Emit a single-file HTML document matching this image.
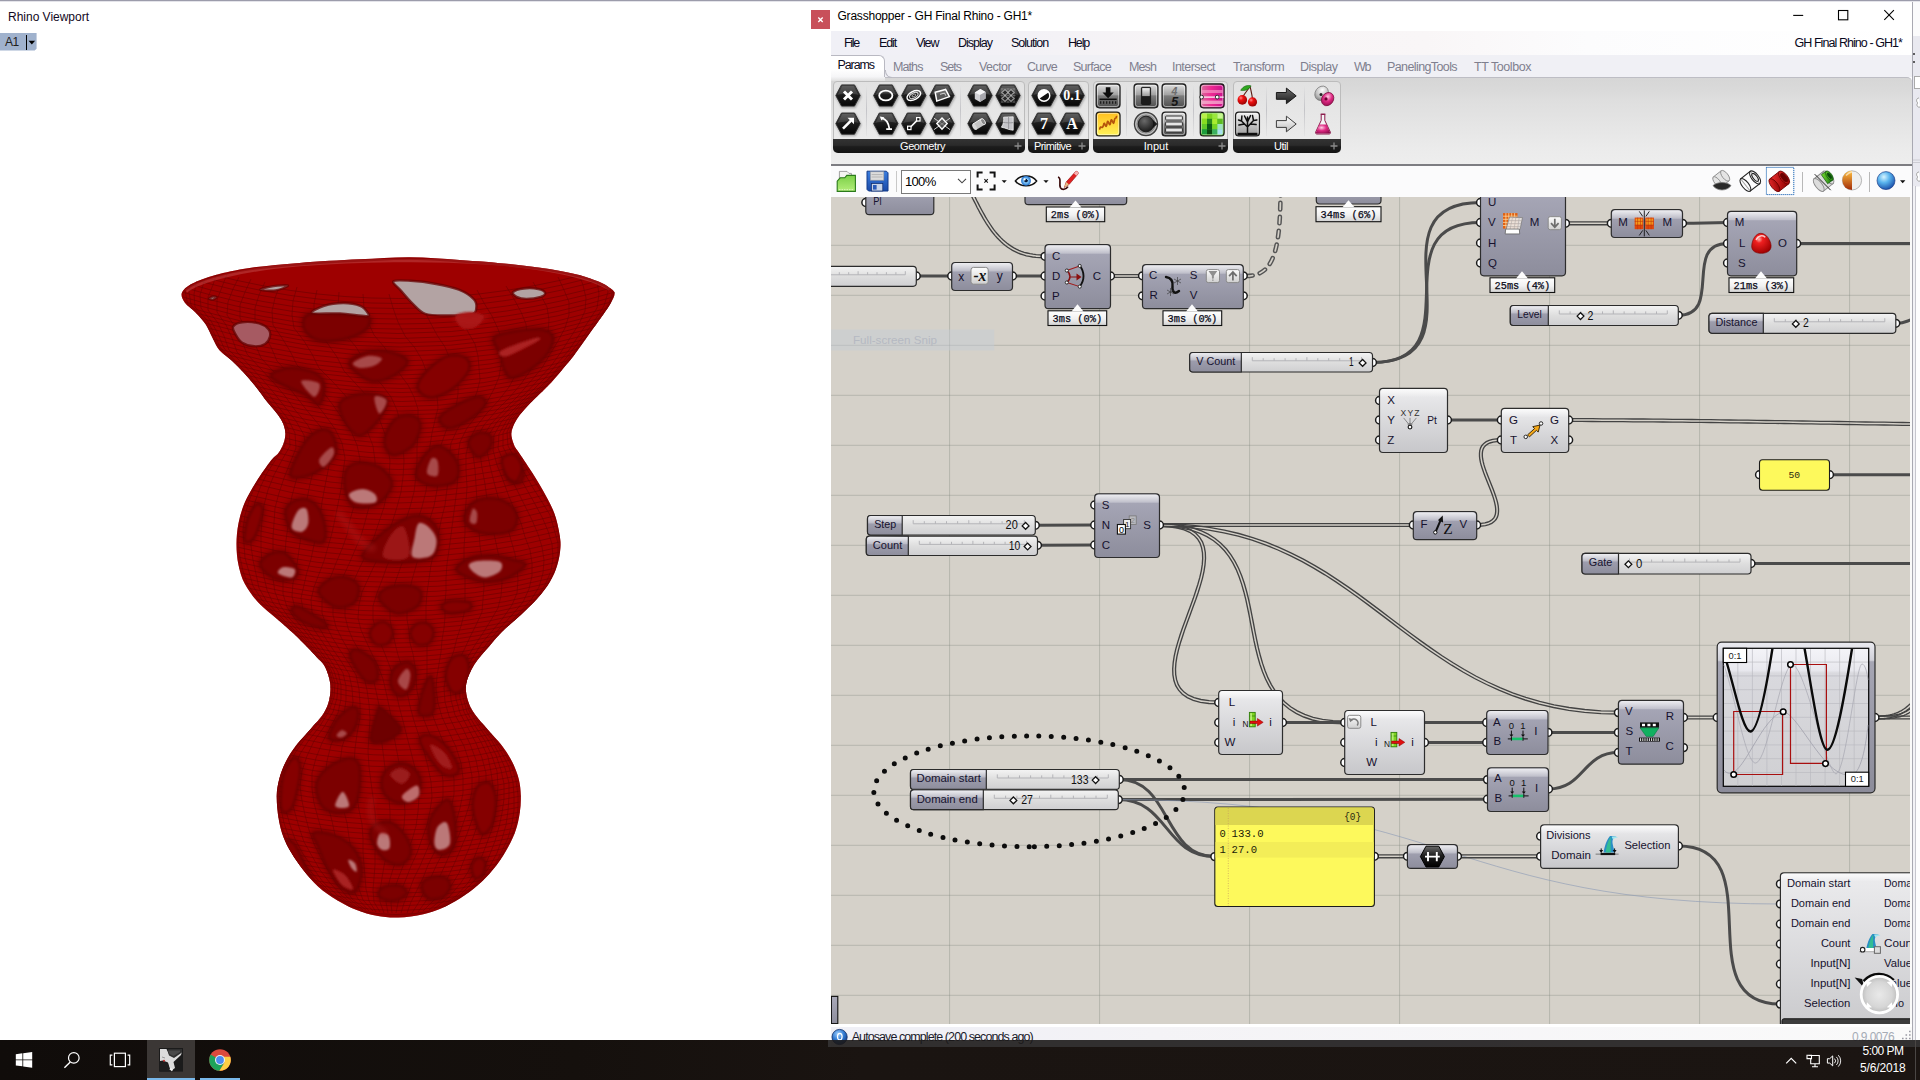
<!DOCTYPE html>
<html><head><meta charset="utf-8"><title>Grasshopper - GH Final Rhino</title><style>html,body{margin:0;padding:0}body{width:1920px;height:1080px;overflow:hidden;background:#fff;position:relative;font-family:"Liberation Sans",sans-serif}
.a{position:absolute;display:block}.t{position:absolute;white-space:nowrap;display:block}svg{overflow:hidden}</style></head>
<body>
<!-- rhino viewport -->
<svg class="a" style="left:160px;top:240px" width="480" height="700" viewBox="160 240 480 700"><defs><clipPath id="vc"><path d="M181.9 292.8C183.1 289.7 186.3 286.8 191.9 283.8C197.5 280.8 206.1 277.5 215.7 274.9C225.3 272.2 235.7 269.9 249.6 267.9C263.6 265.9 281.2 264.3 299.4 262.9C317.6 261.5 340.6 260.2 359.0 259.3C377.4 258.4 393.2 257.1 410.0 257.2C426.8 257.3 443.1 258.8 459.7 259.9C476.3 261.0 494.6 262.4 509.5 263.9C524.4 265.4 537.7 267.1 549.3 268.9C560.9 270.7 570.9 272.8 579.2 274.9C587.5 277.0 593.8 279.5 599.1 281.8C604.4 284.1 608.4 286.8 611.0 288.8C613.6 290.8 614.6 291.5 614.6 293.8C614.6 296.1 612.9 299.2 611.0 302.7C609.1 306.2 606.1 310.4 603.1 314.7C600.1 319.0 596.4 324.0 593.1 328.6C589.8 333.2 586.5 338.0 583.2 342.6C579.9 347.2 576.5 352.2 573.2 356.5C569.9 360.8 566.9 364.1 563.2 368.4C559.6 372.7 555.3 378.1 551.3 382.4C547.3 386.7 543.4 390.3 539.4 394.3C535.4 398.3 531.0 402.3 527.4 406.3C523.8 410.3 520.0 414.6 517.5 418.2C515.0 421.8 513.5 425.2 512.5 428.2C511.5 431.2 511.2 433.1 511.5 436.1C511.8 439.1 513.3 443.4 514.5 446.1C515.7 448.8 516.0 448.3 518.8 452.5C521.6 456.7 527.1 464.7 531.3 471.3C535.5 477.9 540.0 485.1 543.8 492.0C547.6 498.9 551.6 506.0 554.2 513.0C556.8 520.0 558.4 527.9 559.4 533.8C560.4 539.7 560.8 543.1 560.4 548.3C560.0 553.5 559.0 559.4 557.3 565.0C555.6 570.6 553.3 576.2 550.0 581.7C546.7 587.2 542.4 592.8 537.5 598.3C532.6 603.8 526.7 609.4 520.8 615.0C514.9 620.6 507.6 626.2 502.0 631.7C496.4 637.2 492.2 642.8 487.5 648.3C482.8 653.8 477.5 659.2 474.0 665.0C470.5 670.8 467.4 677.5 466.3 683.3C465.2 689.1 466.2 694.8 467.7 700.0C469.1 705.2 471.7 709.7 475.0 714.6C478.3 719.5 483.0 724.0 487.5 729.2C492.0 734.4 497.8 740.2 502.0 745.8C506.2 751.3 509.7 756.9 512.5 762.5C515.3 768.1 517.4 773.7 518.8 779.2C520.2 784.8 520.6 790.2 520.8 795.8C521.0 801.3 520.6 806.8 519.8 812.5C519.0 818.2 517.7 824.3 515.8 830.0C513.9 835.7 511.5 840.9 508.3 846.7C505.1 852.5 501.1 859.2 496.7 865.0C492.3 870.8 487.0 876.7 481.7 881.7C476.4 886.7 471.1 890.8 465.0 895.0C458.9 899.2 451.9 903.5 445.0 906.7C438.1 909.9 431.1 912.4 423.3 914.2C415.5 916.0 406.1 917.2 398.3 917.5C390.5 917.8 383.6 917.0 376.7 915.8C369.8 914.5 363.4 912.6 356.7 910.0C350.0 907.4 343.1 903.9 336.7 900.0C330.3 896.1 323.9 891.7 318.3 886.7C312.7 881.7 307.7 875.6 303.3 870.0C298.9 864.4 295.0 858.8 291.7 853.3C288.4 847.8 285.5 842.6 283.3 836.7C281.1 830.8 279.6 824.8 278.5 818.0C277.4 811.2 276.6 802.3 276.7 795.8C276.8 789.3 277.8 784.8 279.2 779.2C280.6 773.7 282.6 768.1 285.4 762.5C288.2 756.9 291.6 751.3 295.8 745.8C300.0 740.2 305.9 734.4 310.4 729.2C314.9 724.0 319.8 719.5 322.9 714.6C326.0 709.7 328.0 705.2 329.2 700.0C330.4 694.8 330.9 688.8 330.2 683.3C329.5 677.8 327.3 671.1 325.0 666.7C322.7 662.3 319.3 660.1 316.5 657.0C313.7 653.9 312.1 652.2 308.3 648.3C304.5 644.4 299.0 638.7 293.8 633.8C288.6 628.9 282.9 624.2 277.0 619.0C271.1 613.8 263.7 608.4 258.3 602.5C252.9 596.6 248.1 590.0 244.8 583.8C241.5 577.5 239.9 571.6 238.5 565.0C237.1 558.4 236.5 551.2 236.5 544.2C236.5 537.2 237.1 530.2 238.5 523.3C239.9 516.3 241.8 509.4 244.8 502.5C247.8 495.6 252.0 488.6 256.3 481.7C260.6 474.8 267.1 465.6 270.8 460.8C274.5 456.0 276.4 455.8 278.5 453.0C280.6 450.2 282.2 447.2 283.4 444.1C284.5 441.0 285.4 437.4 285.4 434.1C285.4 430.8 284.7 427.5 283.4 424.2C282.1 420.9 280.1 417.8 277.5 414.2C274.9 410.6 271.1 406.9 267.5 402.3C263.9 397.7 259.6 391.4 255.6 386.4C251.6 381.4 247.6 376.7 243.6 372.4C239.6 368.1 235.7 364.1 231.7 360.5C227.7 356.9 222.8 354.1 219.7 350.5C216.5 346.9 215.1 342.9 212.8 338.6C210.5 334.3 208.6 328.9 205.8 324.6C203.0 320.3 199.3 316.4 195.8 312.7C192.3 309.0 187.2 306.0 184.9 302.7C182.6 299.4 180.7 295.9 181.9 292.8z"/></clipPath><filter id="vb" x="-5%" y="-5%" width="110%" height="110%"><feGaussianBlur stdDeviation=".9"/></filter><filter id="vb2" x="-5%" y="-5%" width="110%" height="110%"><feGaussianBlur stdDeviation="2.2"/></filter></defs><path d="M181.9 292.8C183.1 289.7 186.3 286.8 191.9 283.8C197.5 280.8 206.1 277.5 215.7 274.9C225.3 272.2 235.7 269.9 249.6 267.9C263.6 265.9 281.2 264.3 299.4 262.9C317.6 261.5 340.6 260.2 359.0 259.3C377.4 258.4 393.2 257.1 410.0 257.2C426.8 257.3 443.1 258.8 459.7 259.9C476.3 261.0 494.6 262.4 509.5 263.9C524.4 265.4 537.7 267.1 549.3 268.9C560.9 270.7 570.9 272.8 579.2 274.9C587.5 277.0 593.8 279.5 599.1 281.8C604.4 284.1 608.4 286.8 611.0 288.8C613.6 290.8 614.6 291.5 614.6 293.8C614.6 296.1 612.9 299.2 611.0 302.7C609.1 306.2 606.1 310.4 603.1 314.7C600.1 319.0 596.4 324.0 593.1 328.6C589.8 333.2 586.5 338.0 583.2 342.6C579.9 347.2 576.5 352.2 573.2 356.5C569.9 360.8 566.9 364.1 563.2 368.4C559.6 372.7 555.3 378.1 551.3 382.4C547.3 386.7 543.4 390.3 539.4 394.3C535.4 398.3 531.0 402.3 527.4 406.3C523.8 410.3 520.0 414.6 517.5 418.2C515.0 421.8 513.5 425.2 512.5 428.2C511.5 431.2 511.2 433.1 511.5 436.1C511.8 439.1 513.3 443.4 514.5 446.1C515.7 448.8 516.0 448.3 518.8 452.5C521.6 456.7 527.1 464.7 531.3 471.3C535.5 477.9 540.0 485.1 543.8 492.0C547.6 498.9 551.6 506.0 554.2 513.0C556.8 520.0 558.4 527.9 559.4 533.8C560.4 539.7 560.8 543.1 560.4 548.3C560.0 553.5 559.0 559.4 557.3 565.0C555.6 570.6 553.3 576.2 550.0 581.7C546.7 587.2 542.4 592.8 537.5 598.3C532.6 603.8 526.7 609.4 520.8 615.0C514.9 620.6 507.6 626.2 502.0 631.7C496.4 637.2 492.2 642.8 487.5 648.3C482.8 653.8 477.5 659.2 474.0 665.0C470.5 670.8 467.4 677.5 466.3 683.3C465.2 689.1 466.2 694.8 467.7 700.0C469.1 705.2 471.7 709.7 475.0 714.6C478.3 719.5 483.0 724.0 487.5 729.2C492.0 734.4 497.8 740.2 502.0 745.8C506.2 751.3 509.7 756.9 512.5 762.5C515.3 768.1 517.4 773.7 518.8 779.2C520.2 784.8 520.6 790.2 520.8 795.8C521.0 801.3 520.6 806.8 519.8 812.5C519.0 818.2 517.7 824.3 515.8 830.0C513.9 835.7 511.5 840.9 508.3 846.7C505.1 852.5 501.1 859.2 496.7 865.0C492.3 870.8 487.0 876.7 481.7 881.7C476.4 886.7 471.1 890.8 465.0 895.0C458.9 899.2 451.9 903.5 445.0 906.7C438.1 909.9 431.1 912.4 423.3 914.2C415.5 916.0 406.1 917.2 398.3 917.5C390.5 917.8 383.6 917.0 376.7 915.8C369.8 914.5 363.4 912.6 356.7 910.0C350.0 907.4 343.1 903.9 336.7 900.0C330.3 896.1 323.9 891.7 318.3 886.7C312.7 881.7 307.7 875.6 303.3 870.0C298.9 864.4 295.0 858.8 291.7 853.3C288.4 847.8 285.5 842.6 283.3 836.7C281.1 830.8 279.6 824.8 278.5 818.0C277.4 811.2 276.6 802.3 276.7 795.8C276.8 789.3 277.8 784.8 279.2 779.2C280.6 773.7 282.6 768.1 285.4 762.5C288.2 756.9 291.6 751.3 295.8 745.8C300.0 740.2 305.9 734.4 310.4 729.2C314.9 724.0 319.8 719.5 322.9 714.6C326.0 709.7 328.0 705.2 329.2 700.0C330.4 694.8 330.9 688.8 330.2 683.3C329.5 677.8 327.3 671.1 325.0 666.7C322.7 662.3 319.3 660.1 316.5 657.0C313.7 653.9 312.1 652.2 308.3 648.3C304.5 644.4 299.0 638.7 293.8 633.8C288.6 628.9 282.9 624.2 277.0 619.0C271.1 613.8 263.7 608.4 258.3 602.5C252.9 596.6 248.1 590.0 244.8 583.8C241.5 577.5 239.9 571.6 238.5 565.0C237.1 558.4 236.5 551.2 236.5 544.2C236.5 537.2 237.1 530.2 238.5 523.3C239.9 516.3 241.8 509.4 244.8 502.5C247.8 495.6 252.0 488.6 256.3 481.7C260.6 474.8 267.1 465.6 270.8 460.8C274.5 456.0 276.4 455.8 278.5 453.0C280.6 450.2 282.2 447.2 283.4 444.1C284.5 441.0 285.4 437.4 285.4 434.1C285.4 430.8 284.7 427.5 283.4 424.2C282.1 420.9 280.1 417.8 277.5 414.2C274.9 410.6 271.1 406.9 267.5 402.3C263.9 397.7 259.6 391.4 255.6 386.4C251.6 381.4 247.6 376.7 243.6 372.4C239.6 368.1 235.7 364.1 231.7 360.5C227.7 356.9 222.8 354.1 219.7 350.5C216.5 346.9 215.1 342.9 212.8 338.6C210.5 334.3 208.6 328.9 205.8 324.6C203.0 320.3 199.3 316.4 195.8 312.7C192.3 309.0 187.2 306.0 184.9 302.7C182.6 299.4 180.7 295.9 181.9 292.8z" fill="#9e0000"/><g clip-path="url(#vc)"><path d="M182 266Q398 331 615 266M182 271Q398 336 615 271M182 276Q398 341 615 276M182 282Q398 346 615 282M182 287Q398 351 615 287M182 292Q398 356 615 292M183 297Q398 361 613 297M185 302Q398 365 611 302M190 308Q399 369 608 308M196 313Q400 373 604 313M200 318Q400 376 601 318M205 323Q401 380 597 323M208 328Q400 384 593 328M210 334Q400 388 590 334M213 339Q399 393 586 339M216 344Q399 397 582 344M219 349Q399 401 578 349M224 354Q400 404 575 354M231 360Q401 408 571 360M236 365Q401 412 566 365M241 370Q402 415 562 370M246 375Q402 419 557 375M250 380Q402 423 553 380M255 386Q402 427 548 386M259 391Q401 431 543 391M263 396Q400 434 538 396M267 401Q400 438 533 401M271 406Q399 442 527 406M275 412Q399 446 523 412M279 417Q399 450 519 417M282 422Q399 454 516 422M284 427Q399 459 513 427M285 432Q399 463 512 432M285 438Q398 469 512 438M284 443Q399 474 514 443M281 448Q399 480 516 448M278 453Q399 486 519 453M273 458Q398 492 523 458M269 464Q398 498 526 464M265 469Q397 504 530 469M262 474Q397 510 533 474M258 479Q397 516 536 479M255 484Q397 522 539 484M252 490Q397 528 542 490M249 495Q397 534 545 495M246 500Q397 540 548 500M244 505Q397 545 550 505M242 510Q398 551 553 510M241 516Q398 556 555 516M239 521Q398 562 556 521M238 526Q398 567 557 526M238 531Q398 572 559 531M237 536Q398 578 560 536M237 542Q398 583 560 542M237 547Q399 588 560 547M237 552Q398 593 560 552M238 557Q398 598 559 557M238 562Q398 603 558 562M239 568Q398 607 556 568M241 573Q398 612 554 573M243 578Q397 617 552 578M245 583Q397 621 549 583M248 588Q397 625 545 588M252 594Q396 629 541 594M256 599Q396 633 537 599M260 604Q396 637 532 604M266 609Q396 641 527 609M272 614Q397 645 521 614M278 620Q397 648 516 620M284 625Q397 652 510 625M289 630Q397 656 504 630M295 635Q397 660 499 635M300 640Q397 664 494 640M306 646Q398 668 490 646M311 651Q398 672 485 651M316 656Q398 676 481 656M320 661Q399 680 477 661M325 666Q399 684 473 666M327 672Q399 689 471 672M328 677Q399 693 469 677M330 682Q398 698 467 682M330 687Q398 703 467 687M330 692Q398 708 467 692M329 698Q398 714 467 698M328 703Q399 719 469 703M326 708Q399 725 472 708M324 713Q399 730 474 713M320 718Q399 736 478 718M315 724Q399 743 483 724M311 729Q399 749 487 729M306 734Q399 755 492 734M302 739Q399 761 496 739M297 744Q399 767 501 744M293 750Q399 773 504 750M290 755Q399 779 508 755M287 760Q399 785 511 760M284 765Q399 790 514 765M282 770Q399 796 515 770M281 776Q399 801 517 776M279 781Q399 807 519 781M278 786Q399 812 520 786M277 791Q399 817 520 791M277 796Q399 823 521 796M277 802Q399 828 520 802M278 807Q399 833 520 807M278 812Q399 838 520 812M278 817Q399 843 519 817M280 822Q399 847 518 822M281 828Q399 852 516 828M282 833Q398 857 515 833M284 838Q398 862 512 838M287 843Q398 866 510 843M289 848Q398 871 507 848M292 854Q398 875 504 854M296 859Q398 880 501 859M299 864Q398 884 497 864M303 869Q398 888 493 869M307 874Q398 893 488 874M312 880Q398 897 484 880M317 885Q397 901 478 885M323 890Q397 905 471 890M330 895Q397 909 465 895M337 900Q397 912 456 900M348 906Q397 915 447 906M359 911Q396 918 433 911" fill="none" stroke="#640000" stroke-width=".8" opacity=".7"/><path d="M186 263L186 277L185 291L188 305L201 318L210 332L217 346L231 360L245 374L257 388L267 402L279 416L285 430L283 444L274 458L263 472L254 486L246 500L242 514L239 528L238 543L240 557L243 571L248 585L258 599L272 613L287 627L301 640L314 654L326 668L330 682L329 696L325 710L315 724L303 738L292 752L284 766L279 780L277 794L278 808L280 822L283 836L290 850L299 864L311 878L327 892L350 906M192 265L191 279L189 292L191 305L203 319L211 332L218 346L231 360L245 374L257 388L267 402L279 416L285 430L283 444L274 458L264 472L255 486L249 501L245 515L243 530L244 544L245 558L249 572L253 586L262 600L275 614L289 627L303 641L315 655L326 668L330 682L330 696L325 710L315 724L303 738L292 752L284 766L279 780L277 794L278 808L280 822L285 836L292 851L302 865L314 879L329 893L351 907M199 267L197 280L194 294L195 307L207 320L214 333L220 347L233 361L246 374L258 388L268 402L280 416L286 430L285 445L276 459L267 473L260 488L255 502L252 517L251 532L251 546L253 560L256 574L259 588L267 602L279 615L292 628L305 641L317 655L328 669L331 682L330 696L326 710L315 724L303 738L293 752L285 766L281 780L279 795L281 809L284 823L289 838L297 852L306 866L318 880L332 894L353 907M208 269L204 282L200 295L201 308L211 321L218 334L224 348L236 362L249 375L261 389L271 403L283 417L289 431L290 446L282 460L274 475L268 490L264 505L262 520L261 534L261 549L262 563L264 577L267 590L273 603L284 616L296 629L308 642L319 656L329 669L333 683L332 697L327 711L317 725L305 739L295 753L288 767L285 782L284 796L286 811L290 825L295 839L303 854L313 868L323 882L337 895L356 908M217 272L213 285L208 297L208 310L218 323L224 336L229 350L242 363L255 377L266 391L277 405L288 419L295 433L296 448L290 463L284 478L279 493L275 508L274 523L273 537L273 552L273 565L273 579L275 592L280 605L289 618L300 630L311 643L322 656L331 670L335 683L334 697L329 711L320 726L309 740L300 754L294 769L291 783L291 798L295 813L299 827L304 842L312 856L320 870L330 883L342 896L359 909M227 274L222 287L217 300L217 312L226 325L232 338L237 352L249 365L262 379L274 393L285 407L296 421L304 435L306 450L301 465L296 481L292 496L289 511L288 526L286 540L285 554L284 568L283 581L283 594L287 607L295 619L305 631L315 644L325 657L334 671L338 684L337 698L333 712L324 727L314 741L307 756L302 771L300 786L302 801L305 815L309 830L314 844L321 858L329 872L337 885L347 897L363 910M239 277L233 289L228 302L227 315L236 328L242 341L247 354L260 368L273 382L285 396L295 410L307 424L315 438L317 453L314 468L310 484L307 499L304 514L302 529L300 543L298 557L296 570L293 583L292 596L295 608L301 620L310 633L320 645L329 658L338 672L341 685L341 699L338 713L330 728L322 743L316 758L312 773L312 789L314 803L318 818L322 832L326 846L332 860L338 873L344 886L352 899L366 910M251 279L245 292L240 305L240 318L248 331L255 344L261 358L273 371L287 385L298 399L309 413L320 426L328 440L331 455L328 471L325 486L322 502L320 517L317 531L314 545L311 559L307 572L304 585L301 598L303 610L309 622L317 634L326 647L335 660L343 673L346 686L346 700L344 715L338 730L331 745L327 761L325 776L326 791L328 806L332 821L335 835L339 849L343 862L347 875L352 887L358 899L369 911M265 282L259 295L255 308L255 321L264 334L271 347L277 361L290 375L303 388L315 402L325 415L335 429L342 443L345 458L343 473L341 489L338 504L335 519L332 533L328 547L324 561L319 574L314 587L311 600L312 612L317 624L324 636L332 648L341 661L349 674L352 688L353 702L351 716L347 732L342 747L340 763L339 779L341 794L343 808L347 823L349 837L351 850L354 863L356 876L359 889L363 900L373 911M280 285L275 298L272 311L273 325L282 338L290 351L297 365L310 378L323 392L333 405L342 418L351 431L357 445L360 459L359 475L357 490L354 506L350 520L347 535L342 549L336 563L331 576L325 589L322 601L322 613L326 625L332 637L340 650L348 662L356 675L359 689L360 703L360 718L357 734L355 749L354 765L355 781L357 796L359 810L362 824L363 838L363 852L364 865L365 877L366 889L369 901L376 912M297 287L293 301L292 315L294 328L304 341L312 354L319 368L332 381L344 394L354 407L361 420L368 433L373 446L375 461L375 476L372 491L369 507L365 522L361 536L355 550L349 564L343 577L337 590L333 603L333 615L336 627L342 639L349 651L357 664L364 677L367 690L369 704L370 719L369 735L368 751L369 767L371 782L373 797L375 812L376 826L376 839L375 853L375 865L374 878L373 890L374 902L380 912M317 290L314 304L314 318L318 331L328 344L337 357L344 371L356 384L367 396L375 409L380 421L385 434L388 447L390 461L389 477L387 492L384 507L379 522L374 537L368 551L361 565L355 578L349 591L345 604L345 616L348 628L353 640L360 652L367 665L373 678L376 691L379 705L380 720L381 736L383 752L385 768L387 783L389 798L390 812L390 826L389 840L387 853L384 866L382 878L380 891L380 902L384 913M339 292L338 306L340 320L345 334L356 347L364 360L371 373L382 385L391 397L397 410L400 422L402 434L403 447L404 461L403 477L401 492L397 507L392 523L387 537L381 552L374 566L368 579L362 592L359 605L358 618L361 630L366 641L372 654L378 666L383 679L386 692L389 706L392 721L394 737L397 752L400 768L403 783L404 798L405 812L404 826L401 840L397 853L394 866L390 879L387 891L386 902L388 913M363 294L364 308L368 322L374 335L385 348L392 361L399 373L408 385L414 397L418 409L418 421L418 434L417 447L417 461L416 476L414 492L410 507L405 523L400 537L393 552L387 566L382 580L377 593L373 606L373 619L376 631L380 642L385 654L390 667L394 679L396 692L399 706L403 721L407 737L411 752L415 768L417 783L419 798L418 812L416 826L412 840L407 853L403 866L398 879L394 891L391 903L392 913M389 294L393 308L398 322L405 336L415 348L422 360L427 373L433 384L437 396L438 408L435 420L432 433L430 446L429 460L428 476L426 491L422 507L417 522L412 537L406 552L401 566L396 580L392 594L390 607L390 619L392 631L395 643L398 655L402 667L405 679L407 692L410 706L414 721L419 736L424 751L428 767L431 782L432 797L430 811L427 825L422 839L417 853L411 866L406 879L401 891L398 903L396 913M418 294L423 308L430 322L437 335L445 347L450 359L454 371L458 383L458 394L456 407L451 419L446 431L441 445L440 459L439 475L437 490L434 506L429 522L425 537L420 552L416 566L412 580L409 593L407 607L407 619L409 631L410 643L413 654L415 666L416 678L417 691L420 705L424 720L430 735L436 750L441 766L443 781L443 796L441 810L437 824L432 838L426 852L420 866L414 878L409 891L404 903L401 913M447 293L454 306L462 320L468 332L475 344L478 356L479 368L480 380L477 392L472 404L465 417L457 430L451 443L449 458L449 474L447 489L445 505L441 521L438 536L434 551L431 565L429 579L427 593L426 606L426 618L426 630L427 642L427 653L427 665L427 677L427 690L429 704L434 719L440 734L446 749L451 764L454 779L454 794L451 809L447 823L441 838L435 851L428 865L423 878L417 890L411 902L407 913M477 290L484 303L492 316L498 329L502 340L503 352L501 365L499 377L494 389L487 402L477 415L467 428L460 442L458 457L458 472L457 488L455 504L453 519L451 535L449 550L447 564L446 578L446 591L445 604L445 617L444 628L442 640L441 652L439 664L437 676L436 689L438 703L442 717L449 732L456 747L461 763L463 778L463 793L460 808L456 822L450 837L444 851L437 864L431 877L425 890L419 902L412 913M506 286L514 299L521 312L526 324L527 336L525 348L521 361L516 374L509 387L499 400L487 413L476 427L469 441L466 455L466 471L467 487L466 502L465 518L465 533L464 548L464 562L465 576L465 589L465 602L464 614L461 626L457 638L454 650L450 662L446 675L444 688L445 702L449 716L456 731L464 746L469 761L472 776L472 791L469 806L464 821L459 835L452 849L446 863L440 876L434 889L426 901L418 912M533 282L540 294L547 307L549 320L548 332L543 344L537 357L530 371L521 384L509 398L496 411L484 425L476 439L473 454L475 470L476 485L477 501L478 516L479 531L480 546L482 560L483 573L484 587L483 599L482 612L477 623L471 635L465 648L459 660L454 673L450 686L451 700L455 715L463 729L470 744L476 760L479 775L479 790L476 805L472 820L467 834L461 848L455 862L449 875L443 888L434 900L423 911M558 277L564 290L569 302L569 315L565 328L558 341L550 354L542 368L530 382L518 396L504 410L491 424L482 438L480 453L482 468L485 484L487 499L490 514L493 529L496 543L499 557L501 570L502 583L501 596L498 608L491 620L483 633L475 645L467 658L460 672L455 685L456 699L460 713L468 728L476 743L482 758L486 773L486 788L484 803L480 818L475 832L470 846L464 860L459 873L451 886L442 899L429 910M578 272L583 285L586 298L585 311L579 324L570 338L561 352L551 366L538 380L525 394L510 408L497 422L488 436L487 451L490 466L494 482L498 497L502 512L507 526L511 540L515 554L517 567L518 580L517 593L512 605L503 618L493 630L482 643L473 657L465 670L459 684L460 698L464 712L472 727L481 742L488 757L491 772L493 787L491 802L488 816L484 831L479 845L474 858L468 872L460 884L449 897L434 909M594 268L597 281L599 294L597 308L588 322L579 335L569 350L557 364L545 378L531 392L516 407L502 421L494 435L493 450L497 465L503 480L508 494L514 509L521 523L525 537L530 550L532 563L532 576L529 589L523 602L512 615L500 628L488 642L478 656L468 669L463 683L463 697L467 712L475 726L485 741L492 756L497 771L498 786L497 800L495 815L492 829L487 843L482 856L476 870L468 883L456 896L438 908M606 265L607 278L608 292L604 306L595 320L585 334L574 348L563 362L550 377L536 391L520 405L507 420L499 434L498 448L504 463L511 478L518 492L525 506L532 520L538 534L542 547L544 560L543 573L539 587L531 600L519 613L505 627L492 641L481 655L471 669L465 683L465 697L469 711L478 725L488 740L496 755L501 770L504 784L504 799L502 813L499 827L495 841L490 854L484 868L474 881L461 894L442 907M612 263L613 277L613 290L609 304L599 318L589 333L578 347L566 361L553 375L539 390L524 404L511 418L503 433L503 447L510 461L519 476L527 490L535 504L542 517L548 531L552 544L553 558L551 571L545 585L536 599L523 612L508 626L494 640L482 654L472 668L466 682L466 696L471 711L480 725L491 739L499 754L505 768L509 783L509 797L508 811L506 825L502 839L497 853L490 866L480 880L465 893L444 907M615 262L615 276L615 290L610 304L601 318L590 332L580 346L569 360L556 375L542 389L527 403L514 417L507 432L508 446L516 460L525 474L533 488L542 502L550 515L554 529L558 543L558 556L555 570L548 584L538 598L524 612L508 626L495 640L483 654L473 668L467 682L467 696L472 710L482 724L493 739L502 753L509 767L513 782L514 796L514 810L512 824L508 838L502 851L495 865L483 879L468 892L446 906M615 262L615 276L615 290L610 304L601 318L591 332L581 346L570 360L558 374L544 388L530 403L517 417L510 431L511 445L520 459L529 473L538 487L546 500L554 514L558 528L560 542L559 556L555 570L548 584L538 598L524 612L508 626L495 640L483 654L473 668L467 682L467 696L473 710L483 724L494 738L504 752L512 767L516 781L518 795L518 809L516 823L512 836L505 850L497 864L485 878L469 892L446 906" fill="none" stroke="#640000" stroke-width=".8" opacity=".6"/><g filter="url(#vb2)" opacity=".32"><path d="M303.6 319.8C304.6 316.8 305.9 314.7 312.0 313.8C318.1 312.9 331.0 314.0 340.0 314.5C349.0 315.0 361.2 315.6 366.2 316.9C371.2 318.2 370.4 319.7 369.8 322.2C369.2 324.7 367.0 329.0 362.6 331.8C358.2 334.6 350.5 337.7 343.3 339.1C336.1 340.5 325.5 341.5 319.3 340.3C313.1 339.1 308.6 335.2 306.0 331.8C303.4 328.4 302.6 322.8 303.6 319.8z" fill="none" stroke="#5a0000" stroke-width="8"/><path d="M493.8 337.9C495.8 334.3 504.4 333.2 511.8 331.8C519.2 330.4 531.9 329.2 538.3 329.4C544.7 329.6 548.0 331.1 550.4 333.1C552.8 335.1 553.6 337.7 552.8 341.5C552.0 345.3 549.5 351.1 545.5 355.9C541.5 360.7 534.3 366.8 528.7 370.4C523.1 374.0 515.8 377.6 511.8 377.6C507.8 377.6 506.6 374.4 504.6 370.4C502.6 366.4 501.6 358.9 499.8 353.5C498.0 348.1 491.8 341.5 493.8 337.9z" fill="none" stroke="#5a0000" stroke-width="8"/><path d="M349.3 363.1C349.7 359.5 357.2 355.5 362.6 353.5C368.0 351.5 375.4 350.7 381.8 351.1C388.2 351.5 396.9 353.9 401.1 355.9C405.3 357.9 408.3 359.9 407.1 363.1C405.9 366.3 399.3 372.2 393.9 375.2C388.5 378.2 380.2 381.2 374.6 381.2C369.0 381.2 364.4 378.2 360.2 375.2C356.0 372.2 348.9 366.7 349.3 363.1z" fill="none" stroke="#5a0000" stroke-width="8"/><path d="M418.0 384.8C419.2 380.4 424.8 372.8 430.0 368.0C435.2 363.2 443.2 357.5 449.2 355.9C455.2 354.3 462.9 355.9 466.1 358.3C469.3 360.7 470.5 365.6 468.5 370.4C466.5 375.2 459.7 382.8 454.1 387.2C448.5 391.6 440.0 395.6 434.8 396.8C429.6 398.0 425.6 396.4 422.8 394.4C420.0 392.4 416.8 389.2 418.0 384.8z" fill="none" stroke="#5a0000" stroke-width="8"/><path d="M271.1 375.2C272.3 372.4 283.2 368.4 290.4 368.0C297.6 367.6 308.8 370.0 314.4 372.8C320.0 375.6 323.3 379.6 324.1 384.8C324.9 390.0 322.5 402.5 319.3 404.1C316.1 405.7 310.8 397.6 304.8 394.4C298.8 391.2 288.8 388.0 283.2 384.8C277.6 381.6 269.9 378.0 271.1 375.2z" fill="none" stroke="#5a0000" stroke-width="8"/><path d="M339.7 404.1C340.9 399.5 347.2 397.2 353.0 395.6C358.8 394.0 369.0 393.6 374.6 394.4C380.2 395.2 385.9 396.5 386.7 400.5C387.5 404.5 383.8 412.7 379.4 418.5C375.0 424.3 365.8 434.6 360.2 435.4C354.6 436.2 349.1 428.5 345.7 423.3C342.3 418.1 338.5 408.7 339.7 404.1z" fill="none" stroke="#5a0000" stroke-width="8"/><path d="M385.5 435.4C387.1 430.2 391.7 421.7 396.3 418.5C400.9 415.3 409.1 414.9 413.1 416.1C417.1 417.3 420.4 420.9 420.4 425.7C420.4 430.5 417.1 440.2 413.1 445.0C409.1 449.8 400.7 453.8 396.3 454.6C391.9 455.4 388.5 453.0 386.7 449.8C384.9 446.6 383.9 440.6 385.5 435.4z" fill="none" stroke="#5a0000" stroke-width="8"/><path d="M439.6 418.5C440.4 414.9 447.7 410.1 454.1 406.5C460.5 402.9 472.9 397.2 478.1 396.8C483.3 396.4 486.6 400.5 485.4 404.1C484.2 407.7 476.9 414.5 470.9 418.5C464.9 422.5 454.4 428.1 449.2 428.1C444.0 428.1 438.8 422.1 439.6 418.5z" fill="none" stroke="#5a0000" stroke-width="8"/><path d="M468.5 442.6C468.5 438.6 474.5 434.2 478.1 433.0C481.7 431.8 488.2 433.0 490.2 435.4C492.2 437.8 492.2 443.8 490.2 447.4C488.2 451.0 481.7 457.8 478.1 457.0C474.5 456.2 468.5 446.6 468.5 442.6z" fill="none" stroke="#5a0000" stroke-width="8"/><path d="M290.4 473.9C290.4 468.3 300.0 449.8 304.8 442.6C309.6 435.4 314.9 432.1 319.3 430.5C323.7 428.9 328.5 429.4 331.3 433.0C334.1 436.6 337.3 446.6 336.1 452.2C334.9 457.8 329.3 462.7 324.1 466.7C318.9 470.7 310.4 475.1 304.8 476.3C299.2 477.5 290.4 479.5 290.4 473.9z" fill="none" stroke="#5a0000" stroke-width="8"/><path d="M345.8 471.3C347.9 466.4 352.7 463.6 358.3 462.9C363.9 462.2 373.6 464.0 379.2 467.1C384.8 470.2 390.3 477.2 391.7 481.7C393.1 486.2 390.3 490.4 387.5 494.2C384.7 498.0 380.6 502.5 375.0 504.6C369.4 506.7 359.1 508.8 354.2 506.7C349.3 504.6 347.2 498.0 345.8 492.1C344.4 486.2 343.7 476.2 345.8 471.3z" fill="none" stroke="#5a0000" stroke-width="8"/><path d="M416.7 477.5C414.6 473.3 417.7 466.0 420.8 460.8C423.9 455.6 430.5 447.7 435.4 446.3C440.3 444.9 446.2 449.0 450.0 452.5C453.8 456.0 457.6 462.2 458.3 467.1C459.0 472.0 458.4 478.6 454.2 481.7C450.0 484.8 439.6 486.5 433.3 485.8C427.1 485.1 418.8 481.7 416.7 477.5z" fill="none" stroke="#5a0000" stroke-width="8"/><path d="M504.2 469.2C504.6 465.7 509.4 460.8 512.5 460.8C515.6 460.8 521.5 465.7 522.9 469.2C524.3 472.7 522.9 479.6 520.8 481.7C518.7 483.8 513.2 483.8 510.4 481.7C507.6 479.6 503.8 472.7 504.2 469.2z" fill="none" stroke="#5a0000" stroke-width="8"/><path d="M285.4 512.9C285.4 508.0 288.2 504.8 291.7 502.5C295.2 500.2 301.8 498.3 306.3 499.4C310.8 500.4 315.7 504.1 318.8 508.8C321.9 513.5 324.3 522.0 325.0 527.5C325.7 533.0 325.7 540.0 322.9 542.1C320.1 544.2 313.5 541.7 308.3 540.0C303.1 538.3 295.5 536.2 291.7 531.7C287.9 527.2 285.4 517.8 285.4 512.9z" fill="none" stroke="#5a0000" stroke-width="8"/><path d="M362.5 556.7C361.5 552.7 370.9 543.8 377.1 537.9C383.4 532.0 393.1 524.9 400.0 521.3C406.9 517.6 413.2 515.7 418.8 516.0C424.4 516.3 430.0 519.6 433.3 523.3C436.6 526.9 438.5 532.3 438.5 537.9C438.5 543.5 438.3 552.7 433.3 556.7C428.3 560.7 416.6 561.0 408.3 561.9C400.0 562.8 390.9 562.8 383.3 561.9C375.7 561.0 363.5 560.7 362.5 556.7z" fill="none" stroke="#5a0000" stroke-width="8"/><path d="M464.6 519.2C464.2 515.0 467.0 508.1 470.8 504.6C474.6 501.1 481.6 498.7 487.5 498.3C493.4 497.9 501.4 499.7 506.3 502.5C511.2 505.3 515.7 510.5 516.7 515.0C517.7 519.5 516.7 526.5 512.5 529.6C508.3 532.7 498.3 533.8 491.7 533.8C485.1 533.8 477.4 532.0 472.9 529.6C468.4 527.2 465.0 523.4 464.6 519.2z" fill="none" stroke="#5a0000" stroke-width="8"/><path d="M456.3 569.2C456.3 566.1 462.9 561.1 468.8 558.8C474.7 556.5 484.4 555.4 491.7 555.6C499.0 555.8 506.9 558.2 512.5 559.8C518.0 561.4 525.7 562.0 525.0 565.0C524.3 568.0 514.5 574.7 508.3 577.5C502.1 580.3 494.1 581.7 487.5 581.7C480.9 581.7 474.0 579.6 468.8 577.5C463.6 575.4 456.3 572.3 456.3 569.2z" fill="none" stroke="#5a0000" stroke-width="8"/><path d="M260.4 565.0C259.7 561.2 265.0 556.7 268.8 554.6C272.6 552.5 279.1 551.1 283.3 552.5C287.5 553.9 291.4 559.4 293.8 562.9C296.2 566.4 298.6 570.5 297.9 573.3C297.2 576.1 293.8 578.9 289.6 579.6C285.4 580.3 277.8 579.9 272.9 577.5C268.0 575.1 261.1 568.8 260.4 565.0z" fill="none" stroke="#5a0000" stroke-width="8"/><path d="M318.8 592.1C317.8 587.6 324.7 582.0 329.2 579.6C333.7 577.2 340.9 576.5 345.8 577.5C350.7 578.5 356.9 581.6 358.3 585.8C359.7 590.0 358.0 599.0 354.2 602.5C350.4 606.0 341.3 608.4 335.4 606.7C329.5 605.0 319.8 596.6 318.8 592.1z" fill="none" stroke="#5a0000" stroke-width="8"/><path d="M379.2 598.3C377.8 594.1 382.6 590.0 387.5 587.9C392.4 585.8 402.8 585.1 408.3 585.8C413.9 586.5 419.4 588.6 420.8 592.1C422.2 595.6 420.9 603.2 416.7 606.7C412.5 610.2 402.1 614.3 395.8 612.9C389.6 611.5 380.6 602.5 379.2 598.3z" fill="none" stroke="#5a0000" stroke-width="8"/><path d="M441.7 606.7C441.7 604.8 445.5 602.2 450.0 601.5C454.5 600.8 465.7 601.1 468.8 602.5C471.9 603.9 471.9 608.1 468.8 609.8C465.7 611.5 454.5 613.4 450.0 612.9C445.5 612.4 441.7 608.6 441.7 606.7z" fill="none" stroke="#5a0000" stroke-width="8"/><path d="M291.7 610.8C291.0 608.4 293.7 605.7 297.9 606.7C302.1 607.8 311.8 614.0 316.7 617.1C321.6 620.2 326.4 623.7 327.1 625.4C327.8 627.1 325.0 628.2 320.8 627.5C316.6 626.8 307.0 624.1 302.1 621.3C297.2 618.5 292.4 613.2 291.7 610.8z" fill="none" stroke="#5a0000" stroke-width="8"/><path d="M370.0 633.8C370.0 630.5 373.3 625.8 376.0 624.0C378.7 622.2 383.2 621.7 386.0 623.0C388.8 624.3 392.5 628.7 392.8 632.0C393.1 635.3 390.8 641.0 388.0 643.0C385.2 645.0 379.0 645.5 376.0 644.0C373.0 642.5 370.0 637.1 370.0 633.8z" fill="none" stroke="#5a0000" stroke-width="8"/><path d="M410.5 633.8C410.3 630.5 413.2 626.2 416.0 624.5C418.8 622.8 424.1 622.2 427.0 623.5C429.9 624.8 433.1 628.8 433.4 632.0C433.7 635.2 431.7 641.0 429.0 643.0C426.3 645.0 420.1 645.5 417.0 644.0C413.9 642.5 410.7 637.0 410.5 633.8z" fill="none" stroke="#5a0000" stroke-width="8"/><path d="M244.8 540.0C244.1 536.5 246.0 525.1 247.9 519.2C249.8 513.3 253.9 506.3 256.3 504.6C258.7 502.9 262.2 505.0 262.5 508.8C262.8 512.6 260.0 522.3 258.3 527.5C256.6 532.7 254.3 537.9 252.1 540.0C249.8 542.1 245.5 543.5 244.8 540.0z" fill="none" stroke="#5a0000" stroke-width="8"/><path d="M350.0 654.2C350.3 651.1 354.1 648.6 358.3 650.0C362.5 651.4 371.9 657.6 375.0 662.5C378.1 667.4 378.5 676.1 377.1 679.2C375.7 682.3 370.2 683.0 366.7 681.3C363.2 679.6 359.1 673.3 356.3 668.8C353.5 664.3 349.7 657.3 350.0 654.2z" fill="none" stroke="#5a0000" stroke-width="8"/><path d="M390.6 679.2C390.9 675.0 392.9 669.5 395.8 666.7C398.8 663.9 405.0 661.8 408.3 662.5C411.6 663.2 414.9 666.6 415.6 670.8C416.3 675.0 414.8 683.3 412.5 687.5C410.2 691.7 405.2 695.1 402.1 695.8C399.0 696.5 395.7 694.5 393.8 691.7C391.9 688.9 390.3 683.4 390.6 679.2z" fill="none" stroke="#5a0000" stroke-width="8"/><path d="M418.8 712.5C417.6 708.0 421.9 693.4 424.0 687.5C426.1 681.6 429.6 674.7 431.3 677.1C433.0 679.5 434.4 695.9 434.4 702.1C434.4 708.4 433.9 712.9 431.3 714.6C428.7 716.3 420.0 717.0 418.8 712.5z" fill="none" stroke="#5a0000" stroke-width="8"/><path d="M445.8 675.0C445.8 669.4 449.0 661.4 452.1 658.3C455.2 655.2 461.8 654.2 464.6 656.3C467.4 658.4 469.2 665.2 468.8 670.8C468.4 676.3 465.3 686.1 462.5 689.6C459.7 693.1 454.9 694.1 452.1 691.7C449.3 689.3 445.8 680.6 445.8 675.0z" fill="none" stroke="#5a0000" stroke-width="8"/><path d="M329.2 737.5C328.5 734.0 333.7 723.8 337.5 718.8C341.3 713.8 348.6 708.3 352.1 707.3C355.6 706.2 358.0 708.9 358.3 712.5C358.6 716.1 357.0 724.7 354.2 729.2C351.4 733.7 345.9 738.2 341.7 739.6C337.5 741.0 329.9 741.0 329.2 737.5z" fill="none" stroke="#5a0000" stroke-width="8"/><path d="M370.8 739.6C369.8 734.7 375.4 717.7 377.1 712.5C378.9 707.3 377.5 705.9 381.3 708.3C385.1 710.7 397.6 722.6 400.0 727.1C402.4 731.6 398.6 733.0 395.8 735.4C393.0 737.8 387.5 741.0 383.3 741.7C379.1 742.4 371.8 744.5 370.8 739.6z" fill="none" stroke="#5a0000" stroke-width="8"/><path d="M419.8 739.6C420.1 736.5 424.9 734.4 429.2 735.4C433.5 736.4 440.9 740.6 445.8 745.8C450.7 751.0 456.9 761.8 458.3 766.7C459.7 771.6 457.0 774.0 454.2 775.0C451.4 776.0 446.2 776.4 441.7 772.9C437.2 769.4 430.8 759.8 427.1 754.2C423.5 748.7 419.5 742.7 419.8 739.6z" fill="none" stroke="#5a0000" stroke-width="8"/><path d="M316.7 783.3C318.1 777.0 323.6 770.9 329.2 766.7C334.8 762.5 345.0 758.3 350.0 758.3C355.0 758.3 358.0 760.5 359.4 766.7C360.8 773.0 359.9 788.5 358.3 795.8C356.7 803.1 354.2 807.6 350.0 810.4C345.8 813.2 338.2 813.5 333.3 812.5C328.4 811.5 323.6 809.1 320.8 804.2C318.0 799.3 315.3 789.5 316.7 783.3z" fill="none" stroke="#5a0000" stroke-width="8"/><path d="M381.5 783.3C381.5 778.7 383.8 772.8 387.0 769.5C390.2 766.2 396.3 763.5 401.0 763.5C405.7 763.5 411.7 766.2 415.0 769.5C418.3 772.8 420.6 778.7 420.6 783.3C420.6 787.9 418.3 793.7 415.0 797.0C411.7 800.3 405.7 803.0 401.0 803.0C396.3 803.0 390.2 800.3 387.0 797.0C383.8 793.7 381.5 787.9 381.5 783.3z" fill="none" stroke="#5a0000" stroke-width="8"/><path d="M429.2 837.5C427.8 831.2 428.2 823.0 431.3 816.7C434.4 810.5 443.9 799.0 447.9 800.0C451.9 801.0 454.3 814.9 455.2 822.9C456.1 830.9 455.7 842.7 453.1 847.9C450.5 853.1 443.6 855.9 439.6 854.2C435.6 852.5 430.6 843.8 429.2 837.5z" fill="none" stroke="#5a0000" stroke-width="8"/><path d="M472.9 808.3C472.2 800.7 474.3 791.7 477.1 787.5C479.9 783.3 486.5 781.2 489.6 783.3C492.7 785.4 495.5 793.0 495.8 800.0C496.1 807.0 494.1 819.5 491.7 825.0C489.3 830.5 484.4 836.1 481.3 833.3C478.2 830.5 473.6 815.9 472.9 808.3z" fill="none" stroke="#5a0000" stroke-width="8"/><path d="M370.8 837.5C369.4 832.0 371.5 827.4 375.0 825.0C378.5 822.6 386.5 820.8 391.7 822.9C396.9 825.0 403.2 832.3 406.3 837.5C409.4 842.7 411.4 849.7 410.4 854.2C409.3 858.7 404.5 863.9 400.0 864.6C395.5 865.3 388.2 862.8 383.3 858.3C378.4 853.8 372.2 843.0 370.8 837.5z" fill="none" stroke="#5a0000" stroke-width="8"/><path d="M313.3 833.3C315.8 831.3 326.6 832.5 333.3 835.0C340.0 837.5 348.6 842.5 353.3 848.3C358.0 854.1 361.4 862.8 361.7 870.0C362.0 877.2 358.6 888.9 355.0 891.7C351.4 894.5 344.7 890.9 340.0 886.7C335.3 882.5 330.3 873.4 326.7 866.7C323.1 860.0 320.5 852.3 318.3 846.7C316.1 841.1 310.8 835.2 313.3 833.3z" fill="none" stroke="#5a0000" stroke-width="8"/><path d="M378.3 893.3C378.6 891.2 381.4 888.0 385.0 886.7C388.6 885.5 396.4 884.7 400.0 885.8C403.6 886.9 407.2 890.9 406.7 893.3C406.1 895.7 400.6 899.0 396.7 900.0C392.8 901.0 386.4 900.3 383.3 899.2C380.2 898.1 378.0 895.4 378.3 893.3z" fill="none" stroke="#5a0000" stroke-width="8"/><path d="M421.7 886.7C421.7 883.4 424.4 879.8 428.3 878.3C432.2 876.8 441.4 876.1 445.0 877.5C448.6 878.9 450.3 883.5 450.0 886.7C449.7 889.9 446.9 894.8 443.3 896.7C439.7 898.6 431.9 900.0 428.3 898.3C424.7 896.6 421.7 890.0 421.7 886.7z" fill="none" stroke="#5a0000" stroke-width="8"/><path d="M281.3 808.3C280.2 802.4 281.2 783.3 283.3 775.0C285.4 766.7 291.0 759.7 293.8 758.3C296.6 756.9 299.7 760.5 300.0 766.7C300.3 773.0 297.5 788.5 295.8 795.8C294.1 803.1 292.0 808.3 289.6 810.4C287.2 812.5 282.4 814.2 281.3 808.3z" fill="none" stroke="#5a0000" stroke-width="8"/><path d="M286.7 841.7C287.2 839.5 291.7 840.3 295.0 845.0C298.3 849.7 304.2 864.5 306.7 870.0C309.2 875.5 310.6 877.5 310.0 878.3C309.4 879.1 306.4 878.3 303.3 875.0C300.2 871.7 294.5 863.8 291.7 858.3C288.9 852.8 286.1 843.9 286.7 841.7z" fill="none" stroke="#5a0000" stroke-width="8"/><path d="M502.2 459.4C503.4 455.8 511.0 453.4 514.2 454.6C517.4 455.8 521.1 462.3 521.5 466.7C521.9 471.1 519.0 479.5 516.6 481.1C514.2 482.7 509.4 479.9 507.0 476.3C504.6 472.7 501.0 463.0 502.2 459.4z" fill="none" stroke="#5a0000" stroke-width="8"/><path d="M471.7 866.0C472.2 862.7 475.8 858.7 478.0 858.0C480.2 857.3 484.2 859.3 485.0 862.0C485.8 864.7 484.7 871.3 483.0 874.0C481.3 876.7 476.9 879.3 475.0 878.0C473.1 876.7 471.2 869.3 471.7 866.0z" fill="none" stroke="#5a0000" stroke-width="8"/></g><g filter="url(#vb)"><path d="M303.6 319.8C304.6 316.8 305.9 314.7 312.0 313.8C318.1 312.9 331.0 314.0 340.0 314.5C349.0 315.0 361.2 315.6 366.2 316.9C371.2 318.2 370.4 319.7 369.8 322.2C369.2 324.7 367.0 329.0 362.6 331.8C358.2 334.6 350.5 337.7 343.3 339.1C336.1 340.5 325.5 341.5 319.3 340.3C313.1 339.1 308.6 335.2 306.0 331.8C303.4 328.4 302.6 322.8 303.6 319.8z" fill="#7b0000" stroke="#640000" stroke-width="2.4" stroke-opacity=".75"/><path d="M493.8 337.9C495.8 334.3 504.4 333.2 511.8 331.8C519.2 330.4 531.9 329.2 538.3 329.4C544.7 329.6 548.0 331.1 550.4 333.1C552.8 335.1 553.6 337.7 552.8 341.5C552.0 345.3 549.5 351.1 545.5 355.9C541.5 360.7 534.3 366.8 528.7 370.4C523.1 374.0 515.8 377.6 511.8 377.6C507.8 377.6 506.6 374.4 504.6 370.4C502.6 366.4 501.6 358.9 499.8 353.5C498.0 348.1 491.8 341.5 493.8 337.9z" fill="#7b0000" stroke="#640000" stroke-width="2.4" stroke-opacity=".75"/><path d="M349.3 363.1C349.7 359.5 357.2 355.5 362.6 353.5C368.0 351.5 375.4 350.7 381.8 351.1C388.2 351.5 396.9 353.9 401.1 355.9C405.3 357.9 408.3 359.9 407.1 363.1C405.9 366.3 399.3 372.2 393.9 375.2C388.5 378.2 380.2 381.2 374.6 381.2C369.0 381.2 364.4 378.2 360.2 375.2C356.0 372.2 348.9 366.7 349.3 363.1z" fill="#7b0000" stroke="#640000" stroke-width="2.4" stroke-opacity=".75"/><path d="M418.0 384.8C419.2 380.4 424.8 372.8 430.0 368.0C435.2 363.2 443.2 357.5 449.2 355.9C455.2 354.3 462.9 355.9 466.1 358.3C469.3 360.7 470.5 365.6 468.5 370.4C466.5 375.2 459.7 382.8 454.1 387.2C448.5 391.6 440.0 395.6 434.8 396.8C429.6 398.0 425.6 396.4 422.8 394.4C420.0 392.4 416.8 389.2 418.0 384.8z" fill="#850202" stroke="#640000" stroke-width="2.4" stroke-opacity=".75"/><path d="M271.1 375.2C272.3 372.4 283.2 368.4 290.4 368.0C297.6 367.6 308.8 370.0 314.4 372.8C320.0 375.6 323.3 379.6 324.1 384.8C324.9 390.0 322.5 402.5 319.3 404.1C316.1 405.7 310.8 397.6 304.8 394.4C298.8 391.2 288.8 388.0 283.2 384.8C277.6 381.6 269.9 378.0 271.1 375.2z" fill="#7b0000" stroke="#640000" stroke-width="2.4" stroke-opacity=".75"/><path d="M339.7 404.1C340.9 399.5 347.2 397.2 353.0 395.6C358.8 394.0 369.0 393.6 374.6 394.4C380.2 395.2 385.9 396.5 386.7 400.5C387.5 404.5 383.8 412.7 379.4 418.5C375.0 424.3 365.8 434.6 360.2 435.4C354.6 436.2 349.1 428.5 345.7 423.3C342.3 418.1 338.5 408.7 339.7 404.1z" fill="#7b0000" stroke="#640000" stroke-width="2.4" stroke-opacity=".75"/><path d="M385.5 435.4C387.1 430.2 391.7 421.7 396.3 418.5C400.9 415.3 409.1 414.9 413.1 416.1C417.1 417.3 420.4 420.9 420.4 425.7C420.4 430.5 417.1 440.2 413.1 445.0C409.1 449.8 400.7 453.8 396.3 454.6C391.9 455.4 388.5 453.0 386.7 449.8C384.9 446.6 383.9 440.6 385.5 435.4z" fill="#7b0000" stroke="#640000" stroke-width="2.4" stroke-opacity=".75"/><path d="M439.6 418.5C440.4 414.9 447.7 410.1 454.1 406.5C460.5 402.9 472.9 397.2 478.1 396.8C483.3 396.4 486.6 400.5 485.4 404.1C484.2 407.7 476.9 414.5 470.9 418.5C464.9 422.5 454.4 428.1 449.2 428.1C444.0 428.1 438.8 422.1 439.6 418.5z" fill="#7b0000" stroke="#640000" stroke-width="2.4" stroke-opacity=".75"/><path d="M468.5 442.6C468.5 438.6 474.5 434.2 478.1 433.0C481.7 431.8 488.2 433.0 490.2 435.4C492.2 437.8 492.2 443.8 490.2 447.4C488.2 451.0 481.7 457.8 478.1 457.0C474.5 456.2 468.5 446.6 468.5 442.6z" fill="#7b0000" stroke="#640000" stroke-width="2.4" stroke-opacity=".75"/><path d="M290.4 473.9C290.4 468.3 300.0 449.8 304.8 442.6C309.6 435.4 314.9 432.1 319.3 430.5C323.7 428.9 328.5 429.4 331.3 433.0C334.1 436.6 337.3 446.6 336.1 452.2C334.9 457.8 329.3 462.7 324.1 466.7C318.9 470.7 310.4 475.1 304.8 476.3C299.2 477.5 290.4 479.5 290.4 473.9z" fill="#7b0000" stroke="#640000" stroke-width="2.4" stroke-opacity=".75"/><path d="M345.8 471.3C347.9 466.4 352.7 463.6 358.3 462.9C363.9 462.2 373.6 464.0 379.2 467.1C384.8 470.2 390.3 477.2 391.7 481.7C393.1 486.2 390.3 490.4 387.5 494.2C384.7 498.0 380.6 502.5 375.0 504.6C369.4 506.7 359.1 508.8 354.2 506.7C349.3 504.6 347.2 498.0 345.8 492.1C344.4 486.2 343.7 476.2 345.8 471.3z" fill="#7b0000" stroke="#640000" stroke-width="2.4" stroke-opacity=".75"/><path d="M416.7 477.5C414.6 473.3 417.7 466.0 420.8 460.8C423.9 455.6 430.5 447.7 435.4 446.3C440.3 444.9 446.2 449.0 450.0 452.5C453.8 456.0 457.6 462.2 458.3 467.1C459.0 472.0 458.4 478.6 454.2 481.7C450.0 484.8 439.6 486.5 433.3 485.8C427.1 485.1 418.8 481.7 416.7 477.5z" fill="#7b0000" stroke="#640000" stroke-width="2.4" stroke-opacity=".75"/><path d="M504.2 469.2C504.6 465.7 509.4 460.8 512.5 460.8C515.6 460.8 521.5 465.7 522.9 469.2C524.3 472.7 522.9 479.6 520.8 481.7C518.7 483.8 513.2 483.8 510.4 481.7C507.6 479.6 503.8 472.7 504.2 469.2z" fill="#850202" stroke="#640000" stroke-width="2.4" stroke-opacity=".75"/><path d="M285.4 512.9C285.4 508.0 288.2 504.8 291.7 502.5C295.2 500.2 301.8 498.3 306.3 499.4C310.8 500.4 315.7 504.1 318.8 508.8C321.9 513.5 324.3 522.0 325.0 527.5C325.7 533.0 325.7 540.0 322.9 542.1C320.1 544.2 313.5 541.7 308.3 540.0C303.1 538.3 295.5 536.2 291.7 531.7C287.9 527.2 285.4 517.8 285.4 512.9z" fill="#7b0000" stroke="#640000" stroke-width="2.4" stroke-opacity=".75"/><path d="M362.5 556.7C361.5 552.7 370.9 543.8 377.1 537.9C383.4 532.0 393.1 524.9 400.0 521.3C406.9 517.6 413.2 515.7 418.8 516.0C424.4 516.3 430.0 519.6 433.3 523.3C436.6 526.9 438.5 532.3 438.5 537.9C438.5 543.5 438.3 552.7 433.3 556.7C428.3 560.7 416.6 561.0 408.3 561.9C400.0 562.8 390.9 562.8 383.3 561.9C375.7 561.0 363.5 560.7 362.5 556.7z" fill="#7b0000" stroke="#640000" stroke-width="2.4" stroke-opacity=".75"/><path d="M464.6 519.2C464.2 515.0 467.0 508.1 470.8 504.6C474.6 501.1 481.6 498.7 487.5 498.3C493.4 497.9 501.4 499.7 506.3 502.5C511.2 505.3 515.7 510.5 516.7 515.0C517.7 519.5 516.7 526.5 512.5 529.6C508.3 532.7 498.3 533.8 491.7 533.8C485.1 533.8 477.4 532.0 472.9 529.6C468.4 527.2 465.0 523.4 464.6 519.2z" fill="#7b0000" stroke="#640000" stroke-width="2.4" stroke-opacity=".75"/><path d="M456.3 569.2C456.3 566.1 462.9 561.1 468.8 558.8C474.7 556.5 484.4 555.4 491.7 555.6C499.0 555.8 506.9 558.2 512.5 559.8C518.0 561.4 525.7 562.0 525.0 565.0C524.3 568.0 514.5 574.7 508.3 577.5C502.1 580.3 494.1 581.7 487.5 581.7C480.9 581.7 474.0 579.6 468.8 577.5C463.6 575.4 456.3 572.3 456.3 569.2z" fill="#7b0000" stroke="#640000" stroke-width="2.4" stroke-opacity=".75"/><path d="M260.4 565.0C259.7 561.2 265.0 556.7 268.8 554.6C272.6 552.5 279.1 551.1 283.3 552.5C287.5 553.9 291.4 559.4 293.8 562.9C296.2 566.4 298.6 570.5 297.9 573.3C297.2 576.1 293.8 578.9 289.6 579.6C285.4 580.3 277.8 579.9 272.9 577.5C268.0 575.1 261.1 568.8 260.4 565.0z" fill="#7b0000" stroke="#640000" stroke-width="2.4" stroke-opacity=".75"/><path d="M318.8 592.1C317.8 587.6 324.7 582.0 329.2 579.6C333.7 577.2 340.9 576.5 345.8 577.5C350.7 578.5 356.9 581.6 358.3 585.8C359.7 590.0 358.0 599.0 354.2 602.5C350.4 606.0 341.3 608.4 335.4 606.7C329.5 605.0 319.8 596.6 318.8 592.1z" fill="#7b0000" stroke="#640000" stroke-width="2.4" stroke-opacity=".75"/><path d="M379.2 598.3C377.8 594.1 382.6 590.0 387.5 587.9C392.4 585.8 402.8 585.1 408.3 585.8C413.9 586.5 419.4 588.6 420.8 592.1C422.2 595.6 420.9 603.2 416.7 606.7C412.5 610.2 402.1 614.3 395.8 612.9C389.6 611.5 380.6 602.5 379.2 598.3z" fill="#7b0000" stroke="#640000" stroke-width="2.4" stroke-opacity=".75"/><path d="M441.7 606.7C441.7 604.8 445.5 602.2 450.0 601.5C454.5 600.8 465.7 601.1 468.8 602.5C471.9 603.9 471.9 608.1 468.8 609.8C465.7 611.5 454.5 613.4 450.0 612.9C445.5 612.4 441.7 608.6 441.7 606.7z" fill="#850202" stroke="#640000" stroke-width="2.4" stroke-opacity=".75"/><path d="M291.7 610.8C291.0 608.4 293.7 605.7 297.9 606.7C302.1 607.8 311.8 614.0 316.7 617.1C321.6 620.2 326.4 623.7 327.1 625.4C327.8 627.1 325.0 628.2 320.8 627.5C316.6 626.8 307.0 624.1 302.1 621.3C297.2 618.5 292.4 613.2 291.7 610.8z" fill="#7b0000" stroke="#640000" stroke-width="2.4" stroke-opacity=".75"/><path d="M370.0 633.8C370.0 630.5 373.3 625.8 376.0 624.0C378.7 622.2 383.2 621.7 386.0 623.0C388.8 624.3 392.5 628.7 392.8 632.0C393.1 635.3 390.8 641.0 388.0 643.0C385.2 645.0 379.0 645.5 376.0 644.0C373.0 642.5 370.0 637.1 370.0 633.8z" fill="#850202" stroke="#640000" stroke-width="2.4" stroke-opacity=".75"/><path d="M410.5 633.8C410.3 630.5 413.2 626.2 416.0 624.5C418.8 622.8 424.1 622.2 427.0 623.5C429.9 624.8 433.1 628.8 433.4 632.0C433.7 635.2 431.7 641.0 429.0 643.0C426.3 645.0 420.1 645.5 417.0 644.0C413.9 642.5 410.7 637.0 410.5 633.8z" fill="#850202" stroke="#640000" stroke-width="2.4" stroke-opacity=".75"/><path d="M244.8 540.0C244.1 536.5 246.0 525.1 247.9 519.2C249.8 513.3 253.9 506.3 256.3 504.6C258.7 502.9 262.2 505.0 262.5 508.8C262.8 512.6 260.0 522.3 258.3 527.5C256.6 532.7 254.3 537.9 252.1 540.0C249.8 542.1 245.5 543.5 244.8 540.0z" fill="#850202" stroke="#640000" stroke-width="2.4" stroke-opacity=".75"/><path d="M350.0 654.2C350.3 651.1 354.1 648.6 358.3 650.0C362.5 651.4 371.9 657.6 375.0 662.5C378.1 667.4 378.5 676.1 377.1 679.2C375.7 682.3 370.2 683.0 366.7 681.3C363.2 679.6 359.1 673.3 356.3 668.8C353.5 664.3 349.7 657.3 350.0 654.2z" fill="#7b0000" stroke="#640000" stroke-width="2.4" stroke-opacity=".75"/><path d="M390.6 679.2C390.9 675.0 392.9 669.5 395.8 666.7C398.8 663.9 405.0 661.8 408.3 662.5C411.6 663.2 414.9 666.6 415.6 670.8C416.3 675.0 414.8 683.3 412.5 687.5C410.2 691.7 405.2 695.1 402.1 695.8C399.0 696.5 395.7 694.5 393.8 691.7C391.9 688.9 390.3 683.4 390.6 679.2z" fill="#7b0000" stroke="#640000" stroke-width="2.4" stroke-opacity=".75"/><path d="M418.8 712.5C417.6 708.0 421.9 693.4 424.0 687.5C426.1 681.6 429.6 674.7 431.3 677.1C433.0 679.5 434.4 695.9 434.4 702.1C434.4 708.4 433.9 712.9 431.3 714.6C428.7 716.3 420.0 717.0 418.8 712.5z" fill="#7b0000" stroke="#640000" stroke-width="2.4" stroke-opacity=".75"/><path d="M445.8 675.0C445.8 669.4 449.0 661.4 452.1 658.3C455.2 655.2 461.8 654.2 464.6 656.3C467.4 658.4 469.2 665.2 468.8 670.8C468.4 676.3 465.3 686.1 462.5 689.6C459.7 693.1 454.9 694.1 452.1 691.7C449.3 689.3 445.8 680.6 445.8 675.0z" fill="#850202" stroke="#640000" stroke-width="2.4" stroke-opacity=".75"/><path d="M329.2 737.5C328.5 734.0 333.7 723.8 337.5 718.8C341.3 713.8 348.6 708.3 352.1 707.3C355.6 706.2 358.0 708.9 358.3 712.5C358.6 716.1 357.0 724.7 354.2 729.2C351.4 733.7 345.9 738.2 341.7 739.6C337.5 741.0 329.9 741.0 329.2 737.5z" fill="#7b0000" stroke="#640000" stroke-width="2.4" stroke-opacity=".75"/><path d="M370.8 739.6C369.8 734.7 375.4 717.7 377.1 712.5C378.9 707.3 377.5 705.9 381.3 708.3C385.1 710.7 397.6 722.6 400.0 727.1C402.4 731.6 398.6 733.0 395.8 735.4C393.0 737.8 387.5 741.0 383.3 741.7C379.1 742.4 371.8 744.5 370.8 739.6z" fill="#6e0000" stroke="#640000" stroke-width="2.4" stroke-opacity=".75"/><path d="M419.8 739.6C420.1 736.5 424.9 734.4 429.2 735.4C433.5 736.4 440.9 740.6 445.8 745.8C450.7 751.0 456.9 761.8 458.3 766.7C459.7 771.6 457.0 774.0 454.2 775.0C451.4 776.0 446.2 776.4 441.7 772.9C437.2 769.4 430.8 759.8 427.1 754.2C423.5 748.7 419.5 742.7 419.8 739.6z" fill="#850202" stroke="#640000" stroke-width="2.4" stroke-opacity=".75"/><path d="M316.7 783.3C318.1 777.0 323.6 770.9 329.2 766.7C334.8 762.5 345.0 758.3 350.0 758.3C355.0 758.3 358.0 760.5 359.4 766.7C360.8 773.0 359.9 788.5 358.3 795.8C356.7 803.1 354.2 807.6 350.0 810.4C345.8 813.2 338.2 813.5 333.3 812.5C328.4 811.5 323.6 809.1 320.8 804.2C318.0 799.3 315.3 789.5 316.7 783.3z" fill="#7b0000" stroke="#640000" stroke-width="2.4" stroke-opacity=".75"/><path d="M381.5 783.3C381.5 778.7 383.8 772.8 387.0 769.5C390.2 766.2 396.3 763.5 401.0 763.5C405.7 763.5 411.7 766.2 415.0 769.5C418.3 772.8 420.6 778.7 420.6 783.3C420.6 787.9 418.3 793.7 415.0 797.0C411.7 800.3 405.7 803.0 401.0 803.0C396.3 803.0 390.2 800.3 387.0 797.0C383.8 793.7 381.5 787.9 381.5 783.3z" fill="#7b0000" stroke="#640000" stroke-width="2.4" stroke-opacity=".75"/><path d="M429.2 837.5C427.8 831.2 428.2 823.0 431.3 816.7C434.4 810.5 443.9 799.0 447.9 800.0C451.9 801.0 454.3 814.9 455.2 822.9C456.1 830.9 455.7 842.7 453.1 847.9C450.5 853.1 443.6 855.9 439.6 854.2C435.6 852.5 430.6 843.8 429.2 837.5z" fill="#7b0000" stroke="#640000" stroke-width="2.4" stroke-opacity=".75"/><path d="M472.9 808.3C472.2 800.7 474.3 791.7 477.1 787.5C479.9 783.3 486.5 781.2 489.6 783.3C492.7 785.4 495.5 793.0 495.8 800.0C496.1 807.0 494.1 819.5 491.7 825.0C489.3 830.5 484.4 836.1 481.3 833.3C478.2 830.5 473.6 815.9 472.9 808.3z" fill="#850202" stroke="#640000" stroke-width="2.4" stroke-opacity=".75"/><path d="M370.8 837.5C369.4 832.0 371.5 827.4 375.0 825.0C378.5 822.6 386.5 820.8 391.7 822.9C396.9 825.0 403.2 832.3 406.3 837.5C409.4 842.7 411.4 849.7 410.4 854.2C409.3 858.7 404.5 863.9 400.0 864.6C395.5 865.3 388.2 862.8 383.3 858.3C378.4 853.8 372.2 843.0 370.8 837.5z" fill="#7b0000" stroke="#640000" stroke-width="2.4" stroke-opacity=".75"/><path d="M313.3 833.3C315.8 831.3 326.6 832.5 333.3 835.0C340.0 837.5 348.6 842.5 353.3 848.3C358.0 854.1 361.4 862.8 361.7 870.0C362.0 877.2 358.6 888.9 355.0 891.7C351.4 894.5 344.7 890.9 340.0 886.7C335.3 882.5 330.3 873.4 326.7 866.7C323.1 860.0 320.5 852.3 318.3 846.7C316.1 841.1 310.8 835.2 313.3 833.3z" fill="#7b0000" stroke="#640000" stroke-width="2.4" stroke-opacity=".75"/><path d="M378.3 893.3C378.6 891.2 381.4 888.0 385.0 886.7C388.6 885.5 396.4 884.7 400.0 885.8C403.6 886.9 407.2 890.9 406.7 893.3C406.1 895.7 400.6 899.0 396.7 900.0C392.8 901.0 386.4 900.3 383.3 899.2C380.2 898.1 378.0 895.4 378.3 893.3z" fill="#7b0000" stroke="#640000" stroke-width="2.4" stroke-opacity=".75"/><path d="M421.7 886.7C421.7 883.4 424.4 879.8 428.3 878.3C432.2 876.8 441.4 876.1 445.0 877.5C448.6 878.9 450.3 883.5 450.0 886.7C449.7 889.9 446.9 894.8 443.3 896.7C439.7 898.6 431.9 900.0 428.3 898.3C424.7 896.6 421.7 890.0 421.7 886.7z" fill="#7b0000" stroke="#640000" stroke-width="2.4" stroke-opacity=".75"/><path d="M281.3 808.3C280.2 802.4 281.2 783.3 283.3 775.0C285.4 766.7 291.0 759.7 293.8 758.3C296.6 756.9 299.7 760.5 300.0 766.7C300.3 773.0 297.5 788.5 295.8 795.8C294.1 803.1 292.0 808.3 289.6 810.4C287.2 812.5 282.4 814.2 281.3 808.3z" fill="#850202" stroke="#640000" stroke-width="2.4" stroke-opacity=".75"/><path d="M286.7 841.7C287.2 839.5 291.7 840.3 295.0 845.0C298.3 849.7 304.2 864.5 306.7 870.0C309.2 875.5 310.6 877.5 310.0 878.3C309.4 879.1 306.4 878.3 303.3 875.0C300.2 871.7 294.5 863.8 291.7 858.3C288.9 852.8 286.1 843.9 286.7 841.7z" fill="#850202" stroke="#640000" stroke-width="2.4" stroke-opacity=".75"/><path d="M502.2 459.4C503.4 455.8 511.0 453.4 514.2 454.6C517.4 455.8 521.1 462.3 521.5 466.7C521.9 471.1 519.0 479.5 516.6 481.1C514.2 482.7 509.4 479.9 507.0 476.3C504.6 472.7 501.0 463.0 502.2 459.4z" fill="#850202" stroke="#640000" stroke-width="2.4" stroke-opacity=".75"/><path d="M471.7 866.0C472.2 862.7 475.8 858.7 478.0 858.0C480.2 857.3 484.2 859.3 485.0 862.0C485.8 864.7 484.7 871.3 483.0 874.0C481.3 876.7 476.9 879.3 475.0 878.0C473.1 876.7 471.2 869.3 471.7 866.0z" fill="#850202" stroke="#640000" stroke-width="2.4" stroke-opacity=".75"/></g><path d="M393.4 281.3C395.0 279.6 403.8 280.4 410.7 280.8C417.6 281.2 426.8 282.2 434.8 283.7C442.8 285.2 452.4 287.1 458.9 289.7C465.4 292.3 470.9 296.1 473.8 299.3C476.7 302.5 476.7 306.5 476.2 309.0C475.7 311.5 475.8 313.4 470.9 314.5C466.0 315.6 454.4 315.6 446.8 315.5C439.2 315.4 430.8 315.7 425.2 313.8C419.6 311.9 417.1 308.0 413.1 304.2C409.1 300.4 404.4 294.7 401.1 290.9C397.8 287.1 391.8 283.0 393.4 281.3z" fill="#b3a3a3" stroke="#640000" stroke-width="2.4" stroke-opacity=".75"/><path d="M513.0 292.1C514.2 290.7 519.7 289.0 523.9 288.5C528.1 288.0 534.8 288.3 538.3 289.0C541.8 289.7 544.7 291.6 545.1 292.9C545.5 294.2 543.8 295.9 540.7 296.9C537.6 297.9 530.3 298.9 526.3 298.9C522.3 298.9 518.8 298.0 516.6 296.9C514.4 295.8 511.8 293.5 513.0 292.1z" fill="#b3a3a3" stroke="#640000" stroke-width="2.4" stroke-opacity=".75"/><path d="M312.0 313.1C309.4 311.8 318.9 307.5 324.1 305.8C329.3 304.1 337.3 303.0 343.3 303.0C349.3 303.0 356.1 304.1 360.2 305.8C364.3 307.5 366.9 311.4 367.9 313.1C368.9 314.8 370.8 316.1 366.2 316.2C361.6 316.3 349.0 314.0 340.0 313.5C331.0 313.0 314.6 314.4 312.0 313.1z" fill="#b3a3a3" stroke="#640000" stroke-width="2.4" stroke-opacity=".75"/><path d="M260.3 289.7C259.9 289.0 268.9 286.8 273.5 286.1C278.1 285.4 287.6 284.9 288.0 285.6C288.4 286.3 280.5 289.7 275.9 290.4C271.3 291.1 260.7 290.4 260.3 289.7z" fill="#b3a3a3" stroke="#640000" stroke-width="2.4" stroke-opacity=".75"/><path d="M209.0 298.6C209.0 298.1 211.7 296.8 213.0 296.6C214.3 296.4 216.6 296.7 216.6 297.2C216.6 297.7 214.3 299.4 213.0 299.6C211.7 299.8 209.0 299.1 209.0 298.6z" fill="#b3a3a3" stroke="#640000" stroke-width="2.4" stroke-opacity=".75"/><path d="M233.1 326.6C234.2 324.6 237.9 322.7 242.2 322.2C246.5 321.7 254.7 322.2 259.1 323.4C263.5 324.6 266.9 327.2 268.7 329.4C270.5 331.6 270.5 334.3 269.9 336.7C269.3 339.1 267.7 342.3 265.1 343.9C262.5 345.5 258.1 346.5 254.3 346.3C250.5 346.1 245.3 344.7 242.2 342.7C239.1 340.7 237.0 337.0 235.5 334.3C234.0 331.6 232.0 328.6 233.1 326.6z" fill="#a65a62" stroke="#640000" stroke-width="2.4" stroke-opacity=".75"/><g filter="url(#vb)"><path d="M353.0 363.1C354.2 361.1 362.6 356.7 367.4 355.9C372.2 355.1 380.6 356.7 381.8 358.3C383.0 359.9 378.2 363.9 374.6 365.5C371.0 367.1 363.8 368.4 360.2 368.0C356.6 367.6 351.8 365.1 353.0 363.1z" fill="#a74a4a"/><path d="M500.5 351.0C504.5 348.2 525.4 340.8 531.8 339.0C538.2 337.2 543.0 337.5 539.0 340.3C535.0 343.1 514.1 354.2 507.7 356.0C501.3 357.8 496.5 353.8 500.5 351.0z" fill="#ab2222"/><path d="M455.7 316.0C457.0 313.3 465.4 312.0 470.0 312.0C474.6 312.0 482.6 313.5 483.6 316.0C484.6 318.5 479.6 325.0 476.0 327.0C472.4 329.0 465.4 329.8 462.0 328.0C458.6 326.2 454.4 318.7 455.7 316.0z" fill="#a81616"/><path d="M301.2 381.2C302.0 379.0 317.1 381.0 319.3 383.6C321.5 386.2 317.4 397.2 314.4 396.8C311.4 396.4 300.4 383.4 301.2 381.2z" fill="#a74a4a"/><path d="M374.6 396.8C375.8 394.6 385.9 397.7 386.7 400.5C387.5 403.3 381.4 414.3 379.4 413.7C377.4 413.1 373.4 399.0 374.6 396.8z" fill="#a74a4a"/><path d="M319.3 459.4C320.5 456.2 328.9 448.2 331.3 447.4C333.7 446.6 334.9 451.4 333.7 454.6C332.5 457.8 326.5 465.9 324.1 466.7C321.7 467.5 318.1 462.6 319.3 459.4z" fill="#a74a4a"/><path d="M349.0 494.2C350.0 491.9 358.2 489.0 362.5 489.0C366.8 489.0 372.9 491.9 375.0 494.2C377.1 496.4 378.1 501.1 375.0 502.5C371.9 503.9 360.6 503.9 356.3 502.5C352.0 501.1 348.0 496.4 349.0 494.2z" fill="#bb7878"/><path d="M427.1 473.3C426.1 470.5 429.6 460.9 431.3 458.8C433.0 456.7 436.5 458.0 437.5 460.8C438.5 463.6 439.2 473.3 437.5 475.4C435.8 477.5 428.1 476.1 427.1 473.3z" fill="#a74a4a"/><path d="M291.7 527.5C291.0 524.0 295.5 513.9 297.9 510.8C300.3 507.7 304.6 506.7 306.3 508.8C308.0 510.9 309.0 519.5 308.3 523.3C307.6 527.1 304.9 531.0 302.1 531.7C299.3 532.4 292.4 531.0 291.7 527.5z" fill="#bb7878"/><path d="M383.3 556.7C380.5 552.9 388.2 538.7 391.7 533.8C395.2 528.9 401.4 523.7 404.2 527.5C407.0 531.3 411.8 551.8 408.3 556.7C404.8 561.6 386.1 560.5 383.3 556.7z" fill="#9c1818"/><path d="M412.5 556.7C409.7 553.8 413.6 543.5 414.6 537.9C415.7 532.3 416.4 525.0 418.8 523.3C421.2 521.6 426.2 524.7 429.2 527.5C432.1 530.3 436.1 535.3 436.5 540.0C436.9 544.7 435.3 552.8 431.3 555.6C427.3 558.4 415.3 559.7 412.5 556.7z" fill="#bb7878"/><path d="M469.8 521.3C469.3 518.9 471.7 510.2 472.9 508.8C474.1 507.4 476.6 510.5 477.1 512.9C477.6 515.3 477.2 521.9 476.0 523.3C474.8 524.7 470.3 523.7 469.8 521.3z" fill="#a74a4a"/><path d="M468.8 565.0C469.5 562.9 474.0 561.3 479.2 560.8C484.4 560.3 496.5 560.1 500.0 561.9C503.5 563.6 502.4 568.7 500.0 571.3C497.6 573.9 489.6 577.2 485.4 577.5C481.2 577.8 477.8 575.4 475.0 573.3C472.2 571.2 468.1 567.1 468.8 565.0z" fill="#bb7878"/><path d="M278.1 573.3C276.7 571.6 280.5 567.8 283.3 567.1C286.1 566.4 293.4 567.5 294.8 569.2C296.2 570.9 294.5 576.8 291.7 577.5C288.9 578.2 279.5 575.0 278.1 573.3z" fill="#bb7878"/><path d="M397.9 681.3C397.9 677.8 404.2 669.8 406.3 668.8C408.4 667.8 410.4 671.5 410.4 675.0C410.4 678.5 408.4 688.6 406.3 689.6C404.2 690.6 397.9 684.8 397.9 681.3z" fill="#a84646"/><path d="M336.5 735.4C336.5 734.2 340.0 730.6 341.7 730.2C343.4 729.9 346.9 732.1 346.9 733.3C346.9 734.5 343.4 737.1 341.7 737.5C340.0 737.9 336.5 736.6 336.5 735.4z" fill="#a74a4a"/><path d="M430.0 745.0C430.7 743.0 440.3 748.2 444.0 752.0C447.7 755.8 452.7 766.0 452.0 768.0C451.3 770.0 443.7 767.8 440.0 764.0C436.3 760.2 429.3 747.0 430.0 745.0z" fill="#a01c1c"/><path d="M335.4 806.3C334.3 803.9 340.4 791.7 342.7 791.7C345.0 791.7 350.2 803.9 349.0 806.3C347.8 808.7 336.4 808.7 335.4 806.3z" fill="#bb7878"/><path d="M402.1 795.8C403.5 793.0 413.9 785.4 416.7 785.4C419.5 785.4 420.2 793.0 418.8 795.8C417.4 798.6 411.1 802.1 408.3 802.1C405.5 802.1 400.7 798.6 402.1 795.8z" fill="#bd6c6c"/><path d="M390.0 775.0C389.7 772.3 396.7 768.2 400.0 768.0C403.3 767.8 409.7 771.3 410.0 774.0C410.3 776.7 405.3 783.8 402.0 784.0C398.7 784.2 390.3 777.7 390.0 775.0z" fill="#9a1c1c"/><path d="M434.4 843.8C434.0 840.0 435.4 830.6 437.5 827.1C439.6 823.6 444.8 820.1 446.9 822.9C449.0 825.7 451.2 839.3 450.0 843.8C448.8 848.3 442.2 850.0 439.6 850.0C437.0 850.0 434.8 847.6 434.4 843.8z" fill="#bb7878"/><path d="M377.1 843.8C376.8 841.0 378.3 834.7 380.2 833.3C382.1 831.9 386.9 833.0 388.5 835.4C390.1 837.8 390.6 845.5 389.6 847.9C388.6 850.3 384.4 850.7 382.3 850.0C380.2 849.3 377.5 846.6 377.1 843.8z" fill="#bb7878"/><path d="M348.3 860.0C348.9 859.2 353.6 861.3 355.0 863.3C356.4 865.2 357.2 870.9 356.7 871.7C356.1 872.5 353.1 870.2 351.7 868.3C350.3 866.3 347.8 860.8 348.3 860.0z" fill="#bb7878"/><path d="M333.0 870.0C333.5 868.3 341.7 871.8 345.0 875.0C348.3 878.2 353.5 887.3 353.0 889.0C352.5 890.7 345.3 888.2 342.0 885.0C338.7 881.8 332.5 871.7 333.0 870.0z" fill="#a82424"/></g><g filter="url(#vb2)" fill="none" stroke="#b42020" stroke-linecap="round" opacity=".3"><path d="M340 515C352 530 360 545 372 548" stroke-width="9"/><path d="M372 800C368 812 372 826 384 832" stroke-width="7"/><path d="M455 318C465 322 478 322 486 316" stroke-width="6"/></g><path d="M186 291C200 280 240 270 300 264.500C360 260 430 259 480 262.500C540 266 590 276 610 289" fill="none" stroke="#bf4545" stroke-width="3.500" opacity=".55"/><path d="M181.9 292.8C183.1 289.7 186.3 286.8 191.9 283.8C197.5 280.8 206.1 277.5 215.7 274.9C225.3 272.2 235.7 269.9 249.6 267.9C263.6 265.9 281.2 264.3 299.4 262.9C317.6 261.5 340.6 260.2 359.0 259.3C377.4 258.4 393.2 257.1 410.0 257.2C426.8 257.3 443.1 258.8 459.7 259.9C476.3 261.0 494.6 262.4 509.5 263.9C524.4 265.4 537.7 267.1 549.3 268.9C560.9 270.7 570.9 272.8 579.2 274.9C587.5 277.0 593.8 279.5 599.1 281.8C604.4 284.1 608.4 286.8 611.0 288.8C613.6 290.8 614.6 291.5 614.6 293.8C614.6 296.1 612.9 299.2 611.0 302.7C609.1 306.2 606.1 310.4 603.1 314.7C600.1 319.0 596.4 324.0 593.1 328.6C589.8 333.2 586.5 338.0 583.2 342.6C579.9 347.2 576.5 352.2 573.2 356.5C569.9 360.8 566.9 364.1 563.2 368.4C559.6 372.7 555.3 378.1 551.3 382.4C547.3 386.7 543.4 390.3 539.4 394.3C535.4 398.3 531.0 402.3 527.4 406.3C523.8 410.3 520.0 414.6 517.5 418.2C515.0 421.8 513.5 425.2 512.5 428.2C511.5 431.2 511.2 433.1 511.5 436.1C511.8 439.1 513.3 443.4 514.5 446.1C515.7 448.8 516.0 448.3 518.8 452.5C521.6 456.7 527.1 464.7 531.3 471.3C535.5 477.9 540.0 485.1 543.8 492.0C547.6 498.9 551.6 506.0 554.2 513.0C556.8 520.0 558.4 527.9 559.4 533.8C560.4 539.7 560.8 543.1 560.4 548.3C560.0 553.5 559.0 559.4 557.3 565.0C555.6 570.6 553.3 576.2 550.0 581.7C546.7 587.2 542.4 592.8 537.5 598.3C532.6 603.8 526.7 609.4 520.8 615.0C514.9 620.6 507.6 626.2 502.0 631.7C496.4 637.2 492.2 642.8 487.5 648.3C482.8 653.8 477.5 659.2 474.0 665.0C470.5 670.8 467.4 677.5 466.3 683.3C465.2 689.1 466.2 694.8 467.7 700.0C469.1 705.2 471.7 709.7 475.0 714.6C478.3 719.5 483.0 724.0 487.5 729.2C492.0 734.4 497.8 740.2 502.0 745.8C506.2 751.3 509.7 756.9 512.5 762.5C515.3 768.1 517.4 773.7 518.8 779.2C520.2 784.8 520.6 790.2 520.8 795.8C521.0 801.3 520.6 806.8 519.8 812.5C519.0 818.2 517.7 824.3 515.8 830.0C513.9 835.7 511.5 840.9 508.3 846.7C505.1 852.5 501.1 859.2 496.7 865.0C492.3 870.8 487.0 876.7 481.7 881.7C476.4 886.7 471.1 890.8 465.0 895.0C458.9 899.2 451.9 903.5 445.0 906.7C438.1 909.9 431.1 912.4 423.3 914.2C415.5 916.0 406.1 917.2 398.3 917.5C390.5 917.8 383.6 917.0 376.7 915.8C369.8 914.5 363.4 912.6 356.7 910.0C350.0 907.4 343.1 903.9 336.7 900.0C330.3 896.1 323.9 891.7 318.3 886.7C312.7 881.7 307.7 875.6 303.3 870.0C298.9 864.4 295.0 858.8 291.7 853.3C288.4 847.8 285.5 842.6 283.3 836.7C281.1 830.8 279.6 824.8 278.5 818.0C277.4 811.2 276.6 802.3 276.7 795.8C276.8 789.3 277.8 784.8 279.2 779.2C280.6 773.7 282.6 768.1 285.4 762.5C288.2 756.9 291.6 751.3 295.8 745.8C300.0 740.2 305.9 734.4 310.4 729.2C314.9 724.0 319.8 719.5 322.9 714.6C326.0 709.7 328.0 705.2 329.2 700.0C330.4 694.8 330.9 688.8 330.2 683.3C329.5 677.8 327.3 671.1 325.0 666.7C322.7 662.3 319.3 660.1 316.5 657.0C313.7 653.9 312.1 652.2 308.3 648.3C304.5 644.4 299.0 638.7 293.8 633.8C288.6 628.9 282.9 624.2 277.0 619.0C271.1 613.8 263.7 608.4 258.3 602.5C252.9 596.6 248.1 590.0 244.8 583.8C241.5 577.5 239.9 571.6 238.5 565.0C237.1 558.4 236.5 551.2 236.5 544.2C236.5 537.2 237.1 530.2 238.5 523.3C239.9 516.3 241.8 509.4 244.8 502.5C247.8 495.6 252.0 488.6 256.3 481.7C260.6 474.8 267.1 465.6 270.8 460.8C274.5 456.0 276.4 455.8 278.5 453.0C280.6 450.2 282.2 447.2 283.4 444.1C284.5 441.0 285.4 437.4 285.4 434.1C285.4 430.8 284.7 427.5 283.4 424.2C282.1 420.9 280.1 417.8 277.5 414.2C274.9 410.6 271.1 406.9 267.5 402.3C263.9 397.7 259.6 391.4 255.6 386.4C251.6 381.4 247.6 376.7 243.6 372.4C239.6 368.1 235.7 364.1 231.7 360.5C227.7 356.9 222.8 354.1 219.7 350.5C216.5 346.9 215.1 342.9 212.8 338.6C210.5 334.3 208.6 328.9 205.8 324.6C203.0 320.3 199.3 316.4 195.8 312.7C192.3 309.0 187.2 306.0 184.9 302.7C182.6 299.4 180.7 295.9 181.9 292.8z" fill="none" stroke="#840000" stroke-width="5" opacity=".5"/></g></svg>
<!-- grasshopper canvas -->
<div class="a" style="left:831px;top:197px;width:1079px;height:827px;background:#d5d1c9"></div>
<svg class="a" style="left:831px;top:197px" width="1079" height="827" viewBox="831 197 1079 827" font-family='"Liberation Sans",sans-serif'><defs>
<linearGradient id="gD" x1="0" y1="0" x2="0" y2="1"><stop offset="0" stop-color="#a9a9b9"/><stop offset="1" stop-color="#8d8d9c"/></linearGradient>
<linearGradient id="gL" x1="0" y1="0" x2="0" y2="1"><stop offset="0" stop-color="#ececee"/><stop offset="1" stop-color="#c7c7ca"/></linearGradient>
<linearGradient id="gGl" x1="0" y1="0" x2="0" y2="1"><stop offset="0" stop-color="#fff" stop-opacity=".8"/><stop offset="1" stop-color="#fff" stop-opacity=".27"/></linearGradient>
<linearGradient id="gGlL" x1="0" y1="0" x2="0" y2="1"><stop offset="0" stop-color="#fff" stop-opacity=".8"/><stop offset="1" stop-color="#fff" stop-opacity=".0"/></linearGradient>
<linearGradient id="gTr" x1="0" y1="0" x2="0" y2="1"><stop offset="0" stop-color="#f4f4f4"/><stop offset=".5" stop-color="#dedede"/><stop offset="1" stop-color="#cfcfd1"/></linearGradient>
<linearGradient id="gTag" x1="0" y1="0" x2="0" y2="1"><stop offset="0" stop-color="#ffffff"/><stop offset=".55" stop-color="#f1f1f1"/><stop offset="1" stop-color="#d2d2d2"/></linearGradient>
<linearGradient id="gBtn" x1="0" y1="0" x2="0" y2="1"><stop offset="0" stop-color="#fdfdfd"/><stop offset="1" stop-color="#cfcfcf"/></linearGradient>
<linearGradient id="gGM" x1="0" y1="0" x2="0" y2="1"><stop offset="0" stop-color="#ececf2"/><stop offset=".12" stop-color="#d0d0d8"/><stop offset=".13" stop-color="#a6a6b4"/><stop offset="1" stop-color="#8c8c9a"/></linearGradient>
<linearGradient id="gGMi" x1="0" y1="0" x2="0" y2="1"><stop offset="0" stop-color="#f4f4f8"/><stop offset=".16" stop-color="#e8e8ee"/><stop offset=".18" stop-color="#d9d9de"/><stop offset="1" stop-color="#d0d0d3"/></linearGradient>
<radialGradient id="gRed" cx=".38" cy=".3" r=".75"><stop offset="0" stop-color="#ffb0a8"/><stop offset=".25" stop-color="#f02020"/><stop offset="1" stop-color="#9c0000"/></radialGradient>
<radialGradient id="gCur" cx=".5" cy=".5" r=".5"><stop offset="0" stop-color="#e9e9e9"/><stop offset=".7" stop-color="#d6d6d6"/><stop offset="1" stop-color="#bdbdbd"/></radialGradient>
<linearGradient id="gHex" x1="0" y1="0" x2="0" y2="1"><stop offset="0" stop-color="#6a6a6a"/><stop offset=".45" stop-color="#1e1e1e"/><stop offset="1" stop-color="#000"/></linearGradient>
</defs><path d="M949.6 197V1024M1099.6 197V1024M1249.6 197V1024M1399.6 197V1024M1549.6 197V1024M1699.6 197V1024M1849.6 197V1024M831 245.3H1910M831 295.3H1910M831 345.3H1910M831 395.3H1910M831 445.3H1910M831 495.3H1910M831 545.3H1910M831 595.3H1910M831 645.3H1910M831 695.3H1910M831 745.3H1910M831 795.3H1910M831 845.3H1910M831 895.3H1910M831 945.3H1910M831 995.3H1910" stroke="#80857c" stroke-opacity=".36" stroke-width="1" fill="none"/><path d="M916.3 276.0L951.7 276.0" fill="none" stroke="#4b4b4b" stroke-width="3" stroke-linecap="round"/><path d="M1012.5 276.0L1045.0 276.0" fill="none" stroke="#4b4b4b" stroke-width="3" stroke-linecap="round"/><path d="M966.7 186.6L968.2 189.6L969.7 192.6L971.2 195.6L972.6 198.5L974.1 201.4L975.6 204.3L977.0 207.2L978.5 210.0L980.0 212.8L981.6 215.6L983.1 218.3L984.7 221.0L986.3 223.6L988.0 226.1L989.7 228.6L991.4 231.0L993.2 233.3L995.1 235.6L997.0 237.7L999.0 239.8L1001.0 241.8L1003.1 243.7L1005.3 245.5L1007.6 247.2L1010.0 248.8L1012.5 250.3L1015.1 251.6L1017.7 252.9L1020.5 254.0L1023.4 254.9L1026.3 255.8L1029.4 256.4L1032.6 257.0L1036.0 257.4L1039.4 257.6L1043.0 257.7M969.3 185.4L970.7 188.4L972.2 191.4L973.7 194.3L975.2 197.3L976.6 200.2L978.1 203.1L979.5 205.9L981.0 208.7L982.5 211.5L984.0 214.2L985.5 216.9L987.1 219.5L988.7 222.0L990.3 224.5L991.9 226.9L993.6 229.3L995.4 231.6L997.2 233.7L999.0 235.8L1001.0 237.9L1002.9 239.8L1005.0 241.6L1007.1 243.3L1009.3 244.9L1011.5 246.4L1013.9 247.8L1016.3 249.1L1018.8 250.3L1021.4 251.3L1024.2 252.3L1027.0 253.0L1030.0 253.7L1033.0 254.2L1036.2 254.6L1039.5 254.8L1043.0 254.9" fill="none" stroke="#434343" stroke-width="1.35"/><path d="M1110.5 277.4L1142.5 277.4M1110.5 274.6L1142.5 274.6" fill="none" stroke="#434343" stroke-width="1.35"/><path d="M1246 276C1272 276 1280.5 255 1280.5 190" fill="none" stroke="#555" stroke-width="4.6" stroke-dasharray="6.5 7.5" stroke-linecap="round"/><path d="M1246 276C1272 276 1280.5 255 1280.5 190" fill="none" stroke="#d5d1c9" stroke-width="1.7" stroke-dasharray="6.5 7.5" stroke-linecap="round"/><path d="M1372.5 362.5C1488.5 362.5 1364.5 202.5 1480.5 202.5" fill="none" stroke="#4b4b4b" stroke-width="3" stroke-linecap="round"/><path d="M1372.5 362.5C1476.5 362.5 1376.5 222.5 1480.5 222.5" fill="none" stroke="#4b4b4b" stroke-width="3" stroke-linecap="round"/><path d="M1565.5 224.7L1611.3 224.7M1565.5 221.9L1611.3 221.9" fill="none" stroke="#434343" stroke-width="1.35"/><path d="M1682.5 223.3C1703.7 223.3 1706.3 222.6 1727.5 222.6" fill="none" stroke="#4b4b4b" stroke-width="3" stroke-linecap="round"/><path d="M1796.7 243.5L1912.0 243.5" fill="none" stroke="#4b4b4b" stroke-width="3" stroke-linecap="round"/><path d="M1678.3 315.3C1723.3 315.3 1682.5 243.5 1727.5 243.5" fill="none" stroke="#4b4b4b" stroke-width="3" stroke-linecap="round"/><path d="M1897.8 323.3C1903 323.3 1906 321.5 1912 319.5" fill="none" stroke="#4b4b4b" stroke-width="3" stroke-linecap="round"/><path d="M1447.5 420.0L1501.3 420.0" fill="none" stroke="#4b4b4b" stroke-width="3" stroke-linecap="round"/><path d="M1570.8 421.4L1581.5 421.4L1592.1 421.5L1602.5 421.6L1612.8 421.6L1623.0 421.7L1633.1 421.8L1643.1 421.8L1653.0 421.9L1662.9 422.0L1672.6 422.1L1682.2 422.2L1691.8 422.3L1701.3 422.4L1710.7 422.5L1720.1 422.7L1729.4 422.8L1738.6 422.9L1747.8 423.0L1757.0 423.2L1766.1 423.3L1775.2 423.4L1784.3 423.5L1793.4 423.7L1802.5 423.8L1811.5 423.9L1820.5 424.1L1829.6 424.2L1838.6 424.3L1847.7 424.5L1856.8 424.6L1865.9 424.8L1875.0 424.9L1884.2 425.0L1893.4 425.1L1902.7 425.3L1912.0 425.4M1570.8 418.6L1581.5 418.6L1592.1 418.7L1602.5 418.8L1612.9 418.8L1623.1 418.9L1633.2 419.0L1643.2 419.0L1653.1 419.1L1662.9 419.2L1672.6 419.3L1682.2 419.4L1691.8 419.5L1701.3 419.6L1710.7 419.7L1720.1 419.9L1729.4 420.0L1738.7 420.1L1747.9 420.2L1757.0 420.4L1766.2 420.5L1775.3 420.6L1784.4 420.7L1793.4 420.9L1802.5 421.0L1811.5 421.1L1820.6 421.3L1829.6 421.4L1838.7 421.5L1847.7 421.7L1856.8 421.8L1865.9 422.0L1875.1 422.1L1884.2 422.2L1893.5 422.3L1902.7 422.5L1912.0 422.6" fill="none" stroke="#434343" stroke-width="1.35"/><path d="M1829.5 474.7L1912.0 474.7" fill="none" stroke="#4b4b4b" stroke-width="3" stroke-linecap="round"/><path d="M1035.3 525.3L1094.7 525.0" fill="none" stroke="#4b4b4b" stroke-width="3" stroke-linecap="round"/><path d="M1037.5 545.3L1094.7 545.0" fill="none" stroke="#4b4b4b" stroke-width="3" stroke-linecap="round"/><path d="M1159.5 526.4L1413.3 526.4M1159.5 523.6L1413.3 523.6" fill="none" stroke="#434343" stroke-width="1.35"/><path d="M1159.4 526.4L1169.1 526.8L1177.2 528.0L1184.1 529.8L1189.7 532.3L1194.1 535.4L1197.5 539.0L1200.0 543.1L1201.6 547.8L1202.5 552.9L1202.7 558.4L1202.3 564.4L1201.3 570.8L1199.8 577.4L1197.9 584.3L1195.6 591.3L1193.2 598.6L1190.5 605.9L1187.8 613.3L1185.1 620.7L1182.4 628.0L1179.9 635.3L1177.7 642.4L1175.7 649.4L1174.2 656.2L1173.2 662.7L1172.7 669.0L1172.9 674.9L1173.9 680.5L1175.7 685.6L1178.5 690.2L1182.3 694.2L1187.2 697.6L1193.2 700.3L1200.4 702.3L1208.9 703.5L1218.6 703.9M1159.6 523.6L1169.3 524.0L1177.8 525.2L1185.0 527.2L1191.0 529.9L1195.9 533.3L1199.7 537.3L1202.5 541.9L1204.3 547.0L1205.3 552.6L1205.5 558.5L1205.0 564.8L1204.0 571.3L1202.5 578.1L1200.5 585.1L1198.3 592.2L1195.8 599.5L1193.1 606.8L1190.4 614.2L1187.7 621.6L1185.0 628.9L1182.6 636.2L1180.3 643.2L1178.4 650.1L1176.9 656.7L1175.9 663.1L1175.5 669.1L1175.7 674.6L1176.6 679.7L1178.2 684.4L1180.7 688.5L1184.1 692.1L1188.5 695.2L1194.1 697.7L1201.0 699.5L1209.1 700.7L1218.8 701.1" fill="none" stroke="#434343" stroke-width="1.35"/><path d="M1159.4 526.4L1171.1 526.8L1181.6 528.1L1191.0 530.2L1199.4 533.1L1206.9 536.6L1213.5 540.8L1219.3 545.5L1224.4 550.8L1228.9 556.7L1232.8 562.9L1236.2 569.6L1239.1 576.7L1241.6 584.1L1243.8 591.7L1245.8 599.6L1247.5 607.6L1249.2 615.8L1250.7 624.0L1252.3 632.2L1253.9 640.4L1255.7 648.5L1257.7 656.5L1259.9 664.3L1262.5 671.8L1265.5 679.0L1269.0 685.9L1273.0 692.4L1277.6 698.5L1283.0 704.0L1289.1 709.0L1296.0 713.4L1303.7 717.0L1312.4 720.0L1322.1 722.1L1332.8 723.4L1344.6 723.9M1159.6 523.6L1171.4 524.1L1182.1 525.4L1191.8 527.5L1200.5 530.5L1208.2 534.1L1215.1 538.5L1221.2 543.5L1226.6 549.0L1231.2 555.1L1235.2 561.6L1238.7 568.5L1241.7 575.7L1244.3 583.2L1246.5 591.0L1248.5 599.0L1250.3 607.1L1251.9 615.3L1253.5 623.5L1255.0 631.7L1256.7 639.9L1258.4 647.9L1260.4 655.8L1262.6 663.4L1265.1 670.8L1268.0 677.9L1271.4 684.6L1275.3 690.8L1279.8 696.7L1284.9 702.0L1290.7 706.7L1297.3 710.9L1304.8 714.4L1313.2 717.3L1322.6 719.4L1333.1 720.7L1344.8 721.1" fill="none" stroke="#434343" stroke-width="1.35"/><path d="M1159.5 526.4L1176.7 526.8L1193.1 528.1L1208.8 530.1L1223.8 532.8L1238.2 536.2L1252.0 540.2L1265.2 544.8L1277.9 550.0L1290.2 555.6L1302.1 561.6L1313.6 568.1L1324.8 574.8L1335.8 581.9L1346.5 589.2L1357.1 596.7L1367.5 604.4L1377.8 612.1L1388.1 619.9L1398.4 627.7L1408.8 635.5L1419.2 643.2L1429.8 650.7L1440.6 658.0L1451.6 665.2L1462.9 672.0L1474.5 678.5L1486.5 684.5L1498.9 690.2L1511.7 695.4L1525.1 700.0L1539.0 704.1L1553.5 707.5L1568.7 710.3L1584.5 712.3L1601.1 713.6L1618.4 714.0M1159.5 523.6L1176.8 524.0L1193.4 525.3L1209.2 527.3L1224.4 530.1L1238.9 533.5L1252.8 537.6L1266.2 542.2L1279.0 547.4L1291.4 553.1L1303.4 559.1L1315.0 565.6L1326.3 572.4L1337.3 579.6L1348.1 586.9L1358.7 594.4L1369.1 602.1L1379.5 609.9L1389.8 617.7L1400.1 625.5L1410.4 633.2L1420.8 640.9L1431.4 648.4L1442.1 655.7L1453.1 662.8L1464.3 669.5L1475.8 676.0L1487.7 682.0L1500.0 687.6L1512.7 692.8L1525.9 697.4L1539.7 701.4L1554.1 704.8L1569.1 707.5L1584.8 709.5L1601.2 710.8L1618.4 711.2" fill="none" stroke="#434343" stroke-width="1.35"/><path d="M1476.8 526.4L1481.4 526.2L1485.5 525.6L1488.9 524.6L1491.8 523.3L1494.2 521.6L1496.1 519.5L1497.4 517.2L1498.2 514.6L1498.5 511.8L1498.5 508.9L1498.2 505.8L1497.6 502.6L1496.7 499.4L1495.6 496.0L1494.4 492.5L1493.1 489.1L1491.7 485.5L1490.3 482.0L1488.9 478.4L1487.5 474.9L1486.2 471.5L1485.0 468.1L1484.0 464.9L1483.2 461.7L1482.6 458.7L1482.3 455.9L1482.3 453.4L1482.6 451.0L1483.2 448.9L1484.2 447.1L1485.7 445.5L1487.6 444.1L1490.0 443.0L1493.1 442.1L1496.9 441.6L1501.4 441.4M1476.6 523.6L1481.1 523.4L1484.9 522.9L1488.0 522.0L1490.4 520.9L1492.3 519.5L1493.8 517.9L1494.8 516.1L1495.4 514.0L1495.7 511.6L1495.7 509.1L1495.4 506.3L1494.8 503.3L1494.0 500.1L1493.0 496.9L1491.8 493.5L1490.5 490.1L1489.1 486.6L1487.7 483.0L1486.3 479.5L1484.9 475.9L1483.6 472.5L1482.4 469.0L1481.3 465.6L1480.4 462.4L1479.8 459.2L1479.5 456.1L1479.5 453.2L1479.8 450.4L1480.6 447.8L1481.9 445.5L1483.8 443.4L1486.2 441.7L1489.1 440.4L1492.5 439.4L1496.6 438.8L1501.2 438.6" fill="none" stroke="#434343" stroke-width="1.35"/><path d="M1751.0 563.5L1912.0 563.5" fill="none" stroke="#4b4b4b" stroke-width="3" stroke-linecap="round"/><path d="M1282.5 722.5L1486.7 722.5" fill="none" stroke="#4b4b4b" stroke-width="3" stroke-linecap="round"/><path d="M1424.5 742.5L1486.7 742.5" fill="none" stroke="#4b4b4b" stroke-width="3" stroke-linecap="round"/><path d="M1548.0 732.4L1618.4 732.4" fill="none" stroke="#4b4b4b" stroke-width="3" stroke-linecap="round"/><path d="M1548.5 789.0C1584.5 789.0 1582.4 752.5 1618.4 752.5" fill="none" stroke="#4b4b4b" stroke-width="3" stroke-linecap="round"/><path d="M1683.5 718.9L1717.2 718.9M1683.5 716.1L1717.2 716.1" fill="none" stroke="#434343" stroke-width="1.35"/><path d="M1875.0 718.9L1912.0 718.9M1875.0 716.1L1912.0 716.1" fill="none" stroke="#434343" stroke-width="1.35"/><path d="M1876.7 718.9L1878.1 718.9L1879.4 718.9L1880.7 718.8L1882.0 718.7L1883.3 718.6L1884.5 718.5L1885.7 718.4L1886.9 718.2L1888.1 718.0L1889.2 717.8L1890.3 717.6L1891.4 717.4L1892.5 717.1L1893.6 716.8L1894.6 716.5L1895.6 716.2L1896.6 715.8L1897.6 715.4L1898.6 715.0L1899.5 714.6L1900.5 714.2L1901.4 713.7L1902.3 713.2L1903.2 712.7L1904.1 712.2L1904.9 711.6L1905.8 711.1L1906.6 710.5L1907.4 709.9L1908.3 709.2L1909.1 708.6L1909.9 707.9L1910.7 707.2L1911.4 706.5L1912.2 705.7L1913.0 705.0M1876.7 716.1L1878.0 716.1L1879.3 716.1L1880.6 716.0L1881.8 715.9L1883.0 715.8L1884.2 715.7L1885.4 715.6L1886.5 715.4L1887.6 715.3L1888.7 715.1L1889.7 714.9L1890.8 714.6L1891.8 714.4L1892.8 714.1L1893.8 713.8L1894.7 713.5L1895.7 713.2L1896.6 712.8L1897.5 712.5L1898.4 712.1L1899.2 711.6L1900.1 711.2L1900.9 710.8L1901.8 710.3L1902.6 709.8L1903.4 709.3L1904.2 708.8L1905.0 708.2L1905.8 707.6L1906.5 707.0L1907.3 706.4L1908.0 705.8L1908.8 705.1L1909.5 704.4L1910.3 703.7L1911.0 703.0" fill="none" stroke="#434343" stroke-width="1.35"/><path d="M1876.7 718.9L1878.1 718.9L1879.4 718.9L1880.7 718.9L1882.0 718.8L1883.2 718.8L1884.5 718.8L1885.7 718.7L1886.9 718.6L1888.1 718.6L1889.2 718.5L1890.4 718.4L1891.5 718.2L1892.6 718.1L1893.6 718.0L1894.7 717.8L1895.7 717.6L1896.8 717.4L1897.8 717.2L1898.7 717.0L1899.7 716.8L1900.7 716.5L1901.6 716.2L1902.5 715.9L1903.4 715.6L1904.3 715.3L1905.1 714.9L1906.0 714.5L1906.8 714.1L1907.6 713.7L1908.4 713.3L1909.2 712.8L1910.0 712.3L1910.8 711.8L1911.5 711.2L1912.2 710.7L1912.9 710.1M1876.7 716.1L1878.0 716.1L1879.4 716.1L1880.6 716.1L1881.9 716.0L1883.1 716.0L1884.4 716.0L1885.6 715.9L1886.7 715.8L1887.9 715.8L1889.0 715.7L1890.1 715.6L1891.2 715.5L1892.2 715.3L1893.3 715.2L1894.3 715.0L1895.3 714.9L1896.2 714.7L1897.2 714.5L1898.1 714.3L1899.0 714.1L1899.9 713.8L1900.8 713.6L1901.6 713.3L1902.4 713.0L1903.2 712.7L1904.0 712.4L1904.8 712.0L1905.6 711.6L1906.3 711.3L1907.0 710.9L1907.7 710.4L1908.4 710.0L1909.1 709.5L1909.8 709.0L1910.4 708.5L1911.1 707.9" fill="none" stroke="#434343" stroke-width="1.35"/><path d="M1119.3 779.5L1487.5 779.6" fill="none" stroke="#4b4b4b" stroke-width="3" stroke-linecap="round"/><path d="M1118.3 799.6L1487.5 799.2" fill="none" stroke="#4b4b4b" stroke-width="3" stroke-linecap="round"/><path d="M1119.3 779.5C1171.3 779.5 1162.8 856.6 1214.8 856.6" fill="none" stroke="#4b4b4b" stroke-width="3" stroke-linecap="round"/><path d="M1118.3 799.6C1168.3 799.6 1164.8 856.6 1214.8 856.6" fill="none" stroke="#4b4b4b" stroke-width="3" stroke-linecap="round"/><path d="M1118.3 799.6C1448.3 799.6 1450.4 904.0 1780.4 904.0" fill="none" stroke="#8d9bb5" stroke-opacity=".7" stroke-width="0.9"/><path d="M1374.4 857.7L1407.4 857.7M1374.4 854.9L1407.4 854.9" fill="none" stroke="#434343" stroke-width="1.35"/><path d="M1457.5 857.7L1540.6 857.7M1457.5 854.9L1540.6 854.9" fill="none" stroke="#434343" stroke-width="1.35"/><path d="M1678.4 846.0C1774.4 846.0 1684.4 1004.0 1780.4 1004.0" fill="none" stroke="#4b4b4b" stroke-width="3" stroke-linecap="round"/><circle cx="865.8" cy="202.5" r="3.9" fill="#fff" stroke="#1c1c1c" stroke-width="1.5"/><circle cx="916.3" cy="276.0" r="3.9" fill="#fff" stroke="#1c1c1c" stroke-width="1.5"/><circle cx="951.7" cy="276.0" r="3.9" fill="#fff" stroke="#1c1c1c" stroke-width="1.5"/><circle cx="1012.5" cy="276.0" r="3.9" fill="#fff" stroke="#1c1c1c" stroke-width="1.5"/><circle cx="1045.0" cy="256.3" r="3.9" fill="#fff" stroke="#1c1c1c" stroke-width="1.5"/><circle cx="1045.0" cy="276.0" r="3.9" fill="#fff" stroke="#1c1c1c" stroke-width="1.5"/><circle cx="1045.0" cy="296.0" r="3.9" fill="#fff" stroke="#1c1c1c" stroke-width="1.5"/><circle cx="1110.5" cy="276.0" r="3.9" fill="#fff" stroke="#1c1c1c" stroke-width="1.5"/><circle cx="1142.5" cy="275.8" r="3.9" fill="#fff" stroke="#1c1c1c" stroke-width="1.5"/><circle cx="1243.3" cy="275.8" r="3.9" fill="#fff" stroke="#1c1c1c" stroke-width="1.5"/><circle cx="1142.5" cy="295.8" r="3.9" fill="#fff" stroke="#1c1c1c" stroke-width="1.5"/><circle cx="1243.3" cy="295.8" r="3.9" fill="#fff" stroke="#1c1c1c" stroke-width="1.5"/><circle cx="1372.5" cy="362.5" r="3.9" fill="#fff" stroke="#1c1c1c" stroke-width="1.5"/><circle cx="1480.5" cy="202.5" r="3.9" fill="#fff" stroke="#1c1c1c" stroke-width="1.5"/><circle cx="1480.5" cy="222.5" r="3.9" fill="#fff" stroke="#1c1c1c" stroke-width="1.5"/><circle cx="1480.5" cy="243.0" r="3.9" fill="#fff" stroke="#1c1c1c" stroke-width="1.5"/><circle cx="1480.5" cy="263.0" r="3.9" fill="#fff" stroke="#1c1c1c" stroke-width="1.5"/><circle cx="1565.5" cy="223.3" r="3.9" fill="#fff" stroke="#1c1c1c" stroke-width="1.5"/><circle cx="1611.3" cy="223.3" r="3.9" fill="#fff" stroke="#1c1c1c" stroke-width="1.5"/><circle cx="1682.5" cy="223.3" r="3.9" fill="#fff" stroke="#1c1c1c" stroke-width="1.5"/><circle cx="1727.5" cy="222.5" r="3.9" fill="#fff" stroke="#1c1c1c" stroke-width="1.5"/><circle cx="1727.5" cy="243.5" r="3.9" fill="#fff" stroke="#1c1c1c" stroke-width="1.5"/><circle cx="1727.5" cy="263.0" r="3.9" fill="#fff" stroke="#1c1c1c" stroke-width="1.5"/><circle cx="1796.7" cy="243.5" r="3.9" fill="#fff" stroke="#1c1c1c" stroke-width="1.5"/><circle cx="1678.3" cy="315.3" r="3.9" fill="#fff" stroke="#1c1c1c" stroke-width="1.5"/><circle cx="1895.8" cy="323.3" r="3.9" fill="#fff" stroke="#1c1c1c" stroke-width="1.5"/><circle cx="1379.5" cy="400.5" r="3.9" fill="#fff" stroke="#1c1c1c" stroke-width="1.5"/><circle cx="1379.5" cy="420.0" r="3.9" fill="#fff" stroke="#1c1c1c" stroke-width="1.5"/><circle cx="1379.5" cy="440.0" r="3.9" fill="#fff" stroke="#1c1c1c" stroke-width="1.5"/><circle cx="1447.5" cy="420.0" r="3.9" fill="#fff" stroke="#1c1c1c" stroke-width="1.5"/><circle cx="1501.3" cy="420.0" r="3.9" fill="#fff" stroke="#1c1c1c" stroke-width="1.5"/><circle cx="1568.7" cy="420.0" r="3.9" fill="#fff" stroke="#1c1c1c" stroke-width="1.5"/><circle cx="1501.3" cy="440.0" r="3.9" fill="#fff" stroke="#1c1c1c" stroke-width="1.5"/><circle cx="1568.7" cy="440.0" r="3.9" fill="#fff" stroke="#1c1c1c" stroke-width="1.5"/><circle cx="1759.5" cy="474.7" r="3.9" fill="#fff" stroke="#1c1c1c" stroke-width="1.5"/><circle cx="1829.5" cy="474.7" r="3.9" fill="#fff" stroke="#1c1c1c" stroke-width="1.5"/><circle cx="1035.3" cy="525.3" r="3.9" fill="#fff" stroke="#1c1c1c" stroke-width="1.5"/><circle cx="1037.5" cy="545.3" r="3.9" fill="#fff" stroke="#1c1c1c" stroke-width="1.5"/><circle cx="1094.7" cy="505.0" r="3.9" fill="#fff" stroke="#1c1c1c" stroke-width="1.5"/><circle cx="1094.7" cy="525.0" r="3.9" fill="#fff" stroke="#1c1c1c" stroke-width="1.5"/><circle cx="1094.7" cy="545.0" r="3.9" fill="#fff" stroke="#1c1c1c" stroke-width="1.5"/><circle cx="1159.5" cy="525.0" r="3.9" fill="#fff" stroke="#1c1c1c" stroke-width="1.5"/><circle cx="1413.3" cy="525.0" r="3.9" fill="#fff" stroke="#1c1c1c" stroke-width="1.5"/><circle cx="1476.7" cy="525.0" r="3.9" fill="#fff" stroke="#1c1c1c" stroke-width="1.5"/><circle cx="1751.0" cy="563.5" r="3.9" fill="#fff" stroke="#1c1c1c" stroke-width="1.5"/><circle cx="1218.7" cy="702.5" r="3.9" fill="#fff" stroke="#1c1c1c" stroke-width="1.5"/><circle cx="1218.7" cy="722.5" r="3.9" fill="#fff" stroke="#1c1c1c" stroke-width="1.5"/><circle cx="1218.7" cy="742.5" r="3.9" fill="#fff" stroke="#1c1c1c" stroke-width="1.5"/><circle cx="1282.5" cy="722.5" r="3.9" fill="#fff" stroke="#1c1c1c" stroke-width="1.5"/><circle cx="1344.7" cy="722.5" r="3.9" fill="#fff" stroke="#1c1c1c" stroke-width="1.5"/><circle cx="1344.7" cy="742.5" r="3.9" fill="#fff" stroke="#1c1c1c" stroke-width="1.5"/><circle cx="1344.7" cy="762.5" r="3.9" fill="#fff" stroke="#1c1c1c" stroke-width="1.5"/><circle cx="1424.5" cy="742.5" r="3.9" fill="#fff" stroke="#1c1c1c" stroke-width="1.5"/><circle cx="1486.7" cy="722.5" r="3.9" fill="#fff" stroke="#1c1c1c" stroke-width="1.5"/><circle cx="1486.7" cy="742.5" r="3.9" fill="#fff" stroke="#1c1c1c" stroke-width="1.5"/><circle cx="1548.0" cy="732.4" r="3.9" fill="#fff" stroke="#1c1c1c" stroke-width="1.5"/><circle cx="1487.5" cy="779.6" r="3.9" fill="#fff" stroke="#1c1c1c" stroke-width="1.5"/><circle cx="1487.5" cy="799.2" r="3.9" fill="#fff" stroke="#1c1c1c" stroke-width="1.5"/><circle cx="1548.5" cy="789.0" r="3.9" fill="#fff" stroke="#1c1c1c" stroke-width="1.5"/><circle cx="1618.4" cy="712.6" r="3.9" fill="#fff" stroke="#1c1c1c" stroke-width="1.5"/><circle cx="1618.4" cy="732.4" r="3.9" fill="#fff" stroke="#1c1c1c" stroke-width="1.5"/><circle cx="1618.4" cy="752.5" r="3.9" fill="#fff" stroke="#1c1c1c" stroke-width="1.5"/><circle cx="1683.5" cy="717.5" r="3.9" fill="#fff" stroke="#1c1c1c" stroke-width="1.5"/><circle cx="1683.5" cy="747.6" r="3.9" fill="#fff" stroke="#1c1c1c" stroke-width="1.5"/><circle cx="1717.2" cy="717.5" r="3.9" fill="#fff" stroke="#1c1c1c" stroke-width="1.5"/><circle cx="1875.0" cy="717.5" r="3.9" fill="#fff" stroke="#1c1c1c" stroke-width="1.5"/><circle cx="1119.3" cy="779.5" r="3.9" fill="#fff" stroke="#1c1c1c" stroke-width="1.5"/><circle cx="1118.3" cy="799.6" r="3.9" fill="#fff" stroke="#1c1c1c" stroke-width="1.5"/><circle cx="1214.8" cy="856.6" r="3.9" fill="#fff" stroke="#1c1c1c" stroke-width="1.5"/><circle cx="1374.4" cy="856.3" r="3.9" fill="#fff" stroke="#1c1c1c" stroke-width="1.5"/><circle cx="1407.4" cy="856.3" r="3.9" fill="#fff" stroke="#1c1c1c" stroke-width="1.5"/><circle cx="1457.5" cy="856.3" r="3.9" fill="#fff" stroke="#1c1c1c" stroke-width="1.5"/><circle cx="1540.6" cy="836.2" r="3.9" fill="#fff" stroke="#1c1c1c" stroke-width="1.5"/><circle cx="1540.6" cy="856.3" r="3.9" fill="#fff" stroke="#1c1c1c" stroke-width="1.5"/><circle cx="1678.4" cy="846.0" r="3.9" fill="#fff" stroke="#1c1c1c" stroke-width="1.5"/><circle cx="1780.4" cy="883.9" r="3.9" fill="#fff" stroke="#1c1c1c" stroke-width="1.5"/><circle cx="1780.4" cy="903.9" r="3.9" fill="#fff" stroke="#1c1c1c" stroke-width="1.5"/><circle cx="1780.4" cy="924.0" r="3.9" fill="#fff" stroke="#1c1c1c" stroke-width="1.5"/><circle cx="1780.4" cy="944.0" r="3.9" fill="#fff" stroke="#1c1c1c" stroke-width="1.5"/><circle cx="1780.4" cy="964.0" r="3.9" fill="#fff" stroke="#1c1c1c" stroke-width="1.5"/><circle cx="1780.4" cy="984.0" r="3.9" fill="#fff" stroke="#1c1c1c" stroke-width="1.5"/><circle cx="1780.4" cy="1004.1" r="3.9" fill="#fff" stroke="#1c1c1c" stroke-width="1.5"/><rect x="865.8" y="185.0" width="68.0" height="29.7" rx="3.5" fill="url(#gD)" stroke="#2d2d2d" stroke-width="1.2"/><path d="M866.6 194.0V189.1a3.5 3.5 0 0 1 3.5 -3.5H929.5a3.5 3.5 0 0 1 3.5 3.5V194.0z" fill="url(#gGl)"/><text x="873.30" y="205.26" font-size="11.5" textLength="8.20" lengthAdjust="spacingAndGlyphs" fill="#16122e">Pl</text><rect x="1025.0" y="185.0" width="101.7" height="19.7" rx="3.5" fill="url(#gD)" stroke="#2d2d2d" stroke-width="1.2"/><path d="M1025.8 193.9V189.1a3.5 3.5 0 0 1 3.5 -3.5H1122.4a3.5 3.5 0 0 1 3.5 3.5V193.9z" fill="url(#gGl)"/><rect x="1316.3" y="185.0" width="64.7" height="19.0" rx="3.5" fill="url(#gD)" stroke="#2d2d2d" stroke-width="1.2"/><path d="M1317.1 193.6V189.1a3.5 3.5 0 0 1 3.5 -3.5H1376.7a3.5 3.5 0 0 1 3.5 3.5V193.6z" fill="url(#gGl)"/><rect x="800.0" y="266.3" width="116.3" height="20.0" rx="3.2" fill="url(#gTr)" stroke="#2b2b2b" stroke-width="1.2"/><path d="M811.0 274.8H905.3M811.0 274.8v-3.6M820.4 274.8v-2.6M829.9 274.8v-2.6M839.3 274.8v-2.6M848.7 274.8v-2.6M858.1 274.8v-3.6M867.6 274.8v-2.6M877.0 274.8v-2.6M886.4 274.8v-2.6M895.9 274.8v-2.6M905.3 274.8v-3.6" stroke="#b4b4b8" stroke-width="1" fill="none"/><rect x="951.7" y="262.5" width="60.8" height="28.0" rx="3.5" fill="url(#gD)" stroke="#2d2d2d" stroke-width="1.2"/><path d="M952.5 271.5V266.6a3.5 3.5 0 0 1 3.5 -3.5H1008.2a3.5 3.5 0 0 1 3.5 3.5V271.5z" fill="url(#gGl)"/><text x="958.20" y="280.73" font-size="12" fill="#16122e">x</text><g transform="translate(979.6 275.8) scale(1)"><rect x="-8.6" y="-8.4" width="17.2" height="16.8" rx="2.5" fill="url(#gBtn)" stroke="#8a8a8a" stroke-width="1"/><text x="0.3" y="5" font-size="16" font-family='"Liberation Serif",serif' font-style="italic" font-weight="bold" text-anchor="middle" fill="#111" textLength="13" lengthAdjust="spacingAndGlyphs">-x</text></g><text x="996.80" y="280.13" font-size="12" fill="#16122e">y</text><rect x="1045.0" y="244.7" width="65.5" height="64.0" rx="3.5" fill="url(#gD)" stroke="#2d2d2d" stroke-width="1.2"/><path d="M1045.8 253.7V248.8a3.5 3.5 0 0 1 3.5 -3.5H1106.2a3.5 3.5 0 0 1 3.5 3.5V253.7z" fill="url(#gGl)"/><text x="1052.00" y="259.76" font-size="11.5" fill="#16122e">C</text><text x="1052.00" y="279.56" font-size="11.5" fill="#16122e">D</text><text x="1052.00" y="299.56" font-size="11.5" fill="#16122e">P</text><g transform="translate(1076.5 275.6) scale(0.92)"><path d="M-10.5 -5.5L3.5 -10.5M-10.5 7.5L3.5 12" stroke="#a01818" stroke-width="1.1" fill="none"/><path d="M3.5 -10.5C9 -4 9 5 3.5 12" stroke="#111" stroke-width="2" fill="none"/><path d="M-10.5 -5.5C-6 -2 -6 4 -10.5 7.5" stroke="#8a1010" stroke-width="1.6" fill="none"/><path d="M-7 1h7v-3.2l5.5 3.7-5.5 3.7v-3.2h-7z" fill="#8a1010"/><g fill="#fff" stroke="#222" stroke-width="1"><circle cx="-10.5" cy="-5.5" r="1.7"/><circle cx="-10.5" cy="7.5" r="1.7"/><circle cx="3.5" cy="-10.5" r="1.7"/><circle cx="3.5" cy="12" r="1.7"/></g></g><text x="1092.80" y="279.56" font-size="11.5" fill="#16122e">C</text><rect x="1142.5" y="264.7" width="100.8" height="44.0" rx="3.5" fill="url(#gD)" stroke="#2d2d2d" stroke-width="1.2"/><path d="M1143.3 273.7V268.8a3.5 3.5 0 0 1 3.5 -3.5H1239.0a3.5 3.5 0 0 1 3.5 3.5V273.7z" fill="url(#gGl)"/><text x="1149.00" y="279.36" font-size="11.5" fill="#16122e">C</text><text x="1149.50" y="299.36" font-size="11.5" fill="#16122e">R</text><text x="1189.80" y="279.36" font-size="11.5" fill="#16122e">S</text><text x="1189.80" y="299.36" font-size="11.5" fill="#16122e">V</text><g transform="translate(1172.0 286.0) scale(1)"><path d="M-6 -9C0 -8 1 -4 0.5 0C0 5 2 9 7 5" stroke="#111" stroke-width="2.4" fill="none" stroke-linecap="round"/><path d="M-5 4l7 4M-5 8l7 -4M-1.5 2v8M2 -7l7 4M2 -3l7 -4M5.5 -9v8" stroke="#333" stroke-width=".6"/></g><g transform="translate(1212.9 276.1) scale(1)"><rect x="-6.6" y="-6.5" width="13.2" height="13" rx="2" fill="url(#gBtn)" stroke="#8a8a8a" stroke-width="1"/><path d="M-4.4 -5.2h8.8L1 -0.4v2h-2v-2z" fill="#8f8f8f"/><path d="M0 1.5v4" stroke="#555" stroke-width="1" stroke-dasharray="1 1"/></g><g transform="translate(1232.9 276.1) scale(1)"><rect x="-6.6" y="-6.5" width="13.2" height="13" rx="2" fill="url(#gBtn)" stroke="#8a8a8a" stroke-width="1"/><path d="M0 4.5V-3.5M-3.8 0L0 -4 3.8 0" stroke="#6d6d6d" stroke-width="1.7" fill="none"/></g><rect x="1189.7" y="352.5" width="182.8" height="19.5" rx="3.2" fill="url(#gTr)" stroke="#2b2b2b" stroke-width="1.2"/><path d="M1241.3 352.5V372.0H1192.9a3.2 3.2 0 0 1 -3.2 -3.2V355.7a3.2 3.2 0 0 1 3.2 -3.2z" fill="url(#gD)" stroke="#2b2b2b" stroke-width="1.2"/><path d="M1240.6 353.2V360.5H1190.4V356.1a3 3 0 0 1 3 -3z" fill="url(#gGl)"/><text x="1215.80" y="365.01" font-size="11.5" text-anchor="middle" textLength="39.00" lengthAdjust="spacingAndGlyphs" fill="#16122e">V Count</text><path d="M1252.3 360.8H1361.5M1252.3 360.8v-3.6M1263.2 360.8v-2.6M1274.1 360.8v-2.6M1285.1 360.8v-2.6M1296.0 360.8v-2.6M1306.9 360.8v-3.6M1317.8 360.8v-2.6M1328.7 360.8v-2.6M1339.7 360.8v-2.6M1350.6 360.8v-2.6M1361.5 360.8v-3.6" stroke="#b4b4b8" stroke-width="1" fill="none"/><rect x="1348.0" y="354.5" width="19.6" height="13.5" fill="url(#gTr)" opacity="0"/><text x="1349.00" y="366.32" font-size="13" textLength="4.60" lengthAdjust="spacingAndGlyphs" fill="#101010">1</text><path d="M1359.2 362.9l3.4 -3.4 3.4 3.4 -3.4 3.4z" fill="#fff" stroke="#111" stroke-width="1.3"/><rect x="1480.5" y="185.0" width="85.0" height="90.8" rx="3.5" fill="url(#gD)" stroke="#2d2d2d" stroke-width="1.2"/><path d="M1481.3 194.0V189.1a3.5 3.5 0 0 1 3.5 -3.5H1561.2a3.5 3.5 0 0 1 3.5 3.5V194.0z" fill="url(#gGl)"/><text x="1488.00" y="206.06" font-size="11.5" fill="#16122e">U</text><text x="1488.00" y="226.06" font-size="11.5" fill="#16122e">V</text><text x="1488.00" y="246.56" font-size="11.5" fill="#16122e">H</text><text x="1488.00" y="266.56" font-size="11.5" fill="#16122e">Q</text><g transform="translate(1512.5 223.6) scale(1)"><rect x="-9.5" y="-10.5" width="14.5" height="15.5" fill="#e06010"/><path d="M-9.5 -7.4h14.5M-9.5 -4.3h14.5M-9.5 -1.2h14.5M-9.5 1.9h14.5M-6.6 -10.5v15.5M-3.7 -10.5v15.5M-0.8 -10.5v15.5M2.1 -10.5v15.5" stroke="#ffd9a0" stroke-width=".8"/><path d="M-3 -6.5L10 -6L7.5 6L-6.5 6z" fill="#e9e4e0" fill-opacity=".93" stroke="#777" stroke-width=".7"/><path d="M-4 -3h13.4M-5 0h13.6M-5.8 3h13.8M0 -6.3L-2.5 6M3.3 -6.2L1.5 6M6.7 -6.1L5 6" stroke="#b0a8a4" stroke-width=".6"/><path d="M-6.8 5.5h13.6l.4 4.8h-14.5z" fill="#fff" stroke="#555" stroke-width=".7"/></g><text x="1529.70" y="226.36" font-size="11.5" fill="#16122e">M</text><g transform="translate(1554.8 223.2) scale(1)"><rect x="-6.6" y="-6.5" width="13.2" height="13" rx="2" fill="url(#gBtn)" stroke="#8a8a8a" stroke-width="1"/><path d="M0 -4.5V3.5M-3.8 0L0 4 3.8 0" stroke="#6d6d6d" stroke-width="1.7" fill="none"/></g><rect x="1611.3" y="209.7" width="71.2" height="27.8" rx="3.5" fill="url(#gD)" stroke="#2d2d2d" stroke-width="1.2"/><path d="M1612.1 218.7V213.8a3.5 3.5 0 0 1 3.5 -3.5H1678.2a3.5 3.5 0 0 1 3.5 3.5V218.7z" fill="url(#gGl)"/><text x="1618.30" y="226.16" font-size="11.5" fill="#16122e">M</text><g transform="translate(1644.3 223.4) scale(1)"><path d="M0 -13v26M-5 -12l3.4 5M5 -12l-3.4 5M-5 12l3.4 -5M5 12l-3.4 -5" stroke="#111" stroke-width=".9"/><rect x="-9.6" y="-5.8" width="8.6" height="11.6" fill="#e0460c"/><rect x="1" y="-5.8" width="8.6" height="11.6" fill="#e0460c"/><rect x="-8.6" y="-4.8" width="6.6" height="6.2" fill="#f59a1c"/><rect x="2" y="-4.8" width="6.6" height="6.2" fill="#f59a1c"/><path d="M-9.6 -2h8.6M-9.6 1.8h8.6M-6.7 -5.8v11.6M-3.8 -5.8v11.6M1 -2h8.6M1 1.8h8.6M3.9 -5.8v11.6M6.8 -5.8v11.6" stroke="#c03808" stroke-width=".6"/></g><text x="1662.50" y="226.16" font-size="11.5" fill="#16122e">M</text><rect x="1727.5" y="211.3" width="69.2" height="64.5" rx="3.5" fill="url(#gD)" stroke="#2d2d2d" stroke-width="1.2"/><path d="M1728.3 220.3V215.4a3.5 3.5 0 0 1 3.5 -3.5H1792.4a3.5 3.5 0 0 1 3.5 3.5V220.3z" fill="url(#gGl)"/><text x="1734.70" y="226.06" font-size="11.5" fill="#16122e">M</text><text x="1739.00" y="246.86" font-size="11.5" fill="#16122e">L</text><text x="1738.00" y="266.56" font-size="11.5" fill="#16122e">S</text><g transform="translate(1761.3 243.3) scale(1)"><path d="M-0.5 -10C5 -10 9.5 -3 9.8 2.5C10 8 5 10 0 10C-5.5 10 -9.8 8 -9.6 2.5C-9.3 -3.5 -5.5 -10 -0.5 -10z" fill="url(#gRed)" stroke="#7a0000" stroke-width=".6"/><path d="M-5 -4C-3 -7.5 1 -8.5 3.5 -6.5" stroke="#fff" stroke-opacity=".75" stroke-width="1.6" fill="none" stroke-linecap="round"/></g><text x="1778.00" y="246.56" font-size="11.5" fill="#16122e">O</text><rect x="1510.3" y="305.5" width="168.0" height="20.0" rx="3.2" fill="url(#gTr)" stroke="#2b2b2b" stroke-width="1.2"/><path d="M1548.3 305.5V325.5H1513.5a3.2 3.2 0 0 1 -3.2 -3.2V308.7a3.2 3.2 0 0 1 3.2 -3.2z" fill="url(#gD)" stroke="#2b2b2b" stroke-width="1.2"/><path d="M1547.6 306.2V313.5H1511.0V309.1a3 3 0 0 1 3 -3z" fill="url(#gGl)"/><text x="1529.60" y="318.26" font-size="11.5" text-anchor="middle" textLength="24.50" lengthAdjust="spacingAndGlyphs" fill="#16122e">Level</text><path d="M1559.3 314.0H1667.3M1559.3 314.0v-3.6M1570.1 314.0v-2.6M1580.9 314.0v-2.6M1591.7 314.0v-2.6M1602.5 314.0v-2.6M1613.3 314.0v-3.6M1624.1 314.0v-2.6M1634.9 314.0v-2.6M1645.7 314.0v-2.6M1656.5 314.0v-2.6M1667.3 314.0v-3.6" stroke="#b4b4b8" stroke-width="1" fill="none"/><rect x="1575.5" y="307.5" width="18.9" height="14.0" fill="url(#gTr)" opacity="0"/><text x="1587.50" y="319.57" font-size="13" textLength="5.90" lengthAdjust="spacingAndGlyphs" fill="#101010">2</text><path d="M1577.1 316.1l3.4 -3.4 3.4 3.4 -3.4 3.4z" fill="#fff" stroke="#111" stroke-width="1.3"/><rect x="1709.0" y="313.3" width="186.8" height="20.0" rx="3.2" fill="url(#gTr)" stroke="#2b2b2b" stroke-width="1.2"/><path d="M1763.3 313.3V333.3H1712.2a3.2 3.2 0 0 1 -3.2 -3.2V316.5a3.2 3.2 0 0 1 3.2 -3.2z" fill="url(#gD)" stroke="#2b2b2b" stroke-width="1.2"/><path d="M1762.6 314.0V321.3H1709.7V316.9a3 3 0 0 1 3 -3z" fill="url(#gGl)"/><text x="1736.45" y="326.06" font-size="11.5" text-anchor="middle" textLength="42.00" lengthAdjust="spacingAndGlyphs" fill="#16122e">Distance</text><path d="M1774.3 321.8H1884.8M1774.3 321.8v-3.6M1785.3 321.8v-2.6M1796.4 321.8v-2.6M1807.5 321.8v-2.6M1818.5 321.8v-2.6M1829.5 321.8v-3.6M1840.6 321.8v-2.6M1851.6 321.8v-2.6M1862.7 321.8v-2.6M1873.8 321.8v-2.6M1884.8 321.8v-3.6" stroke="#b4b4b8" stroke-width="1" fill="none"/><rect x="1790.8" y="315.3" width="19.0" height="14.0" fill="url(#gTr)" opacity="0"/><text x="1803.00" y="327.37" font-size="13" textLength="5.80" lengthAdjust="spacingAndGlyphs" fill="#101010">2</text><path d="M1792.4 323.9l3.4 -3.4 3.4 3.4 -3.4 3.4z" fill="#fff" stroke="#111" stroke-width="1.3"/><rect x="1379.5" y="388.3" width="68.0" height="64.2" rx="3.5" fill="url(#gL)" stroke="#2d2d2d" stroke-width="1.2"/><path d="M1380.3 397.3V392.4a3.5 3.5 0 0 1 3.5 -3.5H1443.2a3.5 3.5 0 0 1 3.5 3.5V397.3z" fill="url(#gGlL)"/><text x="1387.30" y="403.86" font-size="11.5" fill="#16122e">X</text><text x="1387.30" y="423.56" font-size="11.5" fill="#16122e">Y</text><text x="1387.30" y="443.56" font-size="11.5" fill="#16122e">Z</text><g transform="translate(1410.0 419.5) scale(1)"><text x="0" y="-3.3" font-size="8.6" text-anchor="middle" fill="#333" textLength="19" lengthAdjust="spacing">XYZ</text><path d="M-6.4 -1.6L-0.8 5.2M0 -1.6V5M6.4 -1.6L0.8 5.2" stroke="#666" stroke-width=".7"/><path d="M-2.6 4.6l1.8 .8 .4 -2M-1.4 3.6l1.4 1.6 1.4 -1.6M2.6 4.6l-1.8 .8 -.4 -2" stroke="#666" stroke-width=".6" fill="none"/><circle cx="0" cy="7.6" r="1.9" fill="#fff" stroke="#111" stroke-width="1.1"/></g><text x="1427.30" y="423.56" font-size="11.5" textLength="9.60" lengthAdjust="spacingAndGlyphs" fill="#16122e">Pt</text><rect x="1501.3" y="408.3" width="67.4" height="44.2" rx="3.5" fill="url(#gL)" stroke="#2d2d2d" stroke-width="1.2"/><path d="M1502.1 417.3V412.4a3.5 3.5 0 0 1 3.5 -3.5H1564.4a3.5 3.5 0 0 1 3.5 3.5V417.3z" fill="url(#gGlL)"/><text x="1509.00" y="423.56" font-size="11.5" fill="#16122e">G</text><text x="1510.00" y="443.56" font-size="11.5" fill="#16122e">T</text><text x="1550.00" y="423.56" font-size="11.5" fill="#16122e">G</text><text x="1550.60" y="443.56" font-size="11.5" fill="#16122e">X</text><g transform="translate(1533.3 430.0) scale(0.88)"><path d="M-6.6 5.6L1.4 -1.6L-0.6 -3.8L7.6 -5.6L5.6 2.4L3.6 0.4L-4.4 7.8z" fill="#f5a818" stroke="#2a1a00" stroke-width="1"/><circle cx="-8.6" cy="7.8" r="2" fill="#fff" stroke="#222" stroke-width="1.1"/><circle cx="8.8" cy="-7.4" r="2" fill="#fff" stroke="#222" stroke-width="1.1"/></g><rect x="1759.5" y="459.7" width="70" height="30.6" rx="3" fill="#fdf95c" stroke="#1b1b1b" stroke-width="1.1"/><text x="1794.20" y="478.08" font-size="9.6" text-anchor="middle" textLength="11.60" lengthAdjust="spacingAndGlyphs" font-family='"Liberation Mono",monospace' fill="#2a2a10">50</text><rect x="867.5" y="515.5" width="167.8" height="19.5" rx="3.2" fill="url(#gTr)" stroke="#2b2b2b" stroke-width="1.2"/><path d="M902.2 515.5V535.0H870.7a3.2 3.2 0 0 1 -3.2 -3.2V518.7a3.2 3.2 0 0 1 3.2 -3.2z" fill="url(#gD)" stroke="#2b2b2b" stroke-width="1.2"/><path d="M901.5 516.2V523.5H868.2V519.1a3 3 0 0 1 3 -3z" fill="url(#gGl)"/><text x="885.15" y="528.01" font-size="11.5" text-anchor="middle" textLength="22.00" lengthAdjust="spacingAndGlyphs" fill="#16122e">Step</text><path d="M913.2 523.8H1024.3M913.2 523.8v-3.6M924.3 523.8v-2.6M935.4 523.8v-2.6M946.5 523.8v-2.6M957.6 523.8v-2.6M968.8 523.8v-3.6M979.9 523.8v-2.6M991.0 523.8v-2.6M1002.1 523.8v-2.6M1013.2 523.8v-2.6M1024.3 523.8v-3.6" stroke="#b4b4b8" stroke-width="1" fill="none"/><rect x="1004.6" y="517.5" width="26.0" height="13.5" fill="url(#gTr)" opacity="0"/><text x="1005.60" y="529.32" font-size="13" textLength="12.20" lengthAdjust="spacingAndGlyphs" fill="#101010">20</text><path d="M1022.2 525.9l3.4 -3.4 3.4 3.4 -3.4 3.4z" fill="#fff" stroke="#111" stroke-width="1.3"/><rect x="866.3" y="536.2" width="171.2" height="19.3" rx="3.2" fill="url(#gTr)" stroke="#2b2b2b" stroke-width="1.2"/><path d="M908.3 536.2V555.5H869.5a3.2 3.2 0 0 1 -3.2 -3.2V539.4a3.2 3.2 0 0 1 3.2 -3.2z" fill="url(#gD)" stroke="#2b2b2b" stroke-width="1.2"/><path d="M907.6 536.9V544.2H867.0V539.8a3 3 0 0 1 3 -3z" fill="url(#gGl)"/><text x="887.60" y="548.61" font-size="11.5" text-anchor="middle" textLength="29.50" lengthAdjust="spacingAndGlyphs" fill="#16122e">Count</text><path d="M919.3 544.4H1026.5M919.3 544.4v-3.6M930.0 544.4v-2.6M940.7 544.4v-2.6M951.5 544.4v-2.6M962.2 544.4v-2.6M972.9 544.4v-3.6M983.6 544.4v-2.6M994.3 544.4v-2.6M1005.1 544.4v-2.6M1015.8 544.4v-2.6M1026.5 544.4v-3.6" stroke="#b4b4b8" stroke-width="1" fill="none"/><rect x="1007.8" y="538.2" width="24.8" height="13.3" fill="url(#gTr)" opacity="0"/><text x="1008.80" y="549.92" font-size="13" textLength="11.50" lengthAdjust="spacingAndGlyphs" fill="#101010">10</text><path d="M1024.2 546.5l3.4 -3.4 3.4 3.4 -3.4 3.4z" fill="#fff" stroke="#111" stroke-width="1.3"/><rect x="1094.7" y="493.8" width="64.8" height="63.7" rx="3.5" fill="url(#gD)" stroke="#2d2d2d" stroke-width="1.2"/><path d="M1095.5 502.8V497.9a3.5 3.5 0 0 1 3.5 -3.5H1155.2a3.5 3.5 0 0 1 3.5 3.5V502.8z" fill="url(#gGl)"/><text x="1101.80" y="508.56" font-size="11.5" fill="#16122e">S</text><text x="1101.80" y="528.56" font-size="11.5" fill="#16122e">N</text><text x="1101.80" y="548.56" font-size="11.5" fill="#16122e">C</text><g transform="translate(1126.0 525.5) scale(1)"><rect x="3.2" y="-9.6" width="7" height="8.6" fill="#b9b9be" stroke="#777" stroke-width=".8"/><text x="6.8" y="-2.4" font-size="7.5" text-anchor="middle" fill="#8a8a8a">2</text><rect x="-2.4" y="-6" width="7" height="9.2" fill="#ececec" stroke="#333" stroke-width=".9"/><text x="1.2" y="1.6" font-size="8" text-anchor="middle" fill="#222">1</text><rect x="-8.6" y="-1" width="8" height="9.6" fill="#fff" stroke="#111" stroke-width="1.1"/><text x="-4.6" y="7.2" font-size="9" text-anchor="middle" fill="#000">0</text></g><text x="1143.20" y="528.56" font-size="11.5" fill="#16122e">S</text><rect x="1413.3" y="511.7" width="63.4" height="28.0" rx="3.5" fill="url(#gD)" stroke="#2d2d2d" stroke-width="1.2"/><path d="M1414.1 520.7V515.8a3.5 3.5 0 0 1 3.5 -3.5H1472.4a3.5 3.5 0 0 1 3.5 3.5V520.7z" fill="url(#gGl)"/><text x="1420.50" y="527.96" font-size="11.5" fill="#16122e">F</text><g transform="translate(1442.5 525.6) scale(1)"><path d="M-7 6.4L-1.6 -6" stroke="#111" stroke-width="2"/><path d="M-4.6 -5.4L0.2 -10.2L0.6 -3.2z" fill="#111"/><circle cx="-7.2" cy="6.8" r="1.7" fill="#fff" stroke="#111" stroke-width="1"/><text x="5.6" y="8.6" font-size="15.5" font-family='"Liberation Serif",serif' text-anchor="middle" fill="#111">Z</text></g><text x="1459.60" y="527.96" font-size="11.5" fill="#16122e">V</text><rect x="1582.0" y="553.4" width="169.0" height="20.6" rx="3.2" fill="url(#gTr)" stroke="#2b2b2b" stroke-width="1.2"/><path d="M1618.5 553.4V574.0H1585.2a3.2 3.2 0 0 1 -3.2 -3.2V556.6a3.2 3.2 0 0 1 3.2 -3.2z" fill="url(#gD)" stroke="#2b2b2b" stroke-width="1.2"/><path d="M1617.8 554.1V561.4H1582.7V557.0a3 3 0 0 1 3 -3z" fill="url(#gGl)"/><text x="1600.55" y="566.46" font-size="11.5" text-anchor="middle" textLength="23.50" lengthAdjust="spacingAndGlyphs" fill="#16122e">Gate</text><path d="M1629.5 562.1H1740.0M1629.5 562.1v-3.6M1640.5 562.1v-2.6M1651.6 562.1v-2.6M1662.7 562.1v-2.6M1673.7 562.1v-2.6M1684.8 562.1v-3.6M1695.8 562.1v-2.6M1706.8 562.1v-2.6M1717.9 562.1v-2.6M1729.0 562.1v-2.6M1740.0 562.1v-3.6" stroke="#b4b4b8" stroke-width="1" fill="none"/><rect x="1623.4" y="555.4" width="19.9" height="14.6" fill="url(#gTr)" opacity="0"/><text x="1636.00" y="567.77" font-size="13" textLength="6.30" lengthAdjust="spacingAndGlyphs" fill="#101010">0</text><path d="M1625.0 564.3l3.4 -3.4 3.4 3.4 -3.4 3.4z" fill="#fff" stroke="#111" stroke-width="1.3"/><rect x="1218.7" y="690.5" width="63.8" height="64.0" rx="3.5" fill="url(#gL)" stroke="#2d2d2d" stroke-width="1.2"/><path d="M1219.5 699.5V694.6a3.5 3.5 0 0 1 3.5 -3.5H1278.2a3.5 3.5 0 0 1 3.5 3.5V699.5z" fill="url(#gGlL)"/><text x="1235.20" y="705.56" font-size="11.5" text-anchor="end" fill="#16122e">L</text><text x="1235.40" y="725.56" font-size="11.5" text-anchor="end" fill="#16122e">i</text><text x="1235.40" y="745.56" font-size="11.5" text-anchor="end" fill="#16122e">W</text><g transform="translate(1254.4 722.0) scale(1)"><rect x="-5" y="-9.6" width="5.8" height="14.4" fill="#7ed321" stroke="#2f7d0a" stroke-width=".9"/><path d="M-5 -6h5.8M-5 1.6h5.8" stroke="#2f7d0a" stroke-width=".7"/><rect x="-4.2" y="-8.8" width="1.8" height="12.8" fill="#c6f58a" opacity=".8"/><path d="M-4.4 -0.9h7.4v-2.6l5.8 3.8-5.8 3.8v-2.6h-7.4z" fill="#e01010" stroke="#8a0000" stroke-width=".5"/><text x="-12" y="5" font-size="9" fill="#111" textLength="6" lengthAdjust="spacingAndGlyphs">N</text></g><text x="1269.20" y="725.56" font-size="11.5" fill="#16122e">i</text><rect x="1344.7" y="710.5" width="79.8" height="64.0" rx="3.5" fill="url(#gL)" stroke="#2d2d2d" stroke-width="1.2"/><path d="M1345.5 719.5V714.6a3.5 3.5 0 0 1 3.5 -3.5H1420.2a3.5 3.5 0 0 1 3.5 3.5V719.5z" fill="url(#gGlL)"/><g transform="translate(1354.2 721.8) scale(1)"><rect x="-6.6" y="-6.5" width="13.2" height="13" rx="2" fill="url(#gBtn)" stroke="#8a8a8a" stroke-width="1"/><path d="M3 3.6A4 4 0 1 0 -3.4 -1.2" stroke="#7a7a7a" stroke-width="1.6" fill="none"/><path d="M-5.6 -3.8l1.6 4.2 3.4 -2.6z" fill="#7a7a7a"/></g><text x="1377.00" y="725.56" font-size="11.5" text-anchor="end" fill="#16122e">L</text><text x="1377.50" y="745.56" font-size="11.5" text-anchor="end" fill="#16122e">i</text><text x="1377.00" y="765.56" font-size="11.5" text-anchor="end" fill="#16122e">W</text><g transform="translate(1396.0 742.0) scale(1)"><rect x="-5" y="-9.6" width="5.8" height="14.4" fill="#7ed321" stroke="#2f7d0a" stroke-width=".9"/><path d="M-5 -6h5.8M-5 1.6h5.8" stroke="#2f7d0a" stroke-width=".7"/><rect x="-4.2" y="-8.8" width="1.8" height="12.8" fill="#c6f58a" opacity=".8"/><path d="M-4.4 -0.9h7.4v-2.6l5.8 3.8-5.8 3.8v-2.6h-7.4z" fill="#e01010" stroke="#8a0000" stroke-width=".5"/><text x="-12" y="5" font-size="9" fill="#111" textLength="6" lengthAdjust="spacingAndGlyphs">N</text></g><text x="1411.20" y="745.56" font-size="11.5" fill="#16122e">i</text><rect x="1486.7" y="710.5" width="61.3" height="44.0" rx="3.5" fill="url(#gD)" stroke="#2d2d2d" stroke-width="1.2"/><path d="M1487.5 719.5V714.6a3.5 3.5 0 0 1 3.5 -3.5H1543.7a3.5 3.5 0 0 1 3.5 3.5V719.5z" fill="url(#gGl)"/><text x="1493.00" y="725.56" font-size="11.5" fill="#16122e">A</text><text x="1493.40" y="745.16" font-size="11.5" fill="#16122e">B</text><g transform="translate(1518.4 732.6) scale(1)"><text x="-7" y="-3.2" font-size="9.5" fill="#111" text-anchor="middle">0</text><text x="4.4" y="-3.2" font-size="9.5" fill="#111" text-anchor="middle">1</text><path d="M-7 -2V3.6M4.6 -2V3.6" stroke="#111" stroke-width="1"/><path d="M-9 1.8l2 2.6 2 -2.6zM2.6 1.8l2 2.6 2 -2.6z" fill="#111"/><path d="M-10.6 6.3H9.4M-7 4.4v3.8M4.6 4.4v3.8" stroke="#111" stroke-width="1"/><rect x="-6.4" y="5" width="10.4" height="2.6" fill="#17c06a"/></g><text x="1534.30" y="734.96" font-size="11.5" fill="#16122e">I</text><rect x="1487.5" y="767.8" width="61.0" height="43.7" rx="3.5" fill="url(#gD)" stroke="#2d2d2d" stroke-width="1.2"/><path d="M1488.3 776.8V771.9a3.5 3.5 0 0 1 3.5 -3.5H1544.2a3.5 3.5 0 0 1 3.5 3.5V776.8z" fill="url(#gGl)"/><text x="1494.00" y="782.36" font-size="11.5" fill="#16122e">A</text><text x="1494.40" y="801.76" font-size="11.5" fill="#16122e">B</text><g transform="translate(1519.2 789.6) scale(1)"><text x="-7" y="-3.2" font-size="9.5" fill="#111" text-anchor="middle">0</text><text x="4.4" y="-3.2" font-size="9.5" fill="#111" text-anchor="middle">1</text><path d="M-7 -2V3.6M4.6 -2V3.6" stroke="#111" stroke-width="1"/><path d="M-9 1.8l2 2.6 2 -2.6zM2.6 1.8l2 2.6 2 -2.6z" fill="#111"/><path d="M-10.6 6.3H9.4M-7 4.4v3.8M4.6 4.4v3.8" stroke="#111" stroke-width="1"/><rect x="-6.4" y="5" width="10.4" height="2.6" fill="#17c06a"/></g><text x="1535.00" y="791.96" font-size="11.5" fill="#16122e">I</text><rect x="1618.4" y="700.3" width="65.1" height="63.9" rx="3.5" fill="url(#gD)" stroke="#2d2d2d" stroke-width="1.2"/><path d="M1619.2 709.3V704.4a3.5 3.5 0 0 1 3.5 -3.5H1679.2a3.5 3.5 0 0 1 3.5 3.5V709.3z" fill="url(#gGl)"/><text x="1625.00" y="715.16" font-size="11.5" fill="#16122e">V</text><text x="1625.40" y="735.16" font-size="11.5" fill="#16122e">S</text><text x="1625.40" y="754.96" font-size="11.5" fill="#16122e">T</text><g transform="translate(1649.6 732.0) scale(1)"><rect x="-9.6" y="-9.6" width="19" height="5.4" fill="#111"/><rect x="-7.6" y="-8.2" width="3" height="2.4" fill="#fff"/><rect x="-2.2" y="-8.2" width="3" height="2.4" fill="#fff"/><rect x="3.2" y="-8.2" width="3" height="2.4" fill="#fff"/><path d="M-9.6 -4.2h19L3.6 4.4h-7z" fill="#12b060" stroke="#0a6a38" stroke-width=".5"/><rect x="-10.6" y="5.6" width="21" height="4" fill="#111"/><path d="M-9 6.2v2.8M-6.8 6.2v2.8M-4.6 6.2v2.8M-2.4 6.2v2.8M-0.2 6.2v2.8M2 6.2v2.8M4.2 6.2v2.8M6.4 6.2v2.8M8.6 6.2v2.8" stroke="#fff" stroke-width=".9"/></g><text x="1665.80" y="719.96" font-size="11.5" fill="#16122e">R</text><text x="1665.60" y="749.96" font-size="11.5" fill="#16122e">C</text><rect x="1717.2" y="642.2" width="157.8" height="150.6" rx="4.5" fill="url(#gGM)" stroke="#2a2a2a" stroke-width="1.2"/><rect x="1723.3" y="648.3" width="145.4" height="138" fill="url(#gGMi)" stroke="#000" stroke-width="1.2"/><path d="M1737.8 649V786M1724 662.1H1868M1752.4 649V786M1724 675.9H1868M1766.9 649V786M1724 689.7H1868M1781.5 649V786M1724 703.5H1868M1796.0 649V786M1724 717.3H1868M1810.5 649V786M1724 731.1H1868M1825.1 649V786M1724 744.9H1868M1839.6 649V786M1724 758.7H1868M1854.2 649V786M1724 772.5H1868" stroke="#b9b9c0" stroke-opacity=".7" stroke-width=".9" fill="none"/><path d="M1724 770C1740 790 1760 715 1784 712C1800 715 1830 790 1856 772C1862 765 1866 745 1868 725" stroke="#9a9aa6" stroke-width=".7" fill="none"/><path d="M1724 665C1736 700 1746 765 1756 763C1768 760 1780 670 1792 664C1806 668 1826 772 1836 774C1846 772 1856 664 1862 664C1865 664 1867 672 1868 680" stroke="#a6a6b0" stroke-width=".7" fill="none"/><path d="M1733.7 774.5V711.5H1782.6V774.5z" fill="none" stroke="#a80f0f" stroke-width="1.2"/><path d="M1790.5 664.5H1826.4V763.4H1790.5z" fill="none" stroke="#a80f0f" stroke-width="1.2"/><path d="M1726.7 662.5C1735 690 1743 731.5 1750.4 731.5C1758 731.5 1766 690 1772.4 648.8" stroke="#0a0a0a" stroke-width="2.4" fill="none"/><path d="M1804.6 648.8C1812 690 1820 749.8 1827.4 749.8C1835 749.8 1844 700 1852 648.8" stroke="#0a0a0a" stroke-width="2.4" fill="none"/><circle cx="1733.7" cy="774.5" r="2.8" fill="#fff" stroke="#000" stroke-width="1.5"/><circle cx="1783.2" cy="711.7" r="2.8" fill="#fff" stroke="#000" stroke-width="1.5"/><circle cx="1790.5" cy="664.6" r="2.8" fill="#fff" stroke="#000" stroke-width="1.5"/><circle cx="1825.5" cy="763.6" r="2.8" fill="#fff" stroke="#000" stroke-width="1.5"/><rect x="1723.3" y="648.3" width="23.3" height="14.2" fill="#fff" stroke="#000" stroke-width="1.1"/><rect x="1845.5" y="772.2" width="23.2" height="14.1" fill="#fff" stroke="#000" stroke-width="1.1"/><text x="1735.00" y="658.52" font-size="8.5" text-anchor="middle" textLength="13.00" lengthAdjust="spacingAndGlyphs" fill="#222">0:1</text><text x="1857.20" y="782.32" font-size="8.5" text-anchor="middle" textLength="13.00" lengthAdjust="spacingAndGlyphs" fill="#222">0:1</text><rect x="910.5" y="769.5" width="208.8" height="19.9" rx="3.2" fill="url(#gTr)" stroke="#2b2b2b" stroke-width="1.2"/><path d="M986.3 769.5V789.4H913.7a3.2 3.2 0 0 1 -3.2 -3.2V772.7a3.2 3.2 0 0 1 3.2 -3.2z" fill="url(#gD)" stroke="#2b2b2b" stroke-width="1.2"/><path d="M985.6 770.2V777.5H911.2V773.1a3 3 0 0 1 3 -3z" fill="url(#gGl)"/><text x="948.70" y="782.21" font-size="11.5" text-anchor="middle" textLength="64.50" lengthAdjust="spacingAndGlyphs" fill="#16122e">Domain start</text><path d="M997.3 778.0H1108.3M997.3 778.0v-3.6M1008.4 778.0v-2.6M1019.5 778.0v-2.6M1030.6 778.0v-2.6M1041.7 778.0v-2.6M1052.8 778.0v-3.6M1063.9 778.0v-2.6M1075.0 778.0v-2.6M1086.1 778.0v-2.6M1097.2 778.0v-2.6M1108.3 778.0v-3.6" stroke="#b4b4b8" stroke-width="1" fill="none"/><rect x="1070.0" y="771.5" width="30.6" height="13.9" fill="url(#gTr)" opacity="0"/><text x="1071.00" y="783.52" font-size="13" textLength="17.60" lengthAdjust="spacingAndGlyphs" fill="#101010">133</text><path d="M1092.2 780.1l3.4 -3.4 3.4 3.4 -3.4 3.4z" fill="#fff" stroke="#111" stroke-width="1.3"/><rect x="910.5" y="789.8" width="207.8" height="19.9" rx="3.2" fill="url(#gTr)" stroke="#2b2b2b" stroke-width="1.2"/><path d="M983.3 789.8V809.7H913.7a3.2 3.2 0 0 1 -3.2 -3.2V793.0a3.2 3.2 0 0 1 3.2 -3.2z" fill="url(#gD)" stroke="#2b2b2b" stroke-width="1.2"/><path d="M982.6 790.5V797.8H911.2V793.4a3 3 0 0 1 3 -3z" fill="url(#gGl)"/><text x="947.20" y="802.51" font-size="11.5" text-anchor="middle" textLength="61.00" lengthAdjust="spacingAndGlyphs" fill="#16122e">Domain end</text><path d="M994.3 798.3H1107.3M994.3 798.3v-3.6M1005.6 798.3v-2.6M1016.9 798.3v-2.6M1028.2 798.3v-2.6M1039.5 798.3v-2.6M1050.8 798.3v-3.6M1062.1 798.3v-2.6M1073.4 798.3v-2.6M1084.7 798.3v-2.6M1096.0 798.3v-2.6M1107.3 798.3v-3.6" stroke="#b4b4b8" stroke-width="1" fill="none"/><rect x="1008.4" y="791.8" width="25.6" height="13.9" fill="url(#gTr)" opacity="0"/><text x="1021.20" y="803.82" font-size="13" textLength="11.80" lengthAdjust="spacingAndGlyphs" fill="#101010">27</text><path d="M1010.0 800.4l3.4 -3.4 3.4 3.4 -3.4 3.4z" fill="#fff" stroke="#111" stroke-width="1.3"/><rect x="1214.8" y="807" width="159.6" height="99.5" rx="3" fill="#fdf95c" stroke="#1b1b1b" stroke-width="1.1"/><path d="M1215.4 825V810a2.5 2.5 0 0 1 2.5 -2.4H1371.3a2.5 2.5 0 0 1 2.5 2.4V825z" fill="#dcd650"/><rect x="1215.4" y="842" width="158.4" height="15.6" fill="#f0ea58" opacity=".8"/><path d="M1228.3 808V906" stroke="#c9a060" stroke-width=".7" stroke-dasharray="1 1.5"/><text x="1344.20" y="819.75" font-size="10.5" textLength="17.00" lengthAdjust="spacingAndGlyphs" font-family='"Liberation Mono",monospace' fill="#2a2a10">{0}</text><text x="1219.60" y="836.75" font-size="10.5" font-family='"Liberation Mono",monospace' fill="#1a1a08">0</text><text x="1231.60" y="836.75" font-size="10.5" textLength="32.00" lengthAdjust="spacingAndGlyphs" font-family='"Liberation Mono",monospace' fill="#1a1a08">133.0</text><text x="1219.60" y="852.75" font-size="10.5" font-family='"Liberation Mono",monospace' fill="#1a1a08">1</text><text x="1231.60" y="852.75" font-size="10.5" textLength="25.50" lengthAdjust="spacingAndGlyphs" font-family='"Liberation Mono",monospace' fill="#1a1a08">27.0</text><rect x="1407.4" y="844.6" width="50.1" height="23.8" rx="3.5" fill="url(#gD)" stroke="#2d2d2d" stroke-width="1.2"/><path d="M1408.2 853.6V848.7a3.5 3.5 0 0 1 3.5 -3.5H1453.2a3.5 3.5 0 0 1 3.5 3.5V853.6z" fill="url(#gGl)"/><g transform="translate(1432.4 856.6) scale(1)"><path d="M-12 0L-6.4 -10.4H6.4L12 0L6.4 10.4H-6.4z" fill="url(#gHex)" stroke="#000" stroke-width="1"/><path d="M-7.4 0H7.4M-4.4 -4.6V4.6M4.4 -4.6V4.6" stroke="#fff" stroke-width="1.9"/></g><rect x="1540.6" y="824.8" width="137.8" height="43.6" rx="3.5" fill="url(#gL)" stroke="#2d2d2d" stroke-width="1.2"/><path d="M1541.4 833.8V828.9a3.5 3.5 0 0 1 3.5 -3.5H1674.1a3.5 3.5 0 0 1 3.5 3.5V833.8z" fill="url(#gGlL)"/><text x="1546.20" y="838.96" font-size="11.5" textLength="44.40" lengthAdjust="spacingAndGlyphs" fill="#16122e">Divisions</text><text x="1551.30" y="858.96" font-size="11.5" textLength="39.70" lengthAdjust="spacingAndGlyphs" fill="#16122e">Domain</text><g transform="translate(1607.6 846.6) scale(1)"><path d="M-4 6C-3 0 -1.5 -6 2.4 -10.6C4 -10.6 7.6 -10.4 9 -9.6C5.4 -9 4.6 -7 5 -3C5.4 0 6.4 2 7 6z" fill="#2a8ec4"/><path d="M-2 6C-1.4 1 0 -5 2.8 -9.4C3.6 -8 2.6 -2 3.4 6z" fill="#35c48a" opacity=".85"/><path d="M4 -9.8C6 -10.2 9 -10 10.4 -9C8 -8.8 6.4 -8.2 5.4 -7z" fill="#9fe8f0"/><path d="M-12 7.6H11" stroke="#999" stroke-width="1.6"/><path d="M-7 7.4H7.6" stroke="#111" stroke-width="2.2"/><path d="M-6.4 1.8V6M7 1.8V6" stroke="#111" stroke-width="1"/><path d="M-8.4 3.4l2 2.8 2-2.8zM5 3.4l2 2.8 2-2.8z" fill="#111"/></g><text x="1624.40" y="848.76" font-size="11.5" textLength="46.00" lengthAdjust="spacingAndGlyphs" fill="#16122e">Selection</text><rect x="1780.4" y="872.8" width="154.6" height="167.2" rx="3.5" fill="url(#gL)" stroke="#2d2d2d" stroke-width="1.2"/><path d="M1781.2 881.8V876.9a3.5 3.5 0 0 1 3.5 -3.5H1930.7a3.5 3.5 0 0 1 3.5 3.5V881.8z" fill="url(#gGlL)"/><text x="1850.40" y="886.86" font-size="11.5" text-anchor="end" textLength="63.50" lengthAdjust="spacingAndGlyphs" fill="#16122e">Domain start</text><text x="1850.40" y="906.89" font-size="11.5" text-anchor="end" textLength="59.50" lengthAdjust="spacingAndGlyphs" fill="#16122e">Domain end</text><text x="1850.40" y="926.92" font-size="11.5" text-anchor="end" textLength="59.50" lengthAdjust="spacingAndGlyphs" fill="#16122e">Domain end</text><text x="1850.40" y="946.95" font-size="11.5" text-anchor="end" textLength="29.50" lengthAdjust="spacingAndGlyphs" fill="#16122e">Count</text><text x="1850.40" y="966.98" font-size="11.5" text-anchor="end" textLength="40.00" lengthAdjust="spacingAndGlyphs" fill="#16122e">Input[N]</text><text x="1850.40" y="987.01" font-size="11.5" text-anchor="end" textLength="40.00" lengthAdjust="spacingAndGlyphs" fill="#16122e">Input[N]</text><text x="1850.40" y="1007.04" font-size="11.5" text-anchor="end" textLength="46.50" lengthAdjust="spacingAndGlyphs" fill="#16122e">Selection</text><text x="1884.00" y="886.86" font-size="11.5" textLength="28.00" lengthAdjust="spacingAndGlyphs" fill="#16122e">Doma</text><text x="1884.00" y="906.89" font-size="11.5" textLength="28.00" lengthAdjust="spacingAndGlyphs" fill="#16122e">Doma</text><text x="1884.00" y="926.92" font-size="11.5" textLength="28.00" lengthAdjust="spacingAndGlyphs" fill="#16122e">Doma</text><text x="1884.00" y="946.95" font-size="11.5" textLength="28.00" lengthAdjust="spacingAndGlyphs" fill="#16122e">Coun</text><text x="1884.00" y="966.98" font-size="11.5" textLength="28.00" lengthAdjust="spacingAndGlyphs" fill="#16122e">Value</text><text x="1884.00" y="987.01" font-size="11.5" textLength="28.00" lengthAdjust="spacingAndGlyphs" fill="#16122e">Value</text><text x="1884.00" y="1007.04" font-size="11.5" textLength="20.00" lengthAdjust="spacingAndGlyphs" fill="#16122e">Cho</text><g transform="translate(1870.0 944.5) scale(1)"><path d="M-4 6C-3 0 -1.5 -6 2.4 -10.6C4 -10.6 7.6 -10.4 9 -9.6C5.4 -9 4.6 -7 5 -3C5.4 0 6.4 2 7 6z" fill="#2a8ec4"/><path d="M-2 6C-1.4 1 0 -5 2.8 -9.4C3.6 -8 2.6 -2 3.4 6z" fill="#35c48a" opacity=".85"/><path d="M4 -9.8C6 -10.2 9 -10 10.4 -9C8 -8.8 6.4 -8.2 5.4 -7z" fill="#9fe8f0"/><path d="M-11 5.2H8" stroke="#fff" stroke-width="3.4"/><path d="M-11 5.2H8" stroke="#888" stroke-width=".6" transform="translate(0 2)"/><rect x="4.4" y="2.2" width="6" height="6.6" fill="#ddd" stroke="#666" stroke-width="1"/><circle cx="-7.4" cy="5.2" r="2.3" fill="#fff" stroke="#222" stroke-width="1.1"/></g><rect x="1782" y="1018.8" width="140" height="8" rx="2" fill="#3d3d3d" stroke="#111" stroke-width="1"/><rect x="1046.3" y="207.0" width="58.4" height="14.7" fill="url(#gTag)" stroke="#111" stroke-width="1.1"/><path d="M1069.5 207.6L1075.5 200.5L1081.5 207.6z" fill="#fdfdfd"/><text x="1075.50" y="217.80" font-size="10.5" text-anchor="middle" textLength="49.40" lengthAdjust="spacingAndGlyphs" font-family='"Liberation Mono",monospace' fill="#0a0a18" stroke="#0a0a18" stroke-width=".25">2ms (0%)</text><rect x="1316.0" y="206.7" width="65.0" height="15.0" fill="url(#gTag)" stroke="#111" stroke-width="1.1"/><path d="M1342.5 207.3L1348.5 200.2L1354.5 207.3z" fill="#fdfdfd"/><text x="1348.50" y="217.65" font-size="10.5" text-anchor="middle" textLength="56.00" lengthAdjust="spacingAndGlyphs" font-family='"Liberation Mono",monospace' fill="#0a0a18" stroke="#0a0a18" stroke-width=".25">34ms (6%)</text><rect x="1048.0" y="310.8" width="58.7" height="14.7" fill="url(#gTag)" stroke="#111" stroke-width="1.1"/><path d="M1071.5 311.4L1077.5 304.3L1083.5 311.4z" fill="#fdfdfd"/><text x="1077.35" y="321.60" font-size="10.5" text-anchor="middle" textLength="49.70" lengthAdjust="spacingAndGlyphs" font-family='"Liberation Mono",monospace' fill="#0a0a18" stroke="#0a0a18" stroke-width=".25">3ms (0%)</text><rect x="1163.0" y="310.8" width="58.7" height="14.7" fill="url(#gTag)" stroke="#111" stroke-width="1.1"/><path d="M1186.0 311.4L1192.0 304.3L1198.0 311.4z" fill="#fdfdfd"/><text x="1192.35" y="321.60" font-size="10.5" text-anchor="middle" textLength="49.70" lengthAdjust="spacingAndGlyphs" font-family='"Liberation Mono",monospace' fill="#0a0a18" stroke="#0a0a18" stroke-width=".25">3ms (0%)</text><rect x="1490.0" y="277.8" width="64.7" height="14.7" fill="url(#gTag)" stroke="#111" stroke-width="1.1"/><path d="M1516.0 278.4L1522.0 271.3L1528.0 278.4z" fill="#fdfdfd"/><text x="1522.35" y="288.60" font-size="10.5" text-anchor="middle" textLength="55.70" lengthAdjust="spacingAndGlyphs" font-family='"Liberation Mono",monospace' fill="#0a0a18" stroke="#0a0a18" stroke-width=".25">25ms (4%)</text><rect x="1729.0" y="277.8" width="64.7" height="14.7" fill="url(#gTag)" stroke="#111" stroke-width="1.1"/><path d="M1755.0 278.4L1761.0 271.3L1767.0 278.4z" fill="#fdfdfd"/><text x="1761.35" y="288.60" font-size="10.5" text-anchor="middle" textLength="55.70" lengthAdjust="spacingAndGlyphs" font-family='"Liberation Mono",monospace' fill="#0a0a18" stroke="#0a0a18" stroke-width=".25">21ms (3%)</text><ellipse cx="1029.2" cy="791.3" rx="55.4" ry="155.4" transform="rotate(90 1029.2 791.3)" fill="none" stroke="#0c0c0c" stroke-width="5" stroke-linecap="round" stroke-dasharray="0 12.4"/><path d="M1854.6 977.5l7.6 1.4 2 9z" fill="#111"/><path d="M1864 981.5A20 20 0 0 1 1893.4 980.6" stroke="#0a0a0a" stroke-width="3.6" fill="none"/><circle cx="1879.4" cy="994.6" r="18.2" fill="url(#gCur)" stroke="#fff" stroke-width="2.8"/><path d="M1866 981l6 1-5 5zM1892.8 981l-6 1 5 5zM1866 1008.2l6-1-5-5zM1892.8 1008.2l-6-1 5-5z" fill="#fff"/><rect x="831.4" y="996.4" width="6.4" height="27.2" fill="url(#gD)" stroke="#111" stroke-width="1.1"/><rect x="822" y="329.5" width="172.2" height="21" fill="#c4ccd8" opacity=".42"/><text x="853.00" y="343.96" font-size="11.5" textLength="84.00" lengthAdjust="spacingAndGlyphs" fill="#b5b9c2">Full-screen Snip</text></svg>
<!-- window chrome -->
<div class="a" style="left:0;top:0;width:1920px;height:1px;background:#9c9cab"></div>
<div class="a" style="left:0;top:1px;width:1920px;height:1px;background:#e4e4ea"></div>
<span class="t" style="left:8.00px;top:9.17px;font-size:12px;line-height:16px;color:#120822;letter-spacing:-0.011px;">Rhino Viewport</span>
<div class="a" style="left:0;top:33px;width:36.6px;height:17.6px;background:#a0b2cd;clip-path:polygon(0 0,100% 0,100% 90%,95% 100%,0 100%)"></div>
<span class="t" style="left:5.00px;top:33.67px;font-size:12px;line-height:16px;color:#20201c;letter-spacing:-0.589px;">A1</span>
<div class="a" style="left:25.6px;top:35px;width:1.3px;height:15px;background:#000"></div>
<svg class="a" style="left:28px;top:40px" width="8" height="5"><path d="M0.5 0.8h6.6l-3.3 3.6z" fill="#000"/></svg>
<div class="a" style="left:811px;top:10px;width:19px;height:19px;background:#c8505a"></div>
<svg class="a" style="left:811px;top:10px" width="19" height="19"><path d="M7.3 7.6l4.4 4.4M11.7 7.6l-4.4 4.4" stroke="#fff" stroke-width="1.4"/></svg>
<span class="t" style="left:837.50px;top:7.57px;font-size:12px;line-height:16px;color:#000;letter-spacing:-0.216px;">Grasshopper - GH Final Rhino - GH1*</span>
<svg class="a" style="left:1785px;top:5px" width="120" height="22"><path d="M8.2 10.4h10" stroke="#000" stroke-width="1.1"/><rect x="53.5" y="5.5" width="9.3" height="9.3" fill="none" stroke="#000" stroke-width="1.1"/><path d="M99.3 5.2l9.6 9.6M108.9 5.2l-9.6 9.6" stroke="#000" stroke-width="1.1"/></svg>
<div class="a" style="left:831px;top:31px;width:1081px;height:24px;background:linear-gradient(90deg,#f0f0f6 0%,#f1f0f6 12%,#f7f4f6 30%,#f9f6f7 55%,#fcfcfd 70%,#ffffff 100%)"></div>
<div class="a" style="left:831px;top:55px;width:1081px;height:22px;background:#f0f0f5"></div>
<span class="t" style="left:844.00px;top:35.17px;font-size:12.5px;line-height:16px;color:#08081c;letter-spacing:-1.285px;">File</span>
<span class="t" style="left:879.00px;top:35.17px;font-size:12.5px;line-height:16px;color:#08081c;letter-spacing:-1.135px;">Edit</span>
<span class="t" style="left:916.00px;top:35.17px;font-size:12.5px;line-height:16px;color:#08081c;letter-spacing:-1.142px;">View</span>
<span class="t" style="left:958.00px;top:35.17px;font-size:12.5px;line-height:16px;color:#08081c;letter-spacing:-0.998px;">Display</span>
<span class="t" style="left:1011.00px;top:35.17px;font-size:12.5px;line-height:16px;color:#08081c;letter-spacing:-0.984px;">Solution</span>
<span class="t" style="left:1068.00px;top:35.17px;font-size:12.5px;line-height:16px;color:#08081c;letter-spacing:-1.177px;">Help</span>
<span class="t" style="left:1794.50px;top:35.17px;font-size:12.5px;line-height:16px;color:#08081c;letter-spacing:-0.934px;">GH Final Rhino - GH1*</span>
<div class="a" style="left:831px;top:55px;width:54px;height:23px;background:linear-gradient(#fff 0%,#fff 60%,#f4f4f6 100%);border:1px solid #b9b9c2;border-bottom:none;border-left:none;border-radius:0 6px 0 0;box-sizing:border-box"></div>
<span class="t" style="left:837.50px;top:57.27px;font-size:12.5px;line-height:16px;color:#0a0a20;letter-spacing:-1.094px;">Params</span>
<span class="t" style="left:893.00px;top:58.67px;font-size:12.5px;line-height:16px;color:#7f7f8e;letter-spacing:-0.907px;">Maths</span>
<span class="t" style="left:940.00px;top:58.67px;font-size:12.5px;line-height:16px;color:#7f7f8e;letter-spacing:-1.003px;">Sets</span>
<span class="t" style="left:979.00px;top:58.67px;font-size:12.5px;line-height:16px;color:#7f7f8e;letter-spacing:-0.573px;">Vector</span>
<span class="t" style="left:1027.00px;top:58.67px;font-size:12.5px;line-height:16px;color:#7f7f8e;letter-spacing:-0.668px;">Curve</span>
<span class="t" style="left:1073.00px;top:58.67px;font-size:12.5px;line-height:16px;color:#7f7f8e;letter-spacing:-0.725px;">Surface</span>
<span class="t" style="left:1129.00px;top:58.67px;font-size:12.5px;line-height:16px;color:#7f7f8e;letter-spacing:-0.891px;">Mesh</span>
<span class="t" style="left:1172.00px;top:58.67px;font-size:12.5px;line-height:16px;color:#7f7f8e;letter-spacing:-0.548px;">Intersect</span>
<span class="t" style="left:1233.00px;top:58.67px;font-size:12.5px;line-height:16px;color:#7f7f8e;letter-spacing:-0.609px;">Transform</span>
<span class="t" style="left:1300.00px;top:58.67px;font-size:12.5px;line-height:16px;color:#7f7f8e;letter-spacing:-0.498px;">Display</span>
<span class="t" style="left:1354.00px;top:58.67px;font-size:12.5px;line-height:16px;color:#7f7f8e;letter-spacing:-1.375px;">Wb</span>
<span class="t" style="left:1387.00px;top:58.67px;font-size:12.5px;line-height:16px;color:#7f7f8e;letter-spacing:-0.602px;">PanelingTools</span>
<span class="t" style="left:1474.00px;top:58.67px;font-size:12.5px;line-height:16px;color:#7f7f8e;letter-spacing:-0.437px;">TT Toolbox</span>
<div class="a" style="left:831px;top:77px;width:1080.5px;height:88px;background:linear-gradient(#d6d6d6 0%,#d9d9d9 12%,#dedede 25%,#e4e4e4 50%,#ebebeb 80%,#eeeeee 100%);border-top:1px solid #bdbdc4;border-radius:0 5px 0 0;box-sizing:border-box"></div>
<div class="a" style="left:831px;top:77px;width:54px;height:4px;background:linear-gradient(#f4f4f6,#e0e0e0 100%)"></div>
<div class="a" style="left:885px;top:70px;width:7px;height:8px;overflow:hidden"><div style="position:absolute;left:0;top:-8px;width:16px;height:16px;border-radius:0 0 0 7px;border:1px solid #b9b9c2;border-top:none;border-right:none;box-sizing:border-box"></div></div>
<div class="a" style="left:831px;top:164px;width:1081px;height:1.6px;background:#7d7d82"></div>
<div class="a" style="left:832.5px;top:80.5px;width:192.20000000000005px;height:72px;border-radius:4px;border:1px solid #bcbcbc;box-sizing:border-box;background:linear-gradient(#e2e2e2,#ececec)"></div>
<div class="a" style="left:832.5px;top:139px;width:192.20000000000005px;height:13.6px;border-radius:0 0 5px 5px;background:linear-gradient(#333 0%,#2a2a2a 45%,#1c1c1c 55%,#141414 100%)"></div>
<span class="t" style="left:900.00px;top:138.77px;font-size:11px;line-height:14px;color:#fff;letter-spacing:-0.412px;">Geometry</span>
<svg class="a" style="left:1014.2px;top:142px" width="8" height="8"><path d="M4 0.5v7M0.5 4h7" stroke="#8a8a8a" stroke-width="1.3"/></svg>
<div class="a" style="left:1028px;top:80.5px;width:60.700000000000045px;height:72px;border-radius:4px;border:1px solid #bcbcbc;box-sizing:border-box;background:linear-gradient(#e2e2e2,#ececec)"></div>
<div class="a" style="left:1028px;top:139px;width:60.700000000000045px;height:13.6px;border-radius:0 0 5px 5px;background:linear-gradient(#333 0%,#2a2a2a 45%,#1c1c1c 55%,#141414 100%)"></div>
<span class="t" style="left:1034.00px;top:138.77px;font-size:11px;line-height:14px;color:#fff;letter-spacing:-0.574px;">Primitive</span>
<svg class="a" style="left:1078.2px;top:142px" width="8" height="8"><path d="M4 0.5v7M0.5 4h7" stroke="#8a8a8a" stroke-width="1.3"/></svg>
<div class="a" style="left:1092.5px;top:80.5px;width:135.79999999999995px;height:72px;border-radius:4px;border:1px solid #bcbcbc;box-sizing:border-box;background:linear-gradient(#e2e2e2,#ececec)"></div>
<div class="a" style="left:1092.5px;top:139px;width:135.79999999999995px;height:13.6px;border-radius:0 0 5px 5px;background:linear-gradient(#333 0%,#2a2a2a 45%,#1c1c1c 55%,#141414 100%)"></div>
<span class="t" style="left:1143.75px;top:138.77px;font-size:11px;line-height:14px;color:#fff;letter-spacing:0.007px;">Input</span>
<svg class="a" style="left:1217.8px;top:142px" width="8" height="8"><path d="M4 0.5v7M0.5 4h7" stroke="#8a8a8a" stroke-width="1.3"/></svg>
<div class="a" style="left:1232.5px;top:80.5px;width:108.0px;height:72px;border-radius:4px;border:1px solid #bcbcbc;box-sizing:border-box;background:linear-gradient(#e2e2e2,#ececec)"></div>
<div class="a" style="left:1232.5px;top:139px;width:108.0px;height:13.6px;border-radius:0 0 5px 5px;background:linear-gradient(#333 0%,#2a2a2a 45%,#1c1c1c 55%,#141414 100%)"></div>
<span class="t" style="left:1274.00px;top:138.77px;font-size:11px;line-height:14px;color:#fff;letter-spacing:-0.472px;">Util</span>
<svg class="a" style="left:1330.0px;top:142px" width="8" height="8"><path d="M4 0.5v7M0.5 4h7" stroke="#8a8a8a" stroke-width="1.3"/></svg>
<div class="a" style="left:866.2px;top:84px;width:1px;height:52px;background:linear-gradient(#e4e4e4,#c4c4c8 50%,#e4e4e4)"></div>
<div class="a" style="left:960.3px;top:84px;width:1px;height:52px;background:linear-gradient(#e4e4e4,#c4c4c8 50%,#e4e4e4)"></div>
<div class="a" style="left:1126.2px;top:84px;width:1px;height:52px;background:linear-gradient(#e4e4e4,#c4c4c8 50%,#e4e4e4)"></div>
<div class="a" style="left:1192.5px;top:84px;width:1px;height:52px;background:linear-gradient(#e4e4e4,#c4c4c8 50%,#e4e4e4)"></div>
<div class="a" style="left:1266.2px;top:84px;width:1px;height:52px;background:linear-gradient(#e4e4e4,#c4c4c8 50%,#e4e4e4)"></div>
<div class="a" style="left:1304.2px;top:84px;width:1px;height:52px;background:linear-gradient(#e4e4e4,#c4c4c8 50%,#e4e4e4)"></div>
<div class="a" style="left:831px;top:165.6px;width:1081px;height:31.4px;background:#fbfbfc"></div>
<div class="a" style="left:895.6px;top:171px;width:1px;height:21px;background:#c8c8c8"></div>
<div class="a" style="left:901px;top:169.5px;width:70px;height:24.3px;border:1px solid #7a7a7a;background:#fff;box-sizing:border-box"></div>
<span class="t" style="left:905.00px;top:173.07px;font-size:13px;line-height:17px;color:#000;letter-spacing:-0.688px;">100%</span>
<svg class="a" style="left:957px;top:177px" width="10" height="8"><path d="M1 1.8l4 4 4-4" stroke="#444" stroke-width="1.1" fill="none"/></svg>
<div class="a" style="left:1802px;top:171.5px;width:1px;height:20px;background:#b8b8b8"></div>
<div class="a" style="left:1869px;top:171.5px;width:1px;height:20px;background:#b8b8b8"></div>
<div class="a" style="left:831px;top:1024px;width:1081px;height:3px;background:#fff"></div>
<div class="a" style="left:831px;top:1027px;width:1081px;height:20px;background:linear-gradient(90deg,#f0f0f6 0%,#f0f0f6 10%,#f4f3f6 30%,#fafafa 100%)"></div>
<svg class="a" style="left:831px;top:1027px" width="18" height="20" viewBox="831 1027 18 20"><defs><radialGradient id="sti" cx=".4" cy=".3" r=".8"><stop offset="0" stop-color="#9fd0ff"/><stop offset=".5" stop-color="#2f78d0"/><stop offset="1" stop-color="#0b2f78"/></radialGradient></defs><circle cx="839.6" cy="1037" r="7.6" fill="url(#sti)" stroke="#0a2a66" stroke-width=".8"/><ellipse cx="839.8" cy="1036.6" rx="2.3" ry="3.3" fill="none" stroke="#fff" stroke-width="1.2"/></svg>
<span class="t" style="left:851.70px;top:1028.97px;font-size:12.5px;line-height:16px;color:#1a1a2a;letter-spacing:-0.923px;">Autosave complete (200 seconds ago)</span>
<span class="t" style="left:1852.00px;top:1028.67px;font-size:12px;line-height:16px;color:#a6acb6;letter-spacing:-0.589px;">0.9.0076</span>
<div class="a" style="left:1912px;top:2px;width:8px;height:1038px;background:#fbfbfc"></div>
<div class="a" style="left:1913px;top:36px;width:7px;height:150px;background:#e9e9f0"></div>
<div class="a" style="left:1913px;top:186px;width:7px;height:854px;background:#f3f3f7"></div>
<div class="a" style="left:1915px;top:186px;width:1px;height:854px;background:#c6c6ce"></div>
<div class="a" style="left:1916px;top:187px;width:4px;height:853px;background:#fdfdfe"></div>
<svg class="a" style="left:1913px;top:48px" width="7" height="140" viewBox="0 0 7 140"><path d="M1 5v2M1 13v2" stroke="#222" stroke-width="1.4"/><rect x="1.500" y="28.500" width="8" height="12" fill="#fff" stroke="#aaa"/><path d="M6 50c-3 0-3 4-1 5c-2 1-1 5 2 4M6 124c-3 0-3 4-1 5c-2 1-1 5 2 4" fill="#fff" stroke="#999" stroke-width=".9"/><path d="M0 112h7M0 114.500h7" stroke="#c4c4cc" stroke-width=".8"/></svg>
<svg class="a" style="left:1900px;top:1028px" width="12" height="12" viewBox="0 0 12 12"><path d="M9 3.500h1.600M9 7h1.600M5.500 7h1.600M9 10.500h1.600M5.500 10.500h1.600M2 10.500h1.600" stroke="#9a9aa4" stroke-width="1.600"/></svg>
<div class="a" style="left:1912px;top:2px;width:1px;height:1038px;background:#a9a9b2"></div>
<div class="a" style="left:1910px;top:197px;width:2px;height:827px;background:#fafafa"></div>
<svg class="a" style="left:831px;top:78px" width="520" height="64" viewBox="831 78 520 64" font-family='"Liberation Sans",sans-serif'>
<defs><linearGradient id="hxg" x1="0" y1="0" x2="0" y2="1"><stop offset="0" stop-color="#4a4a4a"/><stop offset=".5" stop-color="#1c1c1c"/><stop offset="1" stop-color="#050505"/></linearGradient>
<linearGradient id="sqg" x1="0" y1="0" x2="0" y2="1"><stop offset="0" stop-color="#e2e2e2"/><stop offset=".45" stop-color="#a2a2a2"/><stop offset=".5" stop-color="#7c7c7c"/><stop offset="1" stop-color="#4c4c4c"/></linearGradient>
<linearGradient id="ylg" x1="0" y1="0" x2="0" y2="1"><stop offset="0" stop-color="#ffbe1e"/><stop offset="1" stop-color="#fff45a"/></linearGradient>
<linearGradient id="pkg" x1="0" y1="0" x2="1" y2="0"><stop offset="0" stop-color="#d4709a"/><stop offset=".45" stop-color="#ee2a92"/><stop offset="1" stop-color="#c8108c"/></linearGradient>
<linearGradient id="lg1" x1="0" y1="0" x2="0" y2="1"><stop offset="0" stop-color="#f4f4f4"/><stop offset="1" stop-color="#9a9a9a"/></linearGradient>
<linearGradient id="dkar" x1="0" y1="0" x2="0" y2="1"><stop offset="0" stop-color="#6a6a6a"/><stop offset="1" stop-color="#1c1c1c"/></linearGradient>
<linearGradient id="ltar" x1="0" y1="0" x2="0" y2="1"><stop offset="0" stop-color="#ffffff"/><stop offset="1" stop-color="#bdbdbd"/></linearGradient>
<radialGradient id="chg" cx=".35" cy=".3" r=".8"><stop offset="0" stop-color="#ff8a8a"/><stop offset=".3" stop-color="#ee1010"/><stop offset="1" stop-color="#8a0000"/></radialGradient>
<radialGradient id="pks" cx=".4" cy=".35" r=".75"><stop offset="0" stop-color="#ffd0e6"/><stop offset=".45" stop-color="#e02a84"/><stop offset="1" stop-color="#8c0a4a"/></radialGradient>
<radialGradient id="gys" cx=".4" cy=".3" r=".8"><stop offset="0" stop-color="#ffffff"/><stop offset=".6" stop-color="#bcbcbc"/><stop offset="1" stop-color="#6e6e6e"/></radialGradient>
<radialGradient id="knb" cx=".4" cy=".3" r=".8"><stop offset="0" stop-color="#6a6a6a"/><stop offset="1" stop-color="#111"/></radialGradient>
<filter id="sh" x="-30%" y="-30%" width="160%" height="160%"><feGaussianBlur stdDeviation="1"/></filter></defs>
<g transform="translate(848.0 95.5)"><path d="M-12.2 0L-6.5 -10.6H6.5L12.2 0L6.5 10.6H-6.5z" fill="#000" opacity=".28" transform="translate(0.6 1.2) scale(1.06)" filter="url(#sh)"/><path d="M-12.2 0L-6.5 -10.6H6.5L12.2 0L6.5 10.6H-6.5z" fill="url(#hxg)" stroke="#2e2e2e" stroke-width=".9"/><path d="M-10.6 -0.6L-5.7 -9.5H5.7L10.6 -0.6C4 -2.6 -4 -2.6 -10.6 -0.6z" fill="#fff" opacity=".13"/><path d="M-4 -4L4 4M4 -4L-4 4" stroke="#fff" fill="none" stroke-width="3"/></g>
<g transform="translate(848.0 123.6)"><path d="M-12.2 0L-6.5 -10.6H6.5L12.2 0L6.5 10.6H-6.5z" fill="#000" opacity=".28" transform="translate(0.6 1.2) scale(1.06)" filter="url(#sh)"/><path d="M-12.2 0L-6.5 -10.6H6.5L12.2 0L6.5 10.6H-6.5z" fill="url(#hxg)" stroke="#2e2e2e" stroke-width=".9"/><path d="M-10.6 -0.6L-5.7 -9.5H5.7L10.6 -0.6C4 -2.6 -4 -2.6 -10.6 -0.6z" fill="#fff" opacity=".13"/><path d="M-5 5L3 -3" stroke="#fff" fill="none" stroke-width="2.6"/><path d="M-0.5 -5.8H6V0.7z" fill="#fff"/></g>
<g transform="translate(885.8 95.5)"><path d="M-12.2 0L-6.5 -10.6H6.5L12.2 0L6.5 10.6H-6.5z" fill="#000" opacity=".28" transform="translate(0.6 1.2) scale(1.06)" filter="url(#sh)"/><path d="M-12.2 0L-6.5 -10.6H6.5L12.2 0L6.5 10.6H-6.5z" fill="url(#hxg)" stroke="#2e2e2e" stroke-width=".9"/><path d="M-10.6 -0.6L-5.7 -9.5H5.7L10.6 -0.6C4 -2.6 -4 -2.6 -10.6 -0.6z" fill="#fff" opacity=".13"/><ellipse cx="0" cy="0" rx="6.6" ry="4.9" stroke="#fff" fill="none" stroke-width="1.8"/></g>
<g transform="translate(885.8 123.6)"><path d="M-12.2 0L-6.5 -10.6H6.5L12.2 0L6.5 10.6H-6.5z" fill="#000" opacity=".28" transform="translate(0.6 1.2) scale(1.06)" filter="url(#sh)"/><path d="M-12.2 0L-6.5 -10.6H6.5L12.2 0L6.5 10.6H-6.5z" fill="url(#hxg)" stroke="#2e2e2e" stroke-width=".9"/><path d="M-10.6 -0.6L-5.7 -9.5H5.7L10.6 -0.6C4 -2.6 -4 -2.6 -10.6 -0.6z" fill="#fff" opacity=".13"/><path d="M-4.2 -5.4C1 -4.4 3 1 3.6 5.2M0.4 5.6H6.2" stroke="#fff" fill="none" stroke-width="1.7"/><path d="M-6 -7l4.6 .6-3 3.2z" fill="#fff"/></g>
<g transform="translate(913.8 95.5)"><path d="M-12.2 0L-6.5 -10.6H6.5L12.2 0L6.5 10.6H-6.5z" fill="#000" opacity=".28" transform="translate(0.6 1.2) scale(1.06)" filter="url(#sh)"/><path d="M-12.2 0L-6.5 -10.6H6.5L12.2 0L6.5 10.6H-6.5z" fill="url(#hxg)" stroke="#2e2e2e" stroke-width=".9"/><path d="M-10.6 -0.6L-5.7 -9.5H5.7L10.6 -0.6C4 -2.6 -4 -2.6 -10.6 -0.6z" fill="#fff" opacity=".13"/><g transform="rotate(-28)" stroke="#fff" fill="none"><ellipse rx="7.4" ry="4.2" stroke-width="1.5"/><ellipse rx="4.6" ry="2.5" stroke-width="1" stroke-opacity=".85"/><ellipse rx="2.1" ry="1.1" stroke-width=".8" stroke-opacity=".7"/></g></g>
<g transform="translate(913.8 123.6)"><path d="M-12.2 0L-6.5 -10.6H6.5L12.2 0L6.5 10.6H-6.5z" fill="#000" opacity=".28" transform="translate(0.6 1.2) scale(1.06)" filter="url(#sh)"/><path d="M-12.2 0L-6.5 -10.6H6.5L12.2 0L6.5 10.6H-6.5z" fill="url(#hxg)" stroke="#2e2e2e" stroke-width=".9"/><path d="M-10.6 -0.6L-5.7 -9.5H5.7L10.6 -0.6C4 -2.6 -4 -2.6 -10.6 -0.6z" fill="#fff" opacity=".13"/><path d="M-4 4.2L4 -4" stroke="#fff" fill="none" stroke-width="1.6"/><rect x="-6.2" y="2.6" width="3.4" height="3.4" fill="#111" stroke="#fff" stroke-width="1.2"/><rect x="2.8" y="-6" width="3.4" height="3.4" fill="#111" stroke="#fff" stroke-width="1.2"/></g>
<g transform="translate(942.0 95.5)"><path d="M-12.2 0L-6.5 -10.6H6.5L12.2 0L6.5 10.6H-6.5z" fill="#000" opacity=".28" transform="translate(0.6 1.2) scale(1.06)" filter="url(#sh)"/><path d="M-12.2 0L-6.5 -10.6H6.5L12.2 0L6.5 10.6H-6.5z" fill="url(#hxg)" stroke="#2e2e2e" stroke-width=".9"/><path d="M-10.6 -0.6L-5.7 -9.5H5.7L10.6 -0.6C4 -2.6 -4 -2.6 -10.6 -0.6z" fill="#fff" opacity=".13"/><path d="M-6.8 -3.2L3.6 -6L7.4 1.2L-5.2 5.6z" fill="#8a8a8a" fill-opacity=".55" stroke="#fff" stroke-width="1.5"/><path d="M-2 -1.2L2.6 -2.4L3.8 0.2" stroke="#fff" fill="none" stroke-width=".9" stroke-opacity=".8"/></g>
<g transform="translate(942.0 123.6)"><path d="M-12.2 0L-6.5 -10.6H6.5L12.2 0L6.5 10.6H-6.5z" fill="#000" opacity=".28" transform="translate(0.6 1.2) scale(1.06)" filter="url(#sh)"/><path d="M-12.2 0L-6.5 -10.6H6.5L12.2 0L6.5 10.6H-6.5z" fill="url(#hxg)" stroke="#2e2e2e" stroke-width=".9"/><path d="M-10.6 -0.6L-5.7 -9.5H5.7L10.6 -0.6C4 -2.6 -4 -2.6 -10.6 -0.6z" fill="#fff" opacity=".13"/><path d="M-8 -5.4L8 6M8 -5.4L-8 6" stroke="#ddd" stroke-width=".9"/><path d="M0 -5.6L5.2 0L0 5.6L-5.2 0z" fill="#6a6a6a" fill-opacity=".7" stroke="#fff" stroke-width="1.4"/></g>
<g transform="translate(980.0 95.5)"><path d="M-12.2 0L-6.5 -10.6H6.5L12.2 0L6.5 10.6H-6.5z" fill="#000" opacity=".28" transform="translate(0.6 1.2) scale(1.06)" filter="url(#sh)"/><path d="M-12.2 0L-6.5 -10.6H6.5L12.2 0L6.5 10.6H-6.5z" fill="url(#hxg)" stroke="#2e2e2e" stroke-width=".9"/><path d="M-10.6 -0.6L-5.7 -9.5H5.7L10.6 -0.6C4 -2.6 -4 -2.6 -10.6 -0.6z" fill="#fff" opacity=".13"/><path d="M-5.2 -3L0.4 -6.4L5.6 -3.6V3L0 6.4L-5.2 3.4z" fill="#d0d0d4"/><path d="M-5.2 -3L0 -0.4L5.6 -3.6L0.4 -6.4z" fill="#f4f4f6"/><path d="M0 -0.4V6.4L5.6 3V-3.6z" fill="#a8a8ae"/></g>
<g transform="translate(980.0 123.6)"><path d="M-12.2 0L-6.5 -10.6H6.5L12.2 0L6.5 10.6H-6.5z" fill="#000" opacity=".28" transform="translate(0.6 1.2) scale(1.06)" filter="url(#sh)"/><path d="M-12.2 0L-6.5 -10.6H6.5L12.2 0L6.5 10.6H-6.5z" fill="url(#hxg)" stroke="#2e2e2e" stroke-width=".9"/><path d="M-10.6 -0.6L-5.7 -9.5H5.7L10.6 -0.6C4 -2.6 -4 -2.6 -10.6 -0.6z" fill="#fff" opacity=".13"/><g transform="rotate(-32)"><path d="M-6.4 -3.4H3.6V3.4H-6.4z" fill="#c4c4c4"/><ellipse cx="-6.4" cy="0" rx="1.8" ry="3.4" fill="#d8d8d8"/><ellipse cx="3.6" cy="0" rx="1.9" ry="3.4" fill="#8a8a8a" stroke="#eee" stroke-width=".8"/><path d="M-6.4 -3.4H3.6" stroke="#fff" stroke-width=".8"/></g></g>
<g transform="translate(1008.0 95.5)"><path d="M-12.2 0L-6.5 -10.6H6.5L12.2 0L6.5 10.6H-6.5z" fill="#000" opacity=".28" transform="translate(0.6 1.2) scale(1.06)" filter="url(#sh)"/><path d="M-12.2 0L-6.5 -10.6H6.5L12.2 0L6.5 10.6H-6.5z" fill="url(#hxg)" stroke="#2e2e2e" stroke-width=".9"/><path d="M-10.6 -0.6L-5.7 -9.5H5.7L10.6 -0.6C4 -2.6 -4 -2.6 -10.6 -0.6z" fill="#fff" opacity=".13"/><g fill="#2a2a2a" stroke="#e8e8e8" stroke-width=".9"><path d="M-6 -3L-3 -6L0 -3L-3 0zM0 -3L3 -6L6 -3L3 0zM-6 3L-3 0L0 3L-3 6zM0 3L3 0L6 3L3 6z"/></g><path d="M-7.5 -6.5h15M-7.5 0h15M-7.5 6.5h15M-6 -7.5v15M0 -7.5v15M6 -7.5v15" stroke="#bbb" stroke-width=".5" opacity=".7"/></g>
<g transform="translate(1008.0 123.6)"><path d="M-12.2 0L-6.5 -10.6H6.5L12.2 0L6.5 10.6H-6.5z" fill="#000" opacity=".28" transform="translate(0.6 1.2) scale(1.06)" filter="url(#sh)"/><path d="M-12.2 0L-6.5 -10.6H6.5L12.2 0L6.5 10.6H-6.5z" fill="url(#hxg)" stroke="#2e2e2e" stroke-width=".9"/><path d="M-10.6 -0.6L-5.7 -9.5H5.7L10.6 -0.6C4 -2.6 -4 -2.6 -10.6 -0.6z" fill="#fff" opacity=".13"/><path d="M-4.4 -6.4L5.2 -6.8V6.6C1 6.4 -2 4.4 -6.6 3.6C-4.4 0.4 -4 -3 -4.4 -6.4z" fill="#c6c6ca" stroke="#f2f2f2" stroke-width=".8"/><path d="M0.6 -6.6V5.4M-5.2 -1.4C-1 -0.6 2 -0.6 5.2 -1" stroke="#8a8a8e" stroke-width=".8" fill="none"/></g>
<g transform="translate(1044.0 95.5)"><path d="M-12.2 0L-6.5 -10.6H6.5L12.2 0L6.5 10.6H-6.5z" fill="#000" opacity=".28" transform="translate(0.6 1.2) scale(1.06)" filter="url(#sh)"/><path d="M-12.2 0L-6.5 -10.6H6.5L12.2 0L6.5 10.6H-6.5z" fill="url(#hxg)" stroke="#2e2e2e" stroke-width=".9"/><path d="M-10.6 -0.6L-5.7 -9.5H5.7L10.6 -0.6C4 -2.6 -4 -2.6 -10.6 -0.6z" fill="#fff" opacity=".13"/><circle r="5.8" fill="#fff"/><path d="M-4.3 3.9A5.8 5.8 0 0 0 4.3 -3.9z" fill="#111" transform="rotate(8)"/><circle r="5.8" fill="none" stroke="#fff" stroke-width="1.4"/></g>
<g transform="translate(1072.1 95.5)"><path d="M-12.2 0L-6.5 -10.6H6.5L12.2 0L6.5 10.6H-6.5z" fill="#000" opacity=".28" transform="translate(0.6 1.2) scale(1.06)" filter="url(#sh)"/><path d="M-12.2 0L-6.5 -10.6H6.5L12.2 0L6.5 10.6H-6.5z" fill="url(#hxg)" stroke="#2e2e2e" stroke-width=".9"/><path d="M-10.6 -0.6L-5.7 -9.5H5.7L10.6 -0.6C4 -2.6 -4 -2.6 -10.6 -0.6z" fill="#fff" opacity=".13"/><text x="0" y="4.4" font-size="14" font-family='"Liberation Serif",serif' font-weight="bold" text-anchor="middle" fill="#fff" textLength="17.5" lengthAdjust="spacingAndGlyphs">0.1</text></g>
<g transform="translate(1044.0 123.6)"><path d="M-12.2 0L-6.5 -10.6H6.5L12.2 0L6.5 10.6H-6.5z" fill="#000" opacity=".28" transform="translate(0.6 1.2) scale(1.06)" filter="url(#sh)"/><path d="M-12.2 0L-6.5 -10.6H6.5L12.2 0L6.5 10.6H-6.5z" fill="url(#hxg)" stroke="#2e2e2e" stroke-width=".9"/><path d="M-10.6 -0.6L-5.7 -9.5H5.7L10.6 -0.6C4 -2.6 -4 -2.6 -10.6 -0.6z" fill="#fff" opacity=".13"/><text x="0" y="5.6" font-size="16" font-family='"Liberation Serif",serif' font-weight="bold" text-anchor="middle" fill="#fff">7</text></g>
<g transform="translate(1072.1 123.6)"><path d="M-12.2 0L-6.5 -10.6H6.5L12.2 0L6.5 10.6H-6.5z" fill="#000" opacity=".28" transform="translate(0.6 1.2) scale(1.06)" filter="url(#sh)"/><path d="M-12.2 0L-6.5 -10.6H6.5L12.2 0L6.5 10.6H-6.5z" fill="url(#hxg)" stroke="#2e2e2e" stroke-width=".9"/><path d="M-10.6 -0.6L-5.7 -9.5H5.7L10.6 -0.6C4 -2.6 -4 -2.6 -10.6 -0.6z" fill="#fff" opacity=".13"/><text x="0" y="5.6" font-size="16" font-family='"Liberation Serif",serif' font-weight="bold" text-anchor="middle" fill="#fff">A</text></g>
<g transform="translate(1108.1 95.9)"><rect x="-11.9" y="-11.9" width="23.8" height="23.8" rx="3.2" fill="url(#sqg)" stroke="#1c1c1c" stroke-width="1.3"/><rect x="-10.6" y="-10.6" width="21.2" height="21.2" rx="2.4" fill="none" stroke="#fff" stroke-opacity=".55" stroke-width=".9"/><path d="M-2.3 -8.6H2.3V-3.4H5.6L0 2.4L-5.6 -3.4H-2.3z" fill="#0c0c0c"/><path d="M-8.6 3.4H8.6" stroke="#0c0c0c" stroke-width="1.5"/><path d="M-7.4 5.4v2.4M-4.4 5.4v2.4M-1.4 5.4v2.4M1.6 5.4v2.4M4.6 5.4v2.4M7.6 5.4v2.4" stroke="#111" stroke-width="1.1"/></g>
<g transform="translate(1108.1 124.0)"><rect x="-11.9" y="-11.9" width="23.8" height="23.8" rx="3.2" fill="url(#ylg)" stroke="#1c1c1c" stroke-width="1.3"/><rect x="-10.6" y="-10.6" width="21.2" height="21.2" rx="2.4" fill="none" stroke="#fff" stroke-opacity=".55" stroke-width=".9"/><path d="M-8.4 5C-7 0 -6 6.5 -4.6 1C-3.4 -5 -2.6 7 -1.2 0C0 -8 1.2 6 2.6 -2C3.8 -9.5 5 5 6.2 -3.5C7 -8 7.8 -4 8.4 -7.5" stroke="#b4540a" stroke-width="1.7" fill="none" stroke-linecap="round"/></g>
<g transform="translate(1146.0 95.9)"><rect x="-11.9" y="-11.9" width="23.8" height="23.8" rx="3.2" fill="url(#sqg)" stroke="#1c1c1c" stroke-width="1.3"/><rect x="-10.6" y="-10.6" width="21.2" height="21.2" rx="2.4" fill="none" stroke="#fff" stroke-opacity=".55" stroke-width=".9"/><rect x="-4.6" y="-8.6" width="9.2" height="17.2" rx="1" fill="#1c1c1c" stroke="#111" stroke-width=".8"/><rect x="-3.8" y="-7.8" width="7.6" height="8" fill="url(#lg1)"/></g>
<g transform="translate(1146 124)"><circle r="11.6" fill="#8c8c8c" stroke="#3c3c3c" stroke-width="1.2"/><circle r="10.2" fill="none" stroke="#c8c8c8" stroke-width="1"/><path d="M6.4 -4.6L11.4 0L6.4 4.6z" fill="#1a1a1a"/><circle r="7.8" fill="url(#knb)" stroke="#111" stroke-width=".8"/></g>
<g transform="translate(1174.0 95.9)"><rect x="-11.9" y="-11.9" width="23.8" height="23.8" rx="3.2" fill="url(#sqg)" stroke="#1c1c1c" stroke-width="1.3"/><rect x="-10.6" y="-10.6" width="21.2" height="21.2" rx="2.4" fill="none" stroke="#fff" stroke-opacity=".55" stroke-width=".9"/><text x="0.5" y="-1.4" font-size="10.5" font-weight="bold" font-style="italic" text-anchor="middle" fill="#6e6e6e">4</text><text x="0.8" y="9.8" font-size="12.5" font-weight="bold" font-style="italic" text-anchor="middle" fill="#161616">5</text></g>
<g transform="translate(1174.0 124.0)"><rect x="-11.9" y="-11.9" width="23.8" height="23.8" rx="3.2" fill="url(#sqg)" stroke="#1c1c1c" stroke-width="1.3"/><rect x="-10.6" y="-10.6" width="21.2" height="21.2" rx="2.4" fill="none" stroke="#fff" stroke-opacity=".55" stroke-width=".9"/><g fill="#e6e6e6" stroke="#222" stroke-width=".9"><rect x="-8.4" y="-8" width="16.8" height="4" rx=".8"/><rect x="-8.4" y="-2" width="16.8" height="4" rx=".8"/><rect x="-8.4" y="4" width="16.8" height="4" rx=".8"/></g></g>
<g transform="translate(1212.2 95.9)"><rect x="-11.9" y="-11.9" width="23.8" height="23.8" rx="3.2" fill="url(#pkg)" stroke="#1c1c1c" stroke-width="1.3"/><rect x="-10.6" y="-10.6" width="21.2" height="21.2" rx="2.4" fill="none" stroke="#fff" stroke-opacity=".55" stroke-width=".9"/><path d="M-10.4 -4.4h20.8" stroke="#f7a8cc" stroke-width="3" opacity=".6"/><path d="M-11.4 1.2H11.4" stroke="#fff" stroke-width="1.2"/><circle cx="-10.6" cy="1.2" r="1.9" fill="#fff" stroke="#222" stroke-width=".9"/><circle cx="5" cy="1.2" r="1.9" fill="#fff" stroke="#222" stroke-width=".9"/><path d="M-10.4 6.4h20.8" stroke="#f9c0d8" stroke-width="3.4" opacity=".7"/></g>
<g transform="translate(1212.2 124.0)"><rect x="-11.9" y="-11.9" width="23.8" height="23.8" rx="3.2" fill="#6c3" stroke="#1c1c1c" stroke-width="1.3"/><rect x="-10.6" y="-10.6" width="21.2" height="21.2" rx="2.4" fill="none" stroke="#fff" stroke-opacity=".55" stroke-width=".9"/><rect x="-10.4" y="-10.4" width="5.2" height="5.2" fill="#b8f048"/><rect x="-5.2" y="-10.4" width="5.2" height="5.2" fill="#7ed320"/><rect x="0.0" y="-10.4" width="5.2" height="5.2" fill="#9ae83c"/><rect x="5.2" y="-10.4" width="5.2" height="5.2" fill="#c8f890"/><rect x="-10.4" y="-5.2" width="5.2" height="5.2" fill="#88dc20"/><rect x="-5.2" y="-5.2" width="5.2" height="5.2" fill="#2a8a1c"/><rect x="0.0" y="-5.2" width="5.2" height="5.2" fill="#a8ec30"/><rect x="5.2" y="-5.2" width="5.2" height="5.2" fill="#5cbc20"/><rect x="-10.4" y="0.0" width="5.2" height="5.2" fill="#60c828"/><rect x="-5.2" y="0.0" width="5.2" height="5.2" fill="#0c5c14"/><rect x="0.0" y="0.0" width="5.2" height="5.2" fill="#74d424"/><rect x="5.2" y="0.0" width="5.2" height="5.2" fill="#a0e4c0"/><rect x="-10.4" y="5.2" width="5.2" height="5.2" fill="#1c9c3c"/><rect x="-5.2" y="5.2" width="5.2" height="5.2" fill="#0a4a10"/><rect x="0.0" y="5.2" width="5.2" height="5.2" fill="#3cb060"/><rect x="5.2" y="5.2" width="5.2" height="5.2" fill="#a8e0f0"/></g>
<g transform="translate(1247.5 95.9)"><path d="M2.6 -9.4C-1 -4.6 -3.6 -1 -5.6 2M2.6 -9.4C3.8 -4 4.6 -1 5 3" stroke="#5a1a10" stroke-width="1.1" fill="none"/><path d="M-6.8 -5.6C-4 -10.4 0.4 -11 3.6 -10C1.6 -6.6 -2.6 -4.6 -6.8 -5.6z" fill="#2fa820" stroke="#14600e" stroke-width=".6"/><circle cx="-5.2" cy="4" r="4.8" fill="url(#chg)"/><circle cx="5" cy="6" r="4.6" fill="url(#chg)"/></g>
<g transform="translate(1247.5 124.0)"><rect x="-11.9" y="-11.9" width="23.8" height="23.8" rx="3.2" fill="url(#lg1)" stroke="#1c1c1c" stroke-width="1.3"/><rect x="-10.6" y="-10.6" width="21.2" height="21.2" rx="2.4" fill="none" stroke="#fff" stroke-opacity=".55" stroke-width=".9"/><path d="M0 10V2.6M0 3L-6 -3M0 3L6 -3.4M0 4.4V-7M-6 -3L-9 -4M-6 -3L-5.6 -8M6 -3.4L9.4 -4M6 -3.4L5 -8.6M0 -2L-3 -8M0 -2L3 -8.4M-3 0L-8.6 1M3 0L8.6 0.6" stroke="#0e0e0e" stroke-width="1.5" fill="none" stroke-linecap="round"/><path d="M-10 10h20" stroke="#0e0e0e" stroke-width="2.4"/></g>
<g transform="translate(1286 95.9)"><path d="M-9.6 -3.4H0.4V-7.8L10.2 0L0.4 7.8V3.4H-9.6z" fill="url(#dkar)" stroke="#1a1a1a" stroke-width="1"/></g>
<g transform="translate(1286 124)"><path d="M-9.6 -3.4H0.4V-7.8L10.2 0L0.4 7.8V3.4H-9.6z" fill="url(#ltar)" stroke="#3c3c3c" stroke-width="1"/></g>
<g transform="translate(1324 95.9)"><ellipse cx="-2.4" cy="-2.6" rx="6.4" ry="7.6" transform="rotate(35 -2.4 -2.6)" fill="url(#gys)" stroke="#777" stroke-width=".7"/><circle cx="-3" cy="-1.4" r="1.5" fill="#222"/><ellipse cx="3.6" cy="3.2" rx="5.8" ry="7" transform="rotate(35 3.6 3.2)" fill="url(#pks)" stroke="#7a0a3c" stroke-width=".7"/><circle cx="2" cy="3" r="1.6" fill="#6a0030"/></g>
<g transform="translate(1323 124)"><path d="M-1.8 -9.6H1.8V-3.6L7.4 8.2C7.8 9.4 7 10 6 10H-6C-7 10 -7.8 9.4 -7.4 8.2L-1.8 -3.6z" fill="#f4f4f6" stroke="#8a1a4a" stroke-width="1"/><path d="M-3.6 0.6H3.6L7 8.2C7.2 9.2 6.6 9.4 6 9.4H-6C-6.6 9.4 -7.2 9.2 -7 8.2z" fill="url(#pks)"/><path d="M-2.4 -9.8h4.8" stroke="#8a1a4a" stroke-width="1.2"/></g>
</svg>
<svg class="a" style="left:831px;top:166px" width="1081" height="31" viewBox="831 166 1081 31">
<defs><linearGradient id="fg" x1="0" y1="0" x2="0" y2="1"><stop offset="0" stop-color="#7cd048"/><stop offset="1" stop-color="#b4ee7a"/></linearGradient>
<linearGradient id="sv" x1="0" y1="0" x2="0" y2="1"><stop offset="0" stop-color="#3a7ee0"/><stop offset="1" stop-color="#1a4aa8"/></linearGradient>
<radialGradient id="bl" cx=".38" cy=".3" r=".8"><stop offset="0" stop-color="#d6f4ff"/><stop offset=".4" stop-color="#5ab4ee"/><stop offset="1" stop-color="#0e3c9c"/></radialGradient>
<radialGradient id="ey" cx=".5" cy=".5" r=".5"><stop offset="0" stop-color="#0a1a3a"/><stop offset=".3" stop-color="#0a1a3a"/><stop offset=".38" stop-color="#8ad0ff"/><stop offset="1" stop-color="#1c6ac8"/></radialGradient>
<linearGradient id="rc" x1="0" y1="0" x2="1" y2="1"><stop offset="0" stop-color="#f03030"/><stop offset="1" stop-color="#8a0000"/></linearGradient>
<linearGradient id="gc" x1="0" y1="0" x2="1" y2="1"><stop offset="0" stop-color="#7ae030"/><stop offset="1" stop-color="#0e6a0e"/></linearGradient>
<linearGradient id="or" x1="0" y1="0" x2="0" y2="1"><stop offset="0" stop-color="#ffc040"/><stop offset="1" stop-color="#a02a08"/></linearGradient></defs>
<path d="M839.4 171.4h7.6l2 2h2.4v6.6h-12z" fill="#f4f4f0" stroke="#8a8a8a" stroke-width=".8"/><path d="M837.2 191.4V181.2l3-3.4h4.6l2-2.4h8.6v16z" fill="url(#fg)" stroke="#2a7a1a" stroke-width="1.1"/><path d="M839 189.6h15" stroke="#d8f8b8" stroke-width="1" stroke-dasharray="1.5 1"/>
<path d="M867 171.2h19.4l1.6 1.6v18.2h-19.4l-1.6 -1.6z" fill="url(#sv)" stroke="#123a8a" stroke-width="1"/><rect x="870.4" y="171.8" width="13.4" height="8.4" fill="#dcdcdc" stroke="#9a9a9a" stroke-width=".6"/><path d="M871.6 174.6h11M871.6 177h11" stroke="#aaa" stroke-width=".8"/><rect x="871.4" y="183.6" width="11.4" height="7.4" fill="#c8d4e8" stroke="#0e2a6a" stroke-width=".7"/><rect x="873" y="185" width="3.6" height="4.6" fill="#2a5ab8"/>
<path d="M977.6 177.4V172.6h5M989.6 172.6h5v4.8M994.6 184.6v4.8h-5M982.6 189.4h-5v-4.8" stroke="#111" stroke-width="2" fill="none"/><path d="M984.4 179.2l3.4 3.4M987.8 179.2l-3.4 3.4" stroke="#111" stroke-width="1.1"/>
<path d="M1001.6 180.2h5.2l-2.6 2.8z" fill="#111"/><path d="M1043.4 180.2h5.2l-2.6 2.8z" fill="#111"/>
<path d="M1015.4 181C1020 174.6 1031.6 174 1036.6 181C1031.6 187.6 1020 187.2 1015.4 181z" fill="#fff" stroke="#111" stroke-width="1.5"/><circle cx="1026" cy="180.8" r="4.9" fill="url(#ey)"/><circle cx="1024.6" cy="179.4" r="1.1" fill="#fff"/>
<path d="M1058 177C1062 178 1058.6 184 1060.4 187.6C1062 190.4 1066 189.6 1068 186.6" stroke="#3a0a0a" stroke-width="1.7" fill="none"/><path d="M1064.4 187.4L1066.2 182L1075.6 171.6C1077 170.6 1079 172.6 1078 174L1069 184.6z" fill="#e02020" stroke="#8a0a0a" stroke-width=".6"/><path d="M1064.4 187.4L1066.2 182L1069 184.6z" fill="#e8c088"/><path d="M1075.6 171.6C1077 170.6 1079 172.6 1078 174L1076.4 175.8L1074 173.4z" fill="#f8b0b0"/>
<g transform="translate(1721.8 178.4) scale(.82)" fill="#e4e4e4" stroke="#8a8a8a" stroke-width=".9"><g transform="rotate(-38) scale(1.18)"><path d="M-6 -6.6H4.4V6.6H-6z"/><ellipse cx="-6" cy="0" rx="2.8" ry="6.6"/><ellipse cx="4.4" cy="0" rx="3" ry="6.6"/></g></g><path d="M1713 185.6C1717 181.6 1727 181.6 1731 185.6C1727 191.4 1717 191.4 1713 185.6z" fill="#2a2a2a" stroke="#777" stroke-width=".8"/>
<g transform="translate(1751 180.6)" fill="#fff" fill-opacity=".6" stroke="#222" stroke-width=".9"><g transform="rotate(-38) scale(1.18)"><path d="M-6 -6.6H4.4V6.6H-6z"/><ellipse cx="-6" cy="0" rx="2.8" ry="6.6"/><ellipse cx="4.4" cy="0" rx="3" ry="6.6"/></g><g transform="rotate(-38) scale(1.18)"><ellipse cx="4.4" cy="0" rx="1.7" ry="4"/></g></g>
<rect x="1766.4" y="167.4" width="27.4" height="27.2" fill="#fdfdfd" stroke="#1a64b4" stroke-width="1" stroke-dasharray="1.2 .8"/>
<g transform="translate(1780 180.8)" fill="url(#rc)" stroke="#6a0000" stroke-width=".7"><g transform="rotate(-38) scale(1.18)"><path d="M-6 -6.6H4.4V6.6H-6z"/><ellipse cx="-6" cy="0" rx="2.8" ry="6.6"/><ellipse cx="4.4" cy="0" rx="3" ry="6.6"/></g><g transform="rotate(-38) scale(1.18)"><ellipse cx="4.4" cy="0" rx="1.9" ry="4.3" fill="#6a0000"/></g></g>
<g transform="translate(1824.3 180.6)"><g fill="#dcdcdc" stroke="#8a8a8a" stroke-width=".8"><g transform="rotate(-38) scale(1.18)"><path d="M-6 -6.6H4.4V6.6H-6z"/><ellipse cx="-6" cy="0" rx="2.8" ry="6.6"/><ellipse cx="4.4" cy="0" rx="3" ry="6.6"/></g></g><g clip-path="none"><g fill="url(#gc)" stroke="#0a4a0a" stroke-width=".7" transform="translate(1.6 -2.4) scale(.86)"><g transform="rotate(-35)"><path d="M-2 -6.4H5V6.4H-2z"/><ellipse cx="5" cy="0" rx="3" ry="6.4"/><ellipse cx="5" cy="0" rx="1.6" ry="3.8" fill="#0a4a0a"/></g></g></g><path d="M-9.6 -6.4L6.4 9.6" stroke="#222" stroke-width="1"/></g>
<g transform="translate(1852 180.4)"><circle r="9.6" fill="#eee" stroke="#9a9a9a" stroke-width=".7"/><path d="M0 -9.6A9.6 9.6 0 0 0 0 9.6z" fill="url(#or)"/><path d="M-6 -5C-3 -8 0 -8.6 0 -8.6" stroke="#fff" stroke-opacity=".6" stroke-width="1.4" fill="none"/></g>
<circle cx="1886" cy="180.6" r="9" fill="url(#bl)" stroke="#0a2a7a" stroke-width=".6"/><path d="M1900 180.2h5.4l-2.7 3z" fill="#111"/>
</svg>
<!-- taskbar -->
<div class="a" style="left:0;top:1040px;width:1920px;height:40px;background:linear-gradient(90deg,#100c0a 0%,#15100d 30%,#1a1411 45%,#1b1512 100%);clip-path:polygon(0 0,828px 0,828px 7px,100% 7px,100% 100%,0 100%)"></div>
<div class="a" style="left:828px;top:1040px;width:1092px;height:7px;background:rgba(28,26,26,0.9)"></div>
<div class="a" style="left:147px;top:1040px;width:48px;height:38.4px;background:#3b3735"></div>
<div class="a" style="left:147px;top:1078.3px;width:48px;height:1.7px;background:#79b8ea"></div>
<div class="a" style="left:200px;top:1078.3px;width:40px;height:1.7px;background:#79b8ea"></div>
<svg class="a" style="left:15px;top:1051px" width="18" height="18" viewBox="0 0 18 18"><path d="M0.8 3.2L7.4 2.3V8.4H0.8zM8.2 2.2L17.2 0.9V8.4H8.2zM0.8 9.2H7.4V15.3L0.8 14.4zM8.2 9.2H17.2V16.7L8.2 15.4z" fill="#fff"/></svg>
<svg class="a" style="left:63px;top:1051px" width="19" height="19" viewBox="0 0 19 19"><circle cx="10.8" cy="6.9" r="5.3" fill="none" stroke="#fff" stroke-width="1.2"/><path d="M7.3 10.9L1.4 16.7" stroke="#fff" stroke-width="1.4"/></svg>
<svg class="a" style="left:109px;top:1051px" width="22" height="18" viewBox="0 0 22 18"><rect x="5.4" y="2.2" width="11" height="13.4" fill="none" stroke="#fff" stroke-width="1.2"/><path d="M3.4 4.2H1.3v9.6h2.1M18.6 4.2h2.1v9.6h-2.1" fill="none" stroke="#fff" stroke-width="1.2"/></svg>
<svg class="a" style="left:159px;top:1048px" width="24" height="24" viewBox="0 0 24 24"><rect width="24" height="23.6" fill="#1b1b1b"/><path d="M1 1h6.5l2.5 5.5 5 2.5 8-5.5-1 3.5-7.5 7 1.5 6-3.5 2.5-2-3-1.5-5-5-2-3 .5z" fill="#dcdcdc"/><path d="M8.5 1H23v3.5l-8 5.5-5-2.500z" fill="#303030"/><path d="M9 2.500h12v1.500l-6.500 4-4-2z" fill="#4a4a4a"/><path d="M1 14.500l3-.5 5 2 1.500 5 1.500 2.600H1z" fill="#1e1e1e"/><circle cx="5" cy="12.800" r="1" fill="#c83030"/><path d="M3 9l3 1" stroke="#888" stroke-width=".8"/><path d="M11 20.500l2.500 2" stroke="#f4f4f4" stroke-width="2"/></svg>
<svg class="a" style="left:209px;top:1049px" width="22" height="22" viewBox="-11 -11 22 22"><circle r="10.8" fill="#dc4a3d"/><path d="M0 0L-9.35 -5.4A10.8 10.8 0 0 0 -0.5 10.8L4.6 2.2z" fill="#1ea35a"/><path d="M0 0L4.6 2.4L-0.6 10.8A10.8 10.8 0 0 0 10.3 -3.2H0z" fill="#fdd045"/><circle r="5" fill="#f1f1f1"/><circle r="3.9" fill="#4c8bf0"/></svg>
<svg class="a" style="left:1783px;top:1050px" width="70" height="22" viewBox="0 0 70 22"><path d="M3.2 13.4l5-5 5 5" stroke="#fff" stroke-width="1.2" fill="none"/><path d="M25.5 5.5h10.8v8.2h-8.6v-5.5M24 5.2h4.5v3.4H24zM29 16.8h6M32 13.7v3" stroke="#fff" stroke-width="1.1" fill="none"/><path d="M44.4 8.7h2.3l3-2.8v10l-3-2.8h-2.3z" stroke="#fff" stroke-width="1" fill="none"/><path d="M51.5 8.6a3.2 3.2 0 0 1 0 4.6M53.4 6.9a5.6 5.6 0 0 1 0 8M55.3 5.2a8 8 0 0 1 0 11.4" stroke="#fff" stroke-width="0.9" fill="none"/></svg>
<span class="t" style="left:1862.50px;top:1042.77px;font-size:12px;line-height:16px;color:#fff;letter-spacing:-0.527px;">5:00 PM</span>
<span class="t" style="left:1860.00px;top:1060.47px;font-size:12px;line-height:16px;color:#fff;letter-spacing:-0.151px;">5/6/2018</span>
<div class="a" style="left:1914.5px;top:1040px;width:1px;height:40px;background:#4a4644"></div>
</body></html>
